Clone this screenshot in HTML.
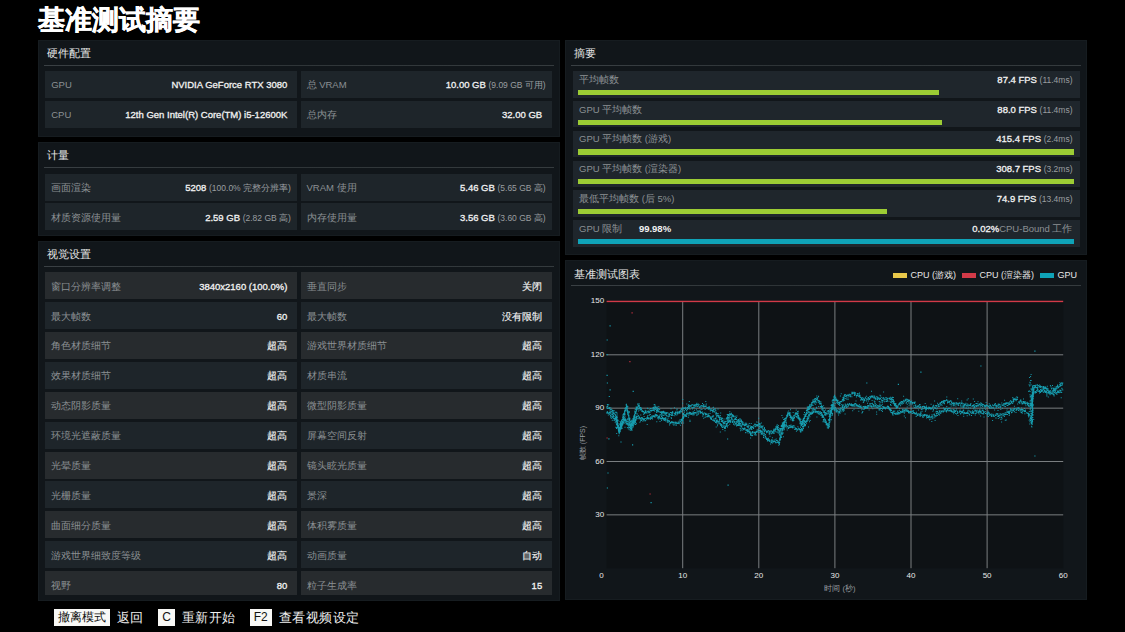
<!DOCTYPE html><html><head><meta charset="utf-8"><style>
*{margin:0;padding:0;box-sizing:border-box}
html,body{width:1125px;height:632px;background:#000;overflow:hidden;font-family:"Liberation Sans",sans-serif;color:#eee}
.a{position:absolute}
.title{left:37.8px;top:2px;font-size:27px;font-weight:bold;color:#fff;line-height:36px;letter-spacing:0px;white-space:nowrap;-webkit-text-stroke:0.5px #fff}
.panel{position:absolute;background:#11161a;border:1px solid #161c20}
.ph{position:absolute;font-size:11px;color:#e6e6e6;line-height:14px;white-space:nowrap}
.hl{position:absolute;height:1px;background:linear-gradient(90deg,#3a4044,#2e3437 40%,#353b3e)}
.row{position:absolute;height:27px;background:#1e252a}
.row.g{background:#272b2e}
.lab{position:absolute;left:6px;top:8.6px;font-size:9.5px;line-height:11px;color:#8b9093;white-space:nowrap}
.val{position:absolute;right:10px;top:8.6px;font-size:9.5px;line-height:11px;color:#f2f2f2;font-weight:normal;-webkit-text-stroke:0.3px #f2f2f2;white-space:nowrap}
.cj{font-weight:normal;-webkit-text-stroke:0.15px #f2f2f2}
.sub{font-weight:normal;color:#9a9ea0;font-size:8.5px;-webkit-text-stroke:0}
.srow{position:absolute;left:573px;width:506.5px;height:26.5px;background:#1f262c}
.bar{position:absolute;left:5.2px;top:18.7px;height:5.1px;background:#9ccc34}
.key{position:absolute;top:609px;height:17px;background:#f8f8f6;color:#111;font-size:12px;font-weight:normal;line-height:17px;text-align:center;white-space:nowrap}
.kt{position:absolute;top:609px;height:17px;color:#f0f0f0;font-size:13px;letter-spacing:0.42px;line-height:17px;white-space:nowrap}
</style></head><body><div class="a title">基准测试摘要</div>
<div class="panel" style="left:38px;top:40px;width:522px;height:97px"></div>
<div class="ph" style="left:47px;top:46px">硬件配置</div>
<div class="hl" style="left:44px;top:64.7px;width:510px"></div>
<div class="row " style="left:45.2px;top:70.5px;width:252.2px"><div class="lab">GPU</div><div class="val">NVIDIA GeForce RTX 3080</div></div>
<div class="row " style="left:300.5px;top:70.5px;width:251.7px"><div class="lab">总 VRAM</div><div class="val" style="right:6.5px">10.00 GB <span class="sub">(9.09 GB 可用)</span></div></div>
<div class="row " style="left:45.2px;top:100.5px;width:252.2px"><div class="lab">CPU</div><div class="val">12th Gen Intel(R) Core(TM) i5-12600K</div></div>
<div class="row " style="left:300.5px;top:100.5px;width:251.7px"><div class="lab">总内存</div><div class="val">32.00 GB</div></div>
<div class="panel" style="left:38px;top:142px;width:522px;height:94px"></div>
<div class="ph" style="left:47px;top:148px">计量</div>
<div class="hl" style="left:44px;top:166.7px;width:510px"></div>
<div class="row " style="left:45.2px;top:173.5px;width:252.2px"><div class="lab">画面渲染</div><div class="val" style="right:6.5px">5208 <span class="sub">(100.0% 完整分辨率)</span></div></div>
<div class="row " style="left:300.5px;top:173.5px;width:251.7px"><div class="lab">VRAM 使用</div><div class="val" style="right:6.5px">5.46 GB <span class="sub">(5.65 GB 高)</span></div></div>
<div class="row " style="left:45.2px;top:203.4px;width:252.2px"><div class="lab">材质资源使用量</div><div class="val" style="right:6.5px">2.59 GB <span class="sub">(2.82 GB 高)</span></div></div>
<div class="row " style="left:300.5px;top:203.4px;width:251.7px"><div class="lab">内存使用量</div><div class="val" style="right:6.5px">3.56 GB <span class="sub">(3.60 GB 高)</span></div></div>
<div class="panel" style="left:38px;top:241px;width:522px;height:360px"></div>
<div class="ph" style="left:47px;top:247px">视觉设置</div>
<div class="hl" style="left:44px;top:265.7px;width:510px"></div>
<div class="a" style="left:0;top:0;width:1125px;height:595px;overflow:hidden">
<div class="row g" style="left:45.2px;top:272.1px;width:252.2px"><div class="lab">窗口分辨率调整</div><div class="val">3840x2160 (100.0%)</div></div>
<div class="row g" style="left:300.5px;top:272.1px;width:251.7px"><div class="lab">垂直同步</div><div class="val"><span class="cj">关闭</span></div></div>
<div class="row " style="left:45.2px;top:302.0px;width:252.2px"><div class="lab">最大帧数</div><div class="val">60</div></div>
<div class="row " style="left:300.5px;top:302.0px;width:251.7px"><div class="lab">最大帧数</div><div class="val"><span class="cj">没有限制</span></div></div>
<div class="row g" style="left:45.2px;top:331.90000000000003px;width:252.2px"><div class="lab">角色材质细节</div><div class="val"><span class="cj">超高</span></div></div>
<div class="row g" style="left:300.5px;top:331.90000000000003px;width:251.7px"><div class="lab">游戏世界材质细节</div><div class="val"><span class="cj">超高</span></div></div>
<div class="row " style="left:45.2px;top:361.8px;width:252.2px"><div class="lab">效果材质细节</div><div class="val"><span class="cj">超高</span></div></div>
<div class="row " style="left:300.5px;top:361.8px;width:251.7px"><div class="lab">材质串流</div><div class="val"><span class="cj">超高</span></div></div>
<div class="row g" style="left:45.2px;top:391.70000000000005px;width:252.2px"><div class="lab">动态阴影质量</div><div class="val"><span class="cj">超高</span></div></div>
<div class="row g" style="left:300.5px;top:391.70000000000005px;width:251.7px"><div class="lab">微型阴影质量</div><div class="val"><span class="cj">超高</span></div></div>
<div class="row " style="left:45.2px;top:421.6px;width:252.2px"><div class="lab">环境光遮蔽质量</div><div class="val"><span class="cj">超高</span></div></div>
<div class="row " style="left:300.5px;top:421.6px;width:251.7px"><div class="lab">屏幕空间反射</div><div class="val"><span class="cj">超高</span></div></div>
<div class="row g" style="left:45.2px;top:451.5px;width:252.2px"><div class="lab">光晕质量</div><div class="val"><span class="cj">超高</span></div></div>
<div class="row g" style="left:300.5px;top:451.5px;width:251.7px"><div class="lab">镜头眩光质量</div><div class="val"><span class="cj">超高</span></div></div>
<div class="row " style="left:45.2px;top:481.4px;width:252.2px"><div class="lab">光栅质量</div><div class="val"><span class="cj">超高</span></div></div>
<div class="row " style="left:300.5px;top:481.4px;width:251.7px"><div class="lab">景深</div><div class="val"><span class="cj">超高</span></div></div>
<div class="row g" style="left:45.2px;top:511.3px;width:252.2px"><div class="lab">曲面细分质量</div><div class="val"><span class="cj">超高</span></div></div>
<div class="row g" style="left:300.5px;top:511.3px;width:251.7px"><div class="lab">体积雾质量</div><div class="val"><span class="cj">超高</span></div></div>
<div class="row " style="left:45.2px;top:541.2px;width:252.2px"><div class="lab">游戏世界细致度等级</div><div class="val"><span class="cj">超高</span></div></div>
<div class="row " style="left:300.5px;top:541.2px;width:251.7px"><div class="lab">动画质量</div><div class="val"><span class="cj">自动</span></div></div>
<div class="row g" style="left:45.2px;top:571.1px;width:252.2px"><div class="lab">视野</div><div class="val">80</div></div>
<div class="row g" style="left:300.5px;top:571.1px;width:251.7px"><div class="lab">粒子生成率</div><div class="val">15</div></div>
</div>
<div class="panel" style="left:565px;top:40px;width:522px;height:215px"></div>
<div class="ph" style="left:574px;top:46px">摘要</div>
<div class="hl" style="left:571px;top:64.7px;width:510px"></div>
<div class="srow" style="top:71.00px"><div class="lab" style="top:2.7px">平均帧数</div><div class="val" style="top:2.7px;right:7px">87.4 FPS <span class="sub">(11.4ms)</span></div><div class="bar" style="width:361.0px;background:#9ccc34"></div></div>
<div class="srow" style="top:100.86px"><div class="lab" style="top:2.7px">GPU 平均帧数</div><div class="val" style="top:2.7px;right:7px">88.0 FPS <span class="sub">(11.4ms)</span></div><div class="bar" style="width:363.4px;background:#9ccc34"></div></div>
<div class="srow" style="top:130.72px"><div class="lab" style="top:2.7px">GPU 平均帧数 (游戏)</div><div class="val" style="top:2.7px;right:7px">415.4 FPS <span class="sub">(2.4ms)</span></div><div class="bar" style="width:495.6px;background:#9ccc34"></div></div>
<div class="srow" style="top:160.58px"><div class="lab" style="top:2.7px">GPU 平均帧数 (渲染器)</div><div class="val" style="top:2.7px;right:7px">308.7 FPS <span class="sub">(3.2ms)</span></div><div class="bar" style="width:495.6px;background:#9ccc34"></div></div>
<div class="srow" style="top:190.44px"><div class="lab" style="top:2.7px">最低平均帧数 (后 5%)</div><div class="val" style="top:2.7px;right:7px">74.9 FPS <span class="sub">(13.4ms)</span></div><div class="bar" style="width:309.3px;background:#9ccc34"></div></div>
<div class="srow" style="top:220.30px"><div class="lab" style="top:2.7px">GPU 限制 <span style="color:#f2f2f2;font-weight:bold;margin-left:14px">99.98%</span></div><div class="val" style="top:2.7px;right:7px">0.02%<span style="font-weight:normal;color:#8b9093;-webkit-text-stroke:0">CPU-Bound 工作</span></div><div class="bar" style="width:495.6px;background:#0fa3b8"></div></div>
<div class="panel" style="left:565px;top:260px;width:522px;height:340px"></div>
<div class="ph" style="left:574px;top:266.6px">基准测试图表</div>
<div class="hl" style="left:571px;top:285.2px;width:510px"></div>
<svg class="a" style="left:0;top:0" width="1125" height="632" viewBox="0 0 1125 632"><rect x="606.6" y="301.45" width="456.6" height="266.75000000000006" fill="#0e1215"/><rect x="606.6" y="514.35" width="456.6" height="1" fill="#7a7e80"/><rect x="606.6" y="461.00" width="456.6" height="1" fill="#7a7e80"/><rect x="606.6" y="407.65" width="456.6" height="1" fill="#7a7e80"/><rect x="606.6" y="354.30" width="456.6" height="1" fill="#7a7e80"/><rect x="682.20" y="301.45" width="1" height="266.75000000000006" fill="#7a7e80"/><rect x="758.30" y="301.45" width="1" height="266.75000000000006" fill="#7a7e80"/><rect x="834.40" y="301.45" width="1" height="266.75000000000006" fill="#7a7e80"/><rect x="910.50" y="301.45" width="1" height="266.75000000000006" fill="#7a7e80"/><rect x="986.60" y="301.45" width="1" height="266.75000000000006" fill="#7a7e80"/><rect x="606.6" y="300.75" width="456.6" height="1.4" fill="#d23a48"/><path d="M606.3 407.3h1v1h-1zM606.5 406.0h1v1h-1zM607.1 406.3h1v1h-1zM607.3 405.6h1v1h-1zM606.8 404.2h1v1h-1zM606.9 407.9h1v1h-1zM608.2 404.2h1v1h-1zM608.4 407.2h1v1h-1zM608.6 408.1h1v1h-1zM608.2 408.0h1v1h-1zM609.0 408.1h1v1h-1zM608.7 407.9h1v1h-1zM608.9 408.0h1v1h-1zM609.3 407.1h1v1h-1zM608.8 407.8h1v1h-1zM609.5 411.4h1v1h-1zM609.4 409.5h1v1h-1zM610.1 408.9h1v1h-1zM610.4 407.6h1v1h-1zM610.3 410.8h1v1h-1zM610.4 408.9h1v1h-1zM611.4 409.3h1v1h-1zM611.7 410.6h1v1h-1zM612.1 410.1h1v1h-1zM611.1 411.5h1v1h-1zM611.5 411.1h1v1h-1zM612.6 411.6h1v1h-1zM612.2 412.2h1v1h-1zM612.7 411.9h1v1h-1zM613.1 410.2h1v1h-1zM612.7 412.9h1v1h-1zM613.7 410.2h1v1h-1zM613.3 413.0h1v1h-1zM612.8 412.6h1v1h-1zM613.9 412.7h1v1h-1zM612.8 411.8h1v1h-1zM613.4 413.0h1v1h-1zM614.9 414.2h1v1h-1zM614.8 412.2h1v1h-1zM614.4 414.1h1v1h-1zM614.9 414.2h1v1h-1zM615.1 415.1h1v1h-1zM615.3 414.5h1v1h-1zM615.2 414.9h1v1h-1zM615.3 414.6h1v1h-1zM615.5 416.1h1v1h-1zM616.5 412.7h1v1h-1zM615.6 415.8h1v1h-1zM615.7 416.8h1v1h-1zM616.0 416.6h1v1h-1zM615.8 416.6h1v1h-1zM616.5 417.2h1v1h-1zM616.5 416.0h1v1h-1zM616.0 418.1h1v1h-1zM615.5 417.5h1v1h-1zM616.4 420.1h1v1h-1zM616.8 416.9h1v1h-1zM616.4 418.0h1v1h-1zM616.4 419.3h1v1h-1zM616.4 421.9h1v1h-1zM617.0 419.3h1v1h-1zM617.6 419.7h1v1h-1zM616.7 421.0h1v1h-1zM616.9 422.0h1v1h-1zM617.0 419.8h1v1h-1zM616.9 420.7h1v1h-1zM617.5 420.4h1v1h-1zM616.7 421.8h1v1h-1zM616.6 423.7h1v1h-1zM616.7 423.0h1v1h-1zM617.1 421.9h1v1h-1zM617.7 424.8h1v1h-1zM617.7 424.8h1v1h-1zM617.1 422.6h1v1h-1zM617.4 423.9h1v1h-1zM617.1 423.0h1v1h-1zM616.7 425.3h1v1h-1zM617.6 425.5h1v1h-1zM617.6 426.4h1v1h-1zM617.4 425.6h1v1h-1zM617.4 426.5h1v1h-1zM618.1 425.2h1v1h-1zM617.3 426.1h1v1h-1zM618.3 426.6h1v1h-1zM618.6 426.8h1v1h-1zM617.3 427.3h1v1h-1zM617.8 428.5h1v1h-1zM618.1 427.1h1v1h-1zM618.1 428.8h1v1h-1zM617.7 428.2h1v1h-1zM618.6 427.9h1v1h-1zM617.8 428.8h1v1h-1zM617.9 429.5h1v1h-1zM619.0 428.8h1v1h-1zM618.8 429.4h1v1h-1zM619.2 429.3h1v1h-1zM618.9 431.1h1v1h-1zM618.7 431.9h1v1h-1zM618.9 428.6h1v1h-1zM618.7 429.0h1v1h-1zM619.6 428.4h1v1h-1zM619.3 429.7h1v1h-1zM619.8 429.6h1v1h-1zM618.7 430.0h1v1h-1zM619.3 430.1h1v1h-1zM619.8 429.0h1v1h-1zM619.7 428.7h1v1h-1zM619.3 428.3h1v1h-1zM619.8 425.2h1v1h-1zM619.6 428.0h1v1h-1zM619.7 428.0h1v1h-1zM620.4 426.1h1v1h-1zM620.4 428.8h1v1h-1zM619.9 426.1h1v1h-1zM619.9 423.1h1v1h-1zM620.7 424.2h1v1h-1zM620.9 426.8h1v1h-1zM620.6 422.6h1v1h-1zM619.5 424.3h1v1h-1zM620.8 425.8h1v1h-1zM620.8 424.9h1v1h-1zM620.8 427.0h1v1h-1zM620.8 423.0h1v1h-1zM621.0 424.6h1v1h-1zM620.9 423.9h1v1h-1zM620.8 422.9h1v1h-1zM621.3 422.6h1v1h-1zM620.7 423.0h1v1h-1zM620.9 423.0h1v1h-1zM621.7 421.8h1v1h-1zM621.3 420.1h1v1h-1zM621.4 421.6h1v1h-1zM622.2 421.8h1v1h-1zM621.8 421.2h1v1h-1zM622.2 419.3h1v1h-1zM621.9 421.1h1v1h-1zM622.2 420.9h1v1h-1zM623.1 418.9h1v1h-1zM622.1 422.2h1v1h-1zM622.2 419.1h1v1h-1zM621.8 418.9h1v1h-1zM622.3 418.4h1v1h-1zM622.8 418.7h1v1h-1zM622.9 418.3h1v1h-1zM622.2 416.9h1v1h-1zM622.3 415.8h1v1h-1zM622.5 417.6h1v1h-1zM623.2 418.1h1v1h-1zM623.7 417.0h1v1h-1zM622.6 414.8h1v1h-1zM623.4 416.9h1v1h-1zM623.6 413.8h1v1h-1zM622.6 414.1h1v1h-1zM623.3 414.2h1v1h-1zM623.7 417.0h1v1h-1zM623.8 413.2h1v1h-1zM623.2 412.9h1v1h-1zM624.4 413.9h1v1h-1zM623.3 413.5h1v1h-1zM624.5 414.0h1v1h-1zM624.3 413.3h1v1h-1zM624.2 414.4h1v1h-1zM623.8 412.4h1v1h-1zM624.0 410.4h1v1h-1zM624.2 411.4h1v1h-1zM624.4 413.3h1v1h-1zM624.4 411.1h1v1h-1zM624.5 415.8h1v1h-1zM624.5 409.8h1v1h-1zM624.3 410.6h1v1h-1zM625.0 409.6h1v1h-1zM625.0 409.7h1v1h-1zM625.4 406.9h1v1h-1zM625.0 409.9h1v1h-1zM625.3 410.3h1v1h-1zM624.3 408.2h1v1h-1zM625.5 407.1h1v1h-1zM625.3 407.3h1v1h-1zM625.4 407.7h1v1h-1zM625.2 407.6h1v1h-1zM625.9 407.9h1v1h-1zM625.8 406.8h1v1h-1zM626.0 406.1h1v1h-1zM625.7 404.0h1v1h-1zM625.7 406.8h1v1h-1zM625.8 405.1h1v1h-1zM626.1 406.3h1v1h-1zM626.4 405.5h1v1h-1zM626.3 407.4h1v1h-1zM626.5 407.9h1v1h-1zM627.0 405.8h1v1h-1zM627.3 406.1h1v1h-1zM626.5 407.4h1v1h-1zM626.0 408.6h1v1h-1zM626.6 408.7h1v1h-1zM627.0 409.5h1v1h-1zM626.6 410.7h1v1h-1zM626.8 410.8h1v1h-1zM626.5 409.1h1v1h-1zM627.1 410.5h1v1h-1zM626.7 410.1h1v1h-1zM627.5 410.4h1v1h-1zM627.2 411.2h1v1h-1zM627.5 411.4h1v1h-1zM626.5 410.3h1v1h-1zM627.0 412.2h1v1h-1zM627.1 412.6h1v1h-1zM627.3 420.7h1v1h-1zM627.0 412.4h1v1h-1zM627.7 413.6h1v1h-1zM627.3 413.8h1v1h-1zM628.2 411.5h1v1h-1zM628.4 414.7h1v1h-1zM627.3 414.2h1v1h-1zM627.2 419.0h1v1h-1zM628.6 412.2h1v1h-1zM628.2 415.2h1v1h-1zM627.7 412.7h1v1h-1zM627.7 413.9h1v1h-1zM628.1 415.6h1v1h-1zM628.4 418.5h1v1h-1zM628.3 416.8h1v1h-1zM628.0 415.3h1v1h-1zM628.9 417.5h1v1h-1zM628.3 417.7h1v1h-1zM628.9 417.5h1v1h-1zM629.2 417.4h1v1h-1zM628.4 418.2h1v1h-1zM629.4 417.9h1v1h-1zM629.3 418.8h1v1h-1zM628.6 419.4h1v1h-1zM629.2 418.9h1v1h-1zM628.8 422.5h1v1h-1zM629.3 421.7h1v1h-1zM628.9 420.1h1v1h-1zM628.9 422.3h1v1h-1zM629.4 422.5h1v1h-1zM629.8 420.6h1v1h-1zM629.5 422.4h1v1h-1zM629.7 421.4h1v1h-1zM629.8 424.8h1v1h-1zM629.7 422.3h1v1h-1zM630.3 421.1h1v1h-1zM630.6 422.7h1v1h-1zM630.1 425.4h1v1h-1zM630.4 423.7h1v1h-1zM629.6 424.4h1v1h-1zM630.3 424.0h1v1h-1zM630.2 424.1h1v1h-1zM630.2 425.5h1v1h-1zM630.3 423.8h1v1h-1zM629.8 425.7h1v1h-1zM630.4 426.4h1v1h-1zM630.7 425.9h1v1h-1zM630.4 425.7h1v1h-1zM631.3 429.1h1v1h-1zM630.5 424.2h1v1h-1zM630.5 429.1h1v1h-1zM630.6 427.8h1v1h-1zM630.8 425.8h1v1h-1zM631.4 424.7h1v1h-1zM631.2 425.3h1v1h-1zM632.0 424.1h1v1h-1zM631.1 425.8h1v1h-1zM631.5 424.0h1v1h-1zM631.3 422.0h1v1h-1zM631.1 423.1h1v1h-1zM631.0 424.9h1v1h-1zM631.8 424.9h1v1h-1zM631.8 423.0h1v1h-1zM631.3 425.3h1v1h-1zM632.2 422.2h1v1h-1zM632.3 422.7h1v1h-1zM631.8 422.0h1v1h-1zM631.7 420.3h1v1h-1zM632.6 419.8h1v1h-1zM632.5 420.1h1v1h-1zM631.9 421.9h1v1h-1zM632.5 421.1h1v1h-1zM633.0 419.0h1v1h-1zM631.7 421.8h1v1h-1zM632.9 421.4h1v1h-1zM633.0 419.1h1v1h-1zM633.3 416.9h1v1h-1zM633.4 418.8h1v1h-1zM633.5 421.0h1v1h-1zM633.6 417.5h1v1h-1zM633.0 418.0h1v1h-1zM633.6 417.2h1v1h-1zM633.3 416.6h1v1h-1zM633.8 417.4h1v1h-1zM633.2 415.6h1v1h-1zM634.1 416.3h1v1h-1zM634.0 416.9h1v1h-1zM634.1 414.4h1v1h-1zM634.4 417.4h1v1h-1zM634.0 414.8h1v1h-1zM634.1 413.8h1v1h-1zM634.0 417.1h1v1h-1zM634.1 413.8h1v1h-1zM635.4 411.2h1v1h-1zM634.8 415.4h1v1h-1zM635.5 413.5h1v1h-1zM634.9 412.1h1v1h-1zM634.6 413.0h1v1h-1zM634.4 411.0h1v1h-1zM635.5 413.1h1v1h-1zM634.9 412.0h1v1h-1zM634.3 411.4h1v1h-1zM634.6 411.5h1v1h-1zM635.5 411.7h1v1h-1zM635.9 410.6h1v1h-1zM635.9 409.1h1v1h-1zM635.1 408.8h1v1h-1zM635.8 409.2h1v1h-1zM636.3 408.0h1v1h-1zM636.0 410.5h1v1h-1zM635.9 409.5h1v1h-1zM636.0 406.5h1v1h-1zM635.6 406.4h1v1h-1zM636.4 406.8h1v1h-1zM635.9 407.5h1v1h-1zM636.0 408.4h1v1h-1zM636.3 406.4h1v1h-1zM637.2 407.3h1v1h-1zM636.8 408.7h1v1h-1zM636.6 406.7h1v1h-1zM637.1 406.6h1v1h-1zM637.4 406.6h1v1h-1zM637.7 406.1h1v1h-1zM637.1 403.5h1v1h-1zM637.8 405.5h1v1h-1zM637.6 404.6h1v1h-1zM638.2 405.0h1v1h-1zM638.2 408.2h1v1h-1zM638.8 404.9h1v1h-1zM638.4 403.3h1v1h-1zM637.9 410.4h1v1h-1zM638.8 405.7h1v1h-1zM639.0 407.5h1v1h-1zM639.0 407.5h1v1h-1zM639.0 407.2h1v1h-1zM639.7 409.4h1v1h-1zM639.6 407.0h1v1h-1zM640.0 408.5h1v1h-1zM639.3 409.6h1v1h-1zM639.3 407.0h1v1h-1zM640.7 408.3h1v1h-1zM640.5 407.8h1v1h-1zM640.2 408.3h1v1h-1zM640.5 409.3h1v1h-1zM641.6 409.9h1v1h-1zM640.4 407.1h1v1h-1zM641.1 408.9h1v1h-1zM641.7 410.4h1v1h-1zM641.2 410.8h1v1h-1zM642.0 411.1h1v1h-1zM642.0 410.7h1v1h-1zM642.5 411.6h1v1h-1zM641.9 410.4h1v1h-1zM642.3 410.5h1v1h-1zM643.0 411.3h1v1h-1zM643.4 412.8h1v1h-1zM643.2 411.0h1v1h-1zM643.9 412.5h1v1h-1zM643.2 413.9h1v1h-1zM644.4 411.9h1v1h-1zM644.2 412.3h1v1h-1zM644.2 412.9h1v1h-1zM644.7 411.9h1v1h-1zM645.2 412.2h1v1h-1zM645.0 411.5h1v1h-1zM645.7 411.7h1v1h-1zM645.9 412.6h1v1h-1zM646.4 410.5h1v1h-1zM646.9 407.7h1v1h-1zM646.8 411.0h1v1h-1zM647.4 412.6h1v1h-1zM647.1 416.8h1v1h-1zM648.1 410.6h1v1h-1zM647.7 411.6h1v1h-1zM648.1 411.8h1v1h-1zM649.0 411.8h1v1h-1zM649.3 412.0h1v1h-1zM649.3 409.2h1v1h-1zM649.2 413.8h1v1h-1zM649.9 414.0h1v1h-1zM649.8 409.8h1v1h-1zM649.5 411.5h1v1h-1zM650.7 410.0h1v1h-1zM650.3 410.3h1v1h-1zM650.7 410.1h1v1h-1zM651.1 410.4h1v1h-1zM651.6 409.5h1v1h-1zM651.6 409.8h1v1h-1zM651.3 408.3h1v1h-1zM652.4 409.9h1v1h-1zM652.4 407.2h1v1h-1zM653.0 409.7h1v1h-1zM652.7 408.4h1v1h-1zM652.8 408.6h1v1h-1zM653.1 406.7h1v1h-1zM652.9 407.3h1v1h-1zM653.9 408.8h1v1h-1zM653.4 408.5h1v1h-1zM653.7 409.9h1v1h-1zM653.7 407.7h1v1h-1zM653.4 406.7h1v1h-1zM654.8 406.8h1v1h-1zM654.6 405.3h1v1h-1zM654.5 405.9h1v1h-1zM655.6 407.4h1v1h-1zM655.5 406.6h1v1h-1zM655.5 406.8h1v1h-1zM654.9 407.1h1v1h-1zM655.5 407.3h1v1h-1zM656.0 410.1h1v1h-1zM656.4 409.3h1v1h-1zM656.9 408.9h1v1h-1zM656.8 406.5h1v1h-1zM656.6 407.6h1v1h-1zM656.5 410.0h1v1h-1zM657.4 408.6h1v1h-1zM657.5 411.4h1v1h-1zM657.1 410.8h1v1h-1zM657.5 409.8h1v1h-1zM658.2 408.1h1v1h-1zM658.3 410.5h1v1h-1zM658.2 408.6h1v1h-1zM658.2 411.1h1v1h-1zM659.3 411.5h1v1h-1zM659.2 411.5h1v1h-1zM659.2 409.0h1v1h-1zM659.8 411.9h1v1h-1zM659.6 411.4h1v1h-1zM660.5 414.5h1v1h-1zM661.1 413.6h1v1h-1zM659.6 414.3h1v1h-1zM660.6 411.2h1v1h-1zM660.8 412.2h1v1h-1zM661.1 412.8h1v1h-1zM661.7 411.1h1v1h-1zM661.5 411.8h1v1h-1zM661.8 412.1h1v1h-1zM662.8 412.2h1v1h-1zM662.7 411.7h1v1h-1zM662.9 410.7h1v1h-1zM663.1 410.9h1v1h-1zM663.3 412.1h1v1h-1zM663.8 412.7h1v1h-1zM664.3 411.4h1v1h-1zM664.5 414.3h1v1h-1zM664.5 412.4h1v1h-1zM665.3 412.9h1v1h-1zM665.5 412.2h1v1h-1zM665.8 413.3h1v1h-1zM666.4 415.0h1v1h-1zM666.1 413.3h1v1h-1zM666.0 413.0h1v1h-1zM666.4 411.9h1v1h-1zM666.4 415.0h1v1h-1zM667.3 412.6h1v1h-1zM668.6 415.8h1v1h-1zM668.4 414.0h1v1h-1zM668.8 413.8h1v1h-1zM668.6 412.8h1v1h-1zM669.1 415.6h1v1h-1zM669.0 413.7h1v1h-1zM669.4 414.4h1v1h-1zM670.0 411.9h1v1h-1zM669.7 414.1h1v1h-1zM670.9 413.6h1v1h-1zM671.1 412.0h1v1h-1zM671.0 415.1h1v1h-1zM671.6 412.9h1v1h-1zM671.7 414.8h1v1h-1zM671.8 414.0h1v1h-1zM672.2 411.1h1v1h-1zM672.5 414.9h1v1h-1zM672.5 412.4h1v1h-1zM673.9 412.7h1v1h-1zM673.9 407.3h1v1h-1zM674.3 415.2h1v1h-1zM674.2 413.6h1v1h-1zM674.2 412.9h1v1h-1zM674.9 414.1h1v1h-1zM674.9 414.0h1v1h-1zM675.3 412.7h1v1h-1zM675.0 412.0h1v1h-1zM676.4 411.9h1v1h-1zM676.3 414.5h1v1h-1zM676.3 411.6h1v1h-1zM676.3 412.3h1v1h-1zM677.2 413.4h1v1h-1zM676.9 412.7h1v1h-1zM676.9 412.2h1v1h-1zM678.5 412.1h1v1h-1zM677.4 411.2h1v1h-1zM677.9 412.5h1v1h-1zM679.0 412.3h1v1h-1zM679.3 411.7h1v1h-1zM679.4 410.8h1v1h-1zM678.8 411.0h1v1h-1zM680.2 411.3h1v1h-1zM679.4 412.7h1v1h-1zM679.6 410.9h1v1h-1zM680.5 411.6h1v1h-1zM679.9 409.7h1v1h-1zM681.1 409.2h1v1h-1zM681.1 411.3h1v1h-1zM681.1 408.3h1v1h-1zM681.6 410.6h1v1h-1zM681.5 408.2h1v1h-1zM682.1 402.7h1v1h-1zM682.9 409.6h1v1h-1zM683.1 416.1h1v1h-1zM682.7 407.4h1v1h-1zM682.9 407.9h1v1h-1zM683.4 407.4h1v1h-1zM684.0 410.2h1v1h-1zM684.2 408.0h1v1h-1zM685.1 408.8h1v1h-1zM684.5 407.4h1v1h-1zM685.1 406.7h1v1h-1zM685.1 409.1h1v1h-1zM685.0 408.5h1v1h-1zM686.3 408.2h1v1h-1zM686.6 411.7h1v1h-1zM686.7 406.9h1v1h-1zM686.2 410.2h1v1h-1zM687.3 407.0h1v1h-1zM687.6 408.0h1v1h-1zM687.4 407.1h1v1h-1zM687.6 405.2h1v1h-1zM688.6 407.8h1v1h-1zM688.8 406.7h1v1h-1zM688.4 405.7h1v1h-1zM688.8 401.1h1v1h-1zM689.0 405.6h1v1h-1zM689.1 404.8h1v1h-1zM689.5 408.7h1v1h-1zM689.9 405.7h1v1h-1zM690.2 405.3h1v1h-1zM690.4 405.0h1v1h-1zM690.6 405.7h1v1h-1zM690.6 405.1h1v1h-1zM691.7 407.2h1v1h-1zM691.3 404.4h1v1h-1zM691.4 406.9h1v1h-1zM692.3 404.2h1v1h-1zM693.5 406.6h1v1h-1zM693.0 404.7h1v1h-1zM693.8 405.2h1v1h-1zM693.2 406.6h1v1h-1zM693.3 406.6h1v1h-1zM694.6 404.2h1v1h-1zM694.6 405.5h1v1h-1zM694.0 404.4h1v1h-1zM695.6 406.0h1v1h-1zM695.5 404.3h1v1h-1zM695.9 403.8h1v1h-1zM696.1 404.8h1v1h-1zM695.4 404.7h1v1h-1zM696.4 402.8h1v1h-1zM696.2 404.3h1v1h-1zM697.1 406.1h1v1h-1zM697.4 404.1h1v1h-1zM697.8 403.5h1v1h-1zM697.2 404.1h1v1h-1zM697.7 405.0h1v1h-1zM698.6 405.9h1v1h-1zM698.7 404.2h1v1h-1zM698.7 406.0h1v1h-1zM700.7 406.4h1v1h-1zM700.2 406.3h1v1h-1zM700.3 406.6h1v1h-1zM700.2 405.4h1v1h-1zM701.4 405.1h1v1h-1zM700.7 405.2h1v1h-1zM700.4 406.7h1v1h-1zM702.0 403.0h1v1h-1zM702.1 405.8h1v1h-1zM702.3 405.8h1v1h-1zM702.8 404.8h1v1h-1zM702.9 405.5h1v1h-1zM702.9 406.1h1v1h-1zM703.3 407.2h1v1h-1zM704.2 405.4h1v1h-1zM703.8 406.1h1v1h-1zM704.6 405.9h1v1h-1zM704.6 409.1h1v1h-1zM705.5 404.8h1v1h-1zM705.3 401.0h1v1h-1zM705.6 406.1h1v1h-1zM705.8 403.6h1v1h-1zM705.9 407.8h1v1h-1zM706.6 407.1h1v1h-1zM706.9 407.5h1v1h-1zM706.9 407.4h1v1h-1zM707.8 407.1h1v1h-1zM708.3 407.6h1v1h-1zM708.5 406.3h1v1h-1zM708.3 408.2h1v1h-1zM709.0 406.5h1v1h-1zM708.2 407.9h1v1h-1zM708.3 408.0h1v1h-1zM709.1 408.2h1v1h-1zM709.2 407.8h1v1h-1zM709.6 409.3h1v1h-1zM709.8 410.4h1v1h-1zM710.4 409.5h1v1h-1zM710.7 408.2h1v1h-1zM711.6 409.5h1v1h-1zM711.2 410.0h1v1h-1zM711.3 409.7h1v1h-1zM713.0 408.9h1v1h-1zM712.1 409.8h1v1h-1zM712.6 410.2h1v1h-1zM712.3 409.7h1v1h-1zM712.3 410.5h1v1h-1zM712.9 406.7h1v1h-1zM712.1 411.4h1v1h-1zM712.9 410.4h1v1h-1zM713.4 409.1h1v1h-1zM713.7 411.3h1v1h-1zM713.4 411.3h1v1h-1zM713.5 410.4h1v1h-1zM714.0 411.4h1v1h-1zM714.4 408.6h1v1h-1zM715.3 412.8h1v1h-1zM715.3 410.5h1v1h-1zM715.9 412.8h1v1h-1zM715.5 412.2h1v1h-1zM715.7 412.1h1v1h-1zM715.3 414.3h1v1h-1zM715.5 413.0h1v1h-1zM716.6 414.9h1v1h-1zM716.6 413.2h1v1h-1zM716.1 415.4h1v1h-1zM717.5 408.5h1v1h-1zM716.5 414.5h1v1h-1zM718.2 415.2h1v1h-1zM717.5 415.5h1v1h-1zM717.7 415.0h1v1h-1zM717.8 414.8h1v1h-1zM717.6 413.1h1v1h-1zM718.2 415.4h1v1h-1zM718.5 415.8h1v1h-1zM718.2 416.4h1v1h-1zM719.2 417.4h1v1h-1zM718.4 415.6h1v1h-1zM718.6 416.3h1v1h-1zM719.8 415.0h1v1h-1zM718.9 418.6h1v1h-1zM719.0 419.4h1v1h-1zM719.8 418.7h1v1h-1zM719.1 419.5h1v1h-1zM720.9 417.5h1v1h-1zM720.9 419.2h1v1h-1zM720.9 418.7h1v1h-1zM720.6 418.5h1v1h-1zM721.4 420.0h1v1h-1zM721.4 419.8h1v1h-1zM721.5 417.4h1v1h-1zM721.9 418.1h1v1h-1zM722.3 420.8h1v1h-1zM721.8 419.9h1v1h-1zM722.6 420.2h1v1h-1zM721.8 421.0h1v1h-1zM722.4 422.3h1v1h-1zM723.0 422.7h1v1h-1zM722.5 421.8h1v1h-1zM722.8 422.0h1v1h-1zM723.4 423.0h1v1h-1zM723.3 423.4h1v1h-1zM722.8 422.3h1v1h-1zM723.2 422.4h1v1h-1zM723.8 421.7h1v1h-1zM723.7 421.8h1v1h-1zM724.2 423.1h1v1h-1zM724.0 423.0h1v1h-1zM724.0 427.0h1v1h-1zM724.3 421.1h1v1h-1zM725.2 421.2h1v1h-1zM725.1 421.4h1v1h-1zM725.1 420.9h1v1h-1zM724.7 421.2h1v1h-1zM725.7 423.0h1v1h-1zM725.9 420.8h1v1h-1zM725.6 418.4h1v1h-1zM726.2 418.3h1v1h-1zM726.1 417.4h1v1h-1zM726.5 417.3h1v1h-1zM727.1 420.3h1v1h-1zM726.7 414.1h1v1h-1zM727.3 417.8h1v1h-1zM727.2 415.7h1v1h-1zM726.8 418.5h1v1h-1zM727.3 416.5h1v1h-1zM727.1 416.8h1v1h-1zM727.8 414.8h1v1h-1zM727.6 416.9h1v1h-1zM728.3 417.5h1v1h-1zM728.9 417.4h1v1h-1zM728.7 414.1h1v1h-1zM728.6 416.7h1v1h-1zM728.8 415.3h1v1h-1zM727.9 415.1h1v1h-1zM727.6 413.9h1v1h-1zM728.5 414.4h1v1h-1zM729.0 415.4h1v1h-1zM730.0 413.5h1v1h-1zM730.0 414.4h1v1h-1zM729.3 413.0h1v1h-1zM730.5 413.4h1v1h-1zM729.3 411.3h1v1h-1zM729.8 413.7h1v1h-1zM730.3 417.0h1v1h-1zM730.8 414.4h1v1h-1zM731.0 412.7h1v1h-1zM731.8 414.1h1v1h-1zM731.6 416.3h1v1h-1zM732.1 415.8h1v1h-1zM731.9 414.7h1v1h-1zM732.4 415.3h1v1h-1zM732.8 414.8h1v1h-1zM733.3 415.9h1v1h-1zM732.6 415.2h1v1h-1zM732.9 416.3h1v1h-1zM733.3 415.4h1v1h-1zM733.5 416.1h1v1h-1zM734.5 418.4h1v1h-1zM734.5 417.4h1v1h-1zM734.8 415.8h1v1h-1zM734.9 417.4h1v1h-1zM734.8 419.1h1v1h-1zM735.5 418.5h1v1h-1zM736.0 417.1h1v1h-1zM735.4 418.5h1v1h-1zM736.4 415.5h1v1h-1zM735.7 419.1h1v1h-1zM737.4 419.4h1v1h-1zM736.4 421.0h1v1h-1zM736.8 420.5h1v1h-1zM736.2 419.3h1v1h-1zM737.0 420.5h1v1h-1zM737.4 421.7h1v1h-1zM738.0 419.0h1v1h-1zM738.0 420.5h1v1h-1zM738.3 421.4h1v1h-1zM738.3 420.0h1v1h-1zM739.2 420.6h1v1h-1zM739.1 421.2h1v1h-1zM739.4 421.5h1v1h-1zM739.6 418.3h1v1h-1zM740.0 420.6h1v1h-1zM740.4 420.7h1v1h-1zM740.9 419.6h1v1h-1zM740.4 422.9h1v1h-1zM741.3 421.5h1v1h-1zM741.0 421.8h1v1h-1zM742.0 423.3h1v1h-1zM742.2 421.3h1v1h-1zM742.1 423.8h1v1h-1zM742.4 422.1h1v1h-1zM742.2 422.4h1v1h-1zM742.4 423.9h1v1h-1zM742.9 424.0h1v1h-1zM743.7 425.0h1v1h-1zM743.5 422.8h1v1h-1zM743.5 424.4h1v1h-1zM744.4 424.0h1v1h-1zM744.8 425.0h1v1h-1zM743.9 425.3h1v1h-1zM745.4 422.6h1v1h-1zM745.1 424.5h1v1h-1zM745.2 423.6h1v1h-1zM745.3 423.2h1v1h-1zM746.1 423.9h1v1h-1zM746.2 425.5h1v1h-1zM746.3 423.4h1v1h-1zM746.9 425.8h1v1h-1zM746.8 426.5h1v1h-1zM747.0 430.0h1v1h-1zM747.7 424.6h1v1h-1zM747.7 427.2h1v1h-1zM747.9 426.2h1v1h-1zM748.3 425.5h1v1h-1zM748.8 423.0h1v1h-1zM748.7 428.3h1v1h-1zM749.2 429.3h1v1h-1zM749.8 427.9h1v1h-1zM749.5 425.2h1v1h-1zM750.6 428.8h1v1h-1zM750.6 426.9h1v1h-1zM750.5 426.1h1v1h-1zM751.1 427.9h1v1h-1zM749.9 427.0h1v1h-1zM751.1 426.7h1v1h-1zM751.5 426.1h1v1h-1zM752.2 426.5h1v1h-1zM752.0 427.0h1v1h-1zM752.0 426.9h1v1h-1zM752.9 427.7h1v1h-1zM752.8 427.1h1v1h-1zM752.2 427.0h1v1h-1zM753.1 428.1h1v1h-1zM753.3 425.5h1v1h-1zM753.3 425.1h1v1h-1zM753.9 424.3h1v1h-1zM754.5 423.4h1v1h-1zM754.6 426.3h1v1h-1zM755.3 425.5h1v1h-1zM755.2 423.9h1v1h-1zM755.4 426.0h1v1h-1zM755.9 425.1h1v1h-1zM756.8 424.3h1v1h-1zM756.2 421.5h1v1h-1zM757.0 425.1h1v1h-1zM757.1 425.5h1v1h-1zM757.7 421.8h1v1h-1zM758.1 423.3h1v1h-1zM757.8 424.4h1v1h-1zM758.2 417.8h1v1h-1zM758.5 425.6h1v1h-1zM758.7 424.1h1v1h-1zM759.1 423.0h1v1h-1zM759.3 426.7h1v1h-1zM758.9 426.0h1v1h-1zM759.6 424.5h1v1h-1zM759.2 423.5h1v1h-1zM759.7 423.3h1v1h-1zM759.7 425.8h1v1h-1zM760.3 427.3h1v1h-1zM760.6 425.5h1v1h-1zM761.1 426.2h1v1h-1zM760.9 427.3h1v1h-1zM762.1 426.8h1v1h-1zM761.7 425.8h1v1h-1zM761.6 426.0h1v1h-1zM761.9 428.3h1v1h-1zM762.7 425.4h1v1h-1zM762.4 428.8h1v1h-1zM762.6 428.5h1v1h-1zM762.8 429.2h1v1h-1zM763.9 427.1h1v1h-1zM764.0 428.1h1v1h-1zM764.3 429.3h1v1h-1zM763.8 430.2h1v1h-1zM763.6 429.2h1v1h-1zM764.0 431.2h1v1h-1zM764.9 434.1h1v1h-1zM765.4 430.5h1v1h-1zM764.8 429.3h1v1h-1zM765.0 429.6h1v1h-1zM766.0 432.3h1v1h-1zM766.5 431.8h1v1h-1zM766.5 431.4h1v1h-1zM765.9 430.9h1v1h-1zM766.4 430.8h1v1h-1zM766.8 430.8h1v1h-1zM767.6 431.6h1v1h-1zM766.9 430.6h1v1h-1zM768.7 433.4h1v1h-1zM768.7 432.5h1v1h-1zM768.9 433.8h1v1h-1zM768.7 430.8h1v1h-1zM769.2 431.7h1v1h-1zM769.8 431.7h1v1h-1zM769.4 433.2h1v1h-1zM770.3 430.6h1v1h-1zM769.3 430.7h1v1h-1zM770.8 433.3h1v1h-1zM770.8 430.2h1v1h-1zM771.3 432.6h1v1h-1zM771.9 431.4h1v1h-1zM771.5 431.1h1v1h-1zM772.0 431.5h1v1h-1zM772.1 431.3h1v1h-1zM771.7 432.5h1v1h-1zM772.6 431.8h1v1h-1zM772.9 430.7h1v1h-1zM772.8 432.8h1v1h-1zM773.7 432.6h1v1h-1zM773.1 428.8h1v1h-1zM773.9 430.5h1v1h-1zM772.9 430.1h1v1h-1zM774.2 430.1h1v1h-1zM773.9 428.7h1v1h-1zM774.7 431.2h1v1h-1zM774.9 428.1h1v1h-1zM774.6 429.6h1v1h-1zM774.8 428.5h1v1h-1zM774.8 429.4h1v1h-1zM775.0 428.9h1v1h-1zM775.1 426.5h1v1h-1zM774.5 430.2h1v1h-1zM776.2 431.4h1v1h-1zM776.0 428.5h1v1h-1zM775.8 426.4h1v1h-1zM776.5 426.7h1v1h-1zM776.7 424.3h1v1h-1zM776.3 425.6h1v1h-1zM776.7 429.0h1v1h-1zM777.5 426.7h1v1h-1zM777.1 425.9h1v1h-1zM776.9 427.2h1v1h-1zM777.2 428.5h1v1h-1zM776.9 431.5h1v1h-1zM777.3 429.4h1v1h-1zM777.5 429.6h1v1h-1zM778.1 426.8h1v1h-1zM777.6 429.3h1v1h-1zM778.3 430.4h1v1h-1zM778.0 428.9h1v1h-1zM777.7 432.6h1v1h-1zM778.6 431.2h1v1h-1zM778.8 431.1h1v1h-1zM777.8 432.4h1v1h-1zM777.8 432.4h1v1h-1zM778.8 432.2h1v1h-1zM778.9 433.4h1v1h-1zM778.8 431.9h1v1h-1zM779.6 430.0h1v1h-1zM779.2 428.1h1v1h-1zM780.1 431.6h1v1h-1zM779.4 430.8h1v1h-1zM778.9 429.5h1v1h-1zM780.0 429.4h1v1h-1zM779.9 427.9h1v1h-1zM779.9 428.3h1v1h-1zM780.1 429.5h1v1h-1zM780.0 429.8h1v1h-1zM780.4 429.6h1v1h-1zM781.0 426.2h1v1h-1zM781.2 428.4h1v1h-1zM780.7 428.0h1v1h-1zM781.3 428.8h1v1h-1zM781.2 426.0h1v1h-1zM780.7 426.0h1v1h-1zM781.0 425.9h1v1h-1zM781.4 427.9h1v1h-1zM781.6 425.0h1v1h-1zM782.1 425.5h1v1h-1zM780.8 425.0h1v1h-1zM782.3 425.2h1v1h-1zM782.1 423.8h1v1h-1zM782.2 426.4h1v1h-1zM782.5 424.4h1v1h-1zM781.9 423.9h1v1h-1zM782.9 423.3h1v1h-1zM782.9 425.0h1v1h-1zM782.8 423.4h1v1h-1zM782.9 426.0h1v1h-1zM782.8 421.8h1v1h-1zM782.8 422.6h1v1h-1zM783.8 423.2h1v1h-1zM783.1 419.1h1v1h-1zM784.0 422.0h1v1h-1zM784.5 419.9h1v1h-1zM783.8 421.8h1v1h-1zM783.6 421.0h1v1h-1zM784.0 418.8h1v1h-1zM784.4 420.1h1v1h-1zM784.7 421.7h1v1h-1zM784.3 421.4h1v1h-1zM784.4 420.3h1v1h-1zM784.8 418.6h1v1h-1zM784.4 418.0h1v1h-1zM785.1 418.0h1v1h-1zM784.5 419.7h1v1h-1zM785.4 419.9h1v1h-1zM785.2 417.9h1v1h-1zM785.4 417.3h1v1h-1zM785.9 418.5h1v1h-1zM785.9 418.3h1v1h-1zM785.2 418.6h1v1h-1zM786.7 414.2h1v1h-1zM786.0 421.8h1v1h-1zM786.6 416.0h1v1h-1zM786.0 415.6h1v1h-1zM786.7 415.0h1v1h-1zM786.8 415.7h1v1h-1zM786.4 414.9h1v1h-1zM787.1 415.8h1v1h-1zM787.1 414.7h1v1h-1zM787.3 413.3h1v1h-1zM787.9 413.0h1v1h-1zM787.2 413.9h1v1h-1zM787.4 413.1h1v1h-1zM787.0 413.4h1v1h-1zM788.2 412.5h1v1h-1zM787.2 411.7h1v1h-1zM788.7 412.1h1v1h-1zM787.7 413.2h1v1h-1zM788.5 412.7h1v1h-1zM788.1 413.5h1v1h-1zM789.0 413.5h1v1h-1zM788.6 415.2h1v1h-1zM788.8 414.7h1v1h-1zM789.3 412.6h1v1h-1zM789.7 415.0h1v1h-1zM788.9 413.7h1v1h-1zM789.4 415.1h1v1h-1zM789.8 414.3h1v1h-1zM790.0 415.6h1v1h-1zM789.8 414.8h1v1h-1zM789.6 417.0h1v1h-1zM790.0 415.5h1v1h-1zM790.0 416.5h1v1h-1zM790.3 419.3h1v1h-1zM790.5 415.9h1v1h-1zM790.8 418.1h1v1h-1zM790.4 417.5h1v1h-1zM791.2 417.3h1v1h-1zM791.4 417.2h1v1h-1zM791.7 416.5h1v1h-1zM791.9 419.1h1v1h-1zM791.7 418.6h1v1h-1zM791.8 419.9h1v1h-1zM792.1 418.4h1v1h-1zM792.4 420.5h1v1h-1zM792.1 418.5h1v1h-1zM792.6 417.6h1v1h-1zM792.4 418.1h1v1h-1zM792.7 419.9h1v1h-1zM792.8 418.7h1v1h-1zM792.9 418.1h1v1h-1zM793.1 417.2h1v1h-1zM793.4 419.8h1v1h-1zM792.9 415.8h1v1h-1zM793.0 418.1h1v1h-1zM793.7 417.2h1v1h-1zM793.5 418.0h1v1h-1zM793.6 417.3h1v1h-1zM794.0 417.0h1v1h-1zM794.6 415.5h1v1h-1zM794.4 414.6h1v1h-1zM794.6 415.7h1v1h-1zM794.5 416.0h1v1h-1zM795.5 413.7h1v1h-1zM794.8 412.5h1v1h-1zM795.5 413.3h1v1h-1zM795.8 413.2h1v1h-1zM794.8 413.6h1v1h-1zM795.7 412.3h1v1h-1zM795.7 409.4h1v1h-1zM796.1 412.4h1v1h-1zM796.8 413.6h1v1h-1zM796.9 413.3h1v1h-1zM797.1 412.7h1v1h-1zM796.5 412.4h1v1h-1zM796.2 413.4h1v1h-1zM797.1 410.9h1v1h-1zM796.7 414.4h1v1h-1zM797.3 413.3h1v1h-1zM797.0 414.6h1v1h-1zM796.8 413.6h1v1h-1zM797.7 414.7h1v1h-1zM797.7 412.6h1v1h-1zM797.6 415.3h1v1h-1zM797.3 416.1h1v1h-1zM797.4 415.0h1v1h-1zM798.1 418.1h1v1h-1zM798.3 416.4h1v1h-1zM797.6 417.1h1v1h-1zM798.1 418.6h1v1h-1zM798.1 415.0h1v1h-1zM797.5 417.9h1v1h-1zM798.6 417.2h1v1h-1zM798.5 417.5h1v1h-1zM799.2 418.7h1v1h-1zM799.3 417.7h1v1h-1zM798.3 418.6h1v1h-1zM798.9 419.6h1v1h-1zM799.7 421.1h1v1h-1zM799.4 419.8h1v1h-1zM799.7 419.4h1v1h-1zM799.4 422.4h1v1h-1zM799.6 420.6h1v1h-1zM800.4 421.2h1v1h-1zM799.8 422.3h1v1h-1zM799.6 420.9h1v1h-1zM799.6 423.3h1v1h-1zM800.4 418.8h1v1h-1zM800.5 422.3h1v1h-1zM800.4 423.7h1v1h-1zM799.7 423.0h1v1h-1zM800.4 422.4h1v1h-1zM801.2 424.9h1v1h-1zM801.1 422.9h1v1h-1zM800.4 425.2h1v1h-1zM801.1 423.8h1v1h-1zM801.4 423.2h1v1h-1zM801.3 424.3h1v1h-1zM801.8 422.4h1v1h-1zM801.4 423.3h1v1h-1zM801.8 423.0h1v1h-1zM801.5 422.6h1v1h-1zM801.4 422.9h1v1h-1zM802.1 424.1h1v1h-1zM802.4 422.6h1v1h-1zM801.3 421.1h1v1h-1zM802.0 421.5h1v1h-1zM802.7 422.1h1v1h-1zM802.0 420.4h1v1h-1zM802.3 420.0h1v1h-1zM802.9 420.0h1v1h-1zM803.0 419.1h1v1h-1zM803.5 421.0h1v1h-1zM802.4 419.5h1v1h-1zM802.8 419.3h1v1h-1zM802.8 418.8h1v1h-1zM803.0 419.0h1v1h-1zM803.4 420.5h1v1h-1zM803.5 417.9h1v1h-1zM802.9 417.9h1v1h-1zM803.6 416.7h1v1h-1zM804.0 417.9h1v1h-1zM803.6 419.4h1v1h-1zM804.2 416.3h1v1h-1zM804.2 417.8h1v1h-1zM804.2 415.7h1v1h-1zM803.5 413.9h1v1h-1zM804.0 412.1h1v1h-1zM804.2 416.9h1v1h-1zM804.8 414.8h1v1h-1zM804.5 415.2h1v1h-1zM805.0 416.1h1v1h-1zM805.3 414.9h1v1h-1zM805.3 414.5h1v1h-1zM806.6 412.9h1v1h-1zM804.9 413.4h1v1h-1zM806.1 411.9h1v1h-1zM805.9 414.1h1v1h-1zM805.9 411.9h1v1h-1zM805.9 412.7h1v1h-1zM805.9 410.3h1v1h-1zM806.8 409.3h1v1h-1zM806.5 409.3h1v1h-1zM806.3 410.5h1v1h-1zM807.0 408.7h1v1h-1zM807.4 410.3h1v1h-1zM807.9 412.2h1v1h-1zM807.3 412.2h1v1h-1zM807.6 410.9h1v1h-1zM806.7 409.6h1v1h-1zM807.7 408.2h1v1h-1zM808.1 407.4h1v1h-1zM808.3 407.7h1v1h-1zM807.8 406.8h1v1h-1zM807.8 407.0h1v1h-1zM809.0 408.0h1v1h-1zM809.3 411.6h1v1h-1zM808.5 406.7h1v1h-1zM809.1 408.2h1v1h-1zM808.9 406.3h1v1h-1zM809.2 408.3h1v1h-1zM809.1 404.7h1v1h-1zM809.6 405.8h1v1h-1zM809.9 406.7h1v1h-1zM809.8 406.2h1v1h-1zM809.5 403.9h1v1h-1zM809.3 405.1h1v1h-1zM810.7 404.8h1v1h-1zM810.8 405.7h1v1h-1zM811.2 411.4h1v1h-1zM811.0 403.3h1v1h-1zM811.5 404.6h1v1h-1zM810.8 403.4h1v1h-1zM811.8 402.2h1v1h-1zM811.2 402.1h1v1h-1zM811.3 404.0h1v1h-1zM811.5 403.4h1v1h-1zM812.4 401.5h1v1h-1zM812.3 401.9h1v1h-1zM812.2 400.5h1v1h-1zM812.6 399.2h1v1h-1zM812.9 401.0h1v1h-1zM813.7 403.2h1v1h-1zM813.6 402.1h1v1h-1zM813.9 401.0h1v1h-1zM813.5 399.8h1v1h-1zM813.8 401.6h1v1h-1zM814.7 399.8h1v1h-1zM814.2 398.9h1v1h-1zM814.4 398.0h1v1h-1zM815.1 400.6h1v1h-1zM815.1 398.2h1v1h-1zM814.4 398.8h1v1h-1zM815.4 398.1h1v1h-1zM816.0 398.9h1v1h-1zM816.9 397.8h1v1h-1zM815.7 400.6h1v1h-1zM816.1 399.0h1v1h-1zM816.5 398.8h1v1h-1zM817.0 397.8h1v1h-1zM817.2 397.6h1v1h-1zM816.5 397.1h1v1h-1zM817.5 400.3h1v1h-1zM816.7 398.5h1v1h-1zM817.4 400.3h1v1h-1zM817.2 399.4h1v1h-1zM817.7 401.7h1v1h-1zM818.1 396.3h1v1h-1zM818.3 400.1h1v1h-1zM818.6 401.2h1v1h-1zM818.1 399.9h1v1h-1zM818.7 401.8h1v1h-1zM819.2 401.1h1v1h-1zM818.8 400.6h1v1h-1zM818.9 401.0h1v1h-1zM819.2 401.3h1v1h-1zM819.6 401.6h1v1h-1zM819.0 400.7h1v1h-1zM819.5 403.4h1v1h-1zM818.9 403.3h1v1h-1zM819.5 403.1h1v1h-1zM819.9 406.0h1v1h-1zM820.3 403.6h1v1h-1zM820.3 403.1h1v1h-1zM821.0 403.6h1v1h-1zM820.1 403.1h1v1h-1zM820.6 403.6h1v1h-1zM820.9 405.9h1v1h-1zM821.2 405.0h1v1h-1zM821.2 406.5h1v1h-1zM822.0 406.0h1v1h-1zM821.4 406.2h1v1h-1zM821.5 407.0h1v1h-1zM821.9 407.8h1v1h-1zM821.3 408.8h1v1h-1zM822.7 408.2h1v1h-1zM822.1 409.5h1v1h-1zM821.9 409.5h1v1h-1zM822.4 407.8h1v1h-1zM822.6 407.5h1v1h-1zM822.6 408.3h1v1h-1zM822.6 409.5h1v1h-1zM822.7 408.2h1v1h-1zM822.4 409.8h1v1h-1zM824.0 407.5h1v1h-1zM823.6 410.2h1v1h-1zM823.7 411.3h1v1h-1zM822.9 411.5h1v1h-1zM823.2 411.6h1v1h-1zM823.5 412.1h1v1h-1zM823.8 410.5h1v1h-1zM824.2 413.7h1v1h-1zM824.1 413.8h1v1h-1zM824.9 412.3h1v1h-1zM824.9 412.1h1v1h-1zM824.7 413.5h1v1h-1zM825.0 409.5h1v1h-1zM824.7 414.8h1v1h-1zM824.0 411.5h1v1h-1zM825.2 414.5h1v1h-1zM825.8 413.0h1v1h-1zM825.7 414.3h1v1h-1zM825.9 412.6h1v1h-1zM826.7 412.6h1v1h-1zM826.4 413.0h1v1h-1zM826.1 412.8h1v1h-1zM826.8 413.4h1v1h-1zM826.9 410.5h1v1h-1zM826.8 413.6h1v1h-1zM827.9 410.8h1v1h-1zM828.2 412.6h1v1h-1zM828.1 412.5h1v1h-1zM828.5 411.1h1v1h-1zM829.0 409.5h1v1h-1zM828.7 416.1h1v1h-1zM828.6 411.9h1v1h-1zM829.5 414.0h1v1h-1zM830.1 412.4h1v1h-1zM830.1 412.5h1v1h-1zM829.8 409.9h1v1h-1zM831.1 411.7h1v1h-1zM830.2 411.3h1v1h-1zM830.6 409.6h1v1h-1zM830.5 409.0h1v1h-1zM831.2 409.0h1v1h-1zM830.9 419.2h1v1h-1zM830.4 410.5h1v1h-1zM830.5 407.6h1v1h-1zM832.0 413.7h1v1h-1zM831.2 408.4h1v1h-1zM831.4 407.7h1v1h-1zM831.8 407.1h1v1h-1zM831.3 408.1h1v1h-1zM831.4 405.6h1v1h-1zM831.4 406.2h1v1h-1zM831.8 407.7h1v1h-1zM831.8 404.1h1v1h-1zM832.5 406.0h1v1h-1zM832.0 404.5h1v1h-1zM831.2 404.3h1v1h-1zM832.4 405.6h1v1h-1zM831.9 404.9h1v1h-1zM832.8 404.8h1v1h-1zM831.9 404.4h1v1h-1zM832.3 405.1h1v1h-1zM832.7 403.4h1v1h-1zM832.8 404.4h1v1h-1zM832.5 402.7h1v1h-1zM832.2 404.5h1v1h-1zM831.6 400.6h1v1h-1zM832.7 402.2h1v1h-1zM832.5 400.5h1v1h-1zM832.3 401.9h1v1h-1zM832.3 399.3h1v1h-1zM833.1 398.7h1v1h-1zM832.9 400.4h1v1h-1zM833.2 399.5h1v1h-1zM833.5 402.5h1v1h-1zM833.1 399.0h1v1h-1zM833.0 400.3h1v1h-1zM832.2 400.3h1v1h-1zM834.0 398.2h1v1h-1zM834.1 398.6h1v1h-1zM833.5 399.5h1v1h-1zM833.7 404.9h1v1h-1zM833.3 399.4h1v1h-1zM834.2 396.2h1v1h-1zM834.4 398.4h1v1h-1zM833.6 396.1h1v1h-1zM834.1 396.5h1v1h-1zM833.8 395.8h1v1h-1zM833.5 398.5h1v1h-1zM834.6 397.3h1v1h-1zM834.4 400.0h1v1h-1zM834.7 403.1h1v1h-1zM835.1 399.2h1v1h-1zM834.8 396.7h1v1h-1zM835.3 399.5h1v1h-1zM835.3 396.8h1v1h-1zM836.2 398.8h1v1h-1zM835.5 398.2h1v1h-1zM835.9 400.1h1v1h-1zM836.5 400.2h1v1h-1zM836.6 401.0h1v1h-1zM836.3 399.7h1v1h-1zM836.7 401.2h1v1h-1zM836.3 401.9h1v1h-1zM836.9 400.8h1v1h-1zM836.7 403.2h1v1h-1zM837.4 399.7h1v1h-1zM837.6 400.5h1v1h-1zM837.9 402.3h1v1h-1zM838.1 403.9h1v1h-1zM837.8 402.2h1v1h-1zM839.1 404.8h1v1h-1zM838.0 402.1h1v1h-1zM838.6 403.1h1v1h-1zM839.4 404.9h1v1h-1zM838.9 402.0h1v1h-1zM839.1 403.4h1v1h-1zM839.5 402.7h1v1h-1zM839.4 403.0h1v1h-1zM839.7 402.4h1v1h-1zM839.6 402.2h1v1h-1zM839.3 401.6h1v1h-1zM839.9 395.6h1v1h-1zM840.9 401.0h1v1h-1zM840.1 401.0h1v1h-1zM841.2 401.2h1v1h-1zM841.1 401.3h1v1h-1zM841.6 400.3h1v1h-1zM841.9 399.1h1v1h-1zM841.8 404.8h1v1h-1zM842.5 397.1h1v1h-1zM842.8 400.6h1v1h-1zM842.3 399.4h1v1h-1zM842.5 398.9h1v1h-1zM843.0 397.7h1v1h-1zM843.2 398.6h1v1h-1zM843.2 399.4h1v1h-1zM844.1 399.7h1v1h-1zM843.4 397.5h1v1h-1zM843.5 397.1h1v1h-1zM843.8 395.5h1v1h-1zM843.5 396.7h1v1h-1zM844.7 398.0h1v1h-1zM844.4 394.0h1v1h-1zM844.8 395.6h1v1h-1zM844.1 394.4h1v1h-1zM845.0 395.8h1v1h-1zM845.5 396.0h1v1h-1zM844.8 394.0h1v1h-1zM845.9 395.1h1v1h-1zM846.2 396.4h1v1h-1zM846.9 394.7h1v1h-1zM846.6 394.5h1v1h-1zM847.5 399.1h1v1h-1zM847.5 397.6h1v1h-1zM847.4 395.3h1v1h-1zM848.3 394.8h1v1h-1zM848.3 394.6h1v1h-1zM848.5 395.7h1v1h-1zM848.8 393.8h1v1h-1zM849.9 396.2h1v1h-1zM849.8 395.2h1v1h-1zM849.8 393.9h1v1h-1zM850.3 395.3h1v1h-1zM849.6 395.2h1v1h-1zM851.3 391.8h1v1h-1zM851.3 393.4h1v1h-1zM851.4 392.9h1v1h-1zM851.4 396.3h1v1h-1zM852.1 392.7h1v1h-1zM852.5 391.8h1v1h-1zM852.2 393.3h1v1h-1zM852.4 392.1h1v1h-1zM853.8 391.7h1v1h-1zM854.1 394.5h1v1h-1zM853.9 395.0h1v1h-1zM854.0 394.6h1v1h-1zM854.2 393.2h1v1h-1zM854.2 392.8h1v1h-1zM854.9 393.6h1v1h-1zM854.9 392.2h1v1h-1zM855.9 396.4h1v1h-1zM855.8 395.1h1v1h-1zM856.2 395.1h1v1h-1zM856.6 393.6h1v1h-1zM856.3 395.3h1v1h-1zM857.2 394.7h1v1h-1zM857.3 394.5h1v1h-1zM857.2 394.9h1v1h-1zM857.1 393.0h1v1h-1zM857.8 395.8h1v1h-1zM858.6 395.8h1v1h-1zM858.5 393.1h1v1h-1zM859.5 394.7h1v1h-1zM858.6 394.2h1v1h-1zM859.4 395.5h1v1h-1zM859.3 396.7h1v1h-1zM858.9 394.8h1v1h-1zM859.5 396.0h1v1h-1zM859.3 395.4h1v1h-1zM860.2 396.9h1v1h-1zM860.3 397.0h1v1h-1zM860.5 399.0h1v1h-1zM860.9 397.6h1v1h-1zM861.2 397.7h1v1h-1zM860.8 397.9h1v1h-1zM861.0 398.4h1v1h-1zM861.7 399.5h1v1h-1zM861.3 397.6h1v1h-1zM862.1 397.3h1v1h-1zM861.9 399.3h1v1h-1zM862.2 399.4h1v1h-1zM862.4 398.7h1v1h-1zM862.8 401.9h1v1h-1zM863.4 400.7h1v1h-1zM863.1 397.8h1v1h-1zM863.5 400.1h1v1h-1zM863.6 399.3h1v1h-1zM863.9 399.1h1v1h-1zM864.4 400.1h1v1h-1zM864.0 398.8h1v1h-1zM864.9 396.7h1v1h-1zM864.8 397.6h1v1h-1zM865.7 398.4h1v1h-1zM865.6 397.9h1v1h-1zM866.1 400.4h1v1h-1zM866.1 395.7h1v1h-1zM866.4 399.2h1v1h-1zM867.3 398.7h1v1h-1zM867.6 398.5h1v1h-1zM868.1 397.0h1v1h-1zM867.7 398.3h1v1h-1zM867.5 397.5h1v1h-1zM867.5 397.2h1v1h-1zM868.8 397.9h1v1h-1zM868.7 399.0h1v1h-1zM868.8 398.3h1v1h-1zM869.3 396.0h1v1h-1zM870.4 395.8h1v1h-1zM870.2 397.6h1v1h-1zM870.1 397.0h1v1h-1zM870.6 396.3h1v1h-1zM870.4 395.8h1v1h-1zM871.0 390.7h1v1h-1zM871.6 396.8h1v1h-1zM871.6 396.0h1v1h-1zM871.8 395.6h1v1h-1zM872.3 396.6h1v1h-1zM872.5 395.9h1v1h-1zM872.7 395.4h1v1h-1zM873.1 397.3h1v1h-1zM873.4 397.4h1v1h-1zM874.1 395.5h1v1h-1zM874.2 396.7h1v1h-1zM873.4 397.6h1v1h-1zM874.5 397.8h1v1h-1zM875.1 398.7h1v1h-1zM874.8 398.4h1v1h-1zM875.3 397.6h1v1h-1zM875.3 398.4h1v1h-1zM875.5 398.5h1v1h-1zM876.3 396.1h1v1h-1zM876.9 398.3h1v1h-1zM877.3 396.7h1v1h-1zM877.2 396.8h1v1h-1zM876.8 399.3h1v1h-1zM877.2 399.0h1v1h-1zM878.0 398.2h1v1h-1zM878.4 397.7h1v1h-1zM878.8 398.1h1v1h-1zM878.4 397.3h1v1h-1zM878.7 400.9h1v1h-1zM879.1 398.9h1v1h-1zM878.9 401.3h1v1h-1zM880.0 397.9h1v1h-1zM880.4 401.7h1v1h-1zM879.9 398.4h1v1h-1zM880.7 397.0h1v1h-1zM880.3 401.6h1v1h-1zM881.2 399.3h1v1h-1zM881.3 400.3h1v1h-1zM882.3 400.1h1v1h-1zM882.0 399.9h1v1h-1zM882.3 400.8h1v1h-1zM882.8 397.0h1v1h-1zM882.2 397.8h1v1h-1zM883.6 398.5h1v1h-1zM883.8 398.4h1v1h-1zM883.1 398.3h1v1h-1zM883.6 399.5h1v1h-1zM884.2 398.6h1v1h-1zM883.9 401.3h1v1h-1zM885.5 400.9h1v1h-1zM884.8 397.2h1v1h-1zM885.3 399.3h1v1h-1zM886.1 397.3h1v1h-1zM886.2 400.8h1v1h-1zM886.6 401.1h1v1h-1zM886.3 399.3h1v1h-1zM887.2 398.5h1v1h-1zM887.0 400.3h1v1h-1zM887.1 398.3h1v1h-1zM888.5 400.7h1v1h-1zM887.5 397.8h1v1h-1zM888.9 397.7h1v1h-1zM889.1 397.6h1v1h-1zM889.1 398.5h1v1h-1zM890.1 396.8h1v1h-1zM888.8 398.0h1v1h-1zM890.3 399.3h1v1h-1zM889.8 398.7h1v1h-1zM890.5 399.1h1v1h-1zM890.7 397.9h1v1h-1zM890.9 402.2h1v1h-1zM891.5 398.5h1v1h-1zM891.9 399.3h1v1h-1zM891.9 399.6h1v1h-1zM891.9 396.8h1v1h-1zM891.9 400.9h1v1h-1zM893.1 399.9h1v1h-1zM892.4 399.5h1v1h-1zM892.3 399.0h1v1h-1zM891.7 396.9h1v1h-1zM892.7 399.3h1v1h-1zM893.1 401.4h1v1h-1zM892.9 401.3h1v1h-1zM893.3 401.3h1v1h-1zM893.0 401.2h1v1h-1zM892.4 402.6h1v1h-1zM893.9 401.3h1v1h-1zM893.4 401.7h1v1h-1zM894.3 403.0h1v1h-1zM893.6 403.1h1v1h-1zM893.7 404.2h1v1h-1zM894.6 404.9h1v1h-1zM895.1 403.4h1v1h-1zM894.1 404.9h1v1h-1zM894.2 404.6h1v1h-1zM894.1 403.6h1v1h-1zM895.0 404.2h1v1h-1zM895.4 403.1h1v1h-1zM894.9 404.1h1v1h-1zM894.8 404.9h1v1h-1zM896.0 407.1h1v1h-1zM895.8 406.0h1v1h-1zM895.3 406.1h1v1h-1zM895.5 407.4h1v1h-1zM895.6 405.6h1v1h-1zM895.7 407.4h1v1h-1zM896.3 407.2h1v1h-1zM895.9 407.8h1v1h-1zM896.7 406.7h1v1h-1zM897.3 406.9h1v1h-1zM897.2 406.4h1v1h-1zM897.5 405.7h1v1h-1zM897.5 410.2h1v1h-1zM898.6 403.2h1v1h-1zM898.1 404.2h1v1h-1zM897.9 404.5h1v1h-1zM898.6 403.1h1v1h-1zM899.0 402.4h1v1h-1zM898.9 403.5h1v1h-1zM899.0 403.8h1v1h-1zM899.0 402.7h1v1h-1zM899.6 404.2h1v1h-1zM900.0 402.4h1v1h-1zM899.4 402.9h1v1h-1zM900.1 405.2h1v1h-1zM900.2 401.4h1v1h-1zM900.8 402.8h1v1h-1zM901.3 402.4h1v1h-1zM901.6 402.0h1v1h-1zM901.0 401.1h1v1h-1zM901.4 401.0h1v1h-1zM902.8 400.7h1v1h-1zM902.1 401.2h1v1h-1zM902.1 402.4h1v1h-1zM903.1 395.7h1v1h-1zM903.9 401.2h1v1h-1zM903.2 399.8h1v1h-1zM902.9 402.4h1v1h-1zM904.5 400.1h1v1h-1zM904.1 401.3h1v1h-1zM904.8 398.7h1v1h-1zM905.5 400.4h1v1h-1zM905.2 399.5h1v1h-1zM905.9 402.1h1v1h-1zM905.6 402.7h1v1h-1zM906.6 399.3h1v1h-1zM906.3 398.6h1v1h-1zM906.2 399.3h1v1h-1zM907.5 401.0h1v1h-1zM907.1 400.7h1v1h-1zM906.8 400.9h1v1h-1zM907.6 398.9h1v1h-1zM907.3 400.6h1v1h-1zM908.0 400.0h1v1h-1zM909.3 399.6h1v1h-1zM908.3 401.6h1v1h-1zM909.0 399.9h1v1h-1zM908.5 402.8h1v1h-1zM910.0 402.6h1v1h-1zM909.8 401.2h1v1h-1zM909.4 401.2h1v1h-1zM910.1 401.0h1v1h-1zM910.7 401.7h1v1h-1zM911.6 403.2h1v1h-1zM911.6 402.5h1v1h-1zM911.3 400.6h1v1h-1zM911.9 402.2h1v1h-1zM912.0 402.1h1v1h-1zM911.9 402.8h1v1h-1zM912.9 402.4h1v1h-1zM912.8 405.5h1v1h-1zM913.5 402.3h1v1h-1zM913.4 401.8h1v1h-1zM913.8 402.5h1v1h-1zM914.4 402.6h1v1h-1zM914.0 403.1h1v1h-1zM914.7 401.5h1v1h-1zM914.8 405.6h1v1h-1zM914.6 404.8h1v1h-1zM914.6 404.8h1v1h-1zM914.9 405.8h1v1h-1zM915.3 404.6h1v1h-1zM915.1 407.2h1v1h-1zM916.3 406.4h1v1h-1zM915.9 406.4h1v1h-1zM916.7 405.8h1v1h-1zM916.6 407.4h1v1h-1zM917.5 405.5h1v1h-1zM917.7 405.7h1v1h-1zM917.8 405.2h1v1h-1zM917.4 406.0h1v1h-1zM918.0 409.6h1v1h-1zM918.8 406.9h1v1h-1zM918.4 406.7h1v1h-1zM918.6 405.3h1v1h-1zM919.8 406.7h1v1h-1zM919.6 406.8h1v1h-1zM920.1 406.6h1v1h-1zM920.5 406.9h1v1h-1zM919.8 405.8h1v1h-1zM920.8 408.9h1v1h-1zM921.7 408.4h1v1h-1zM921.7 406.1h1v1h-1zM922.0 406.8h1v1h-1zM922.6 407.9h1v1h-1zM922.7 408.2h1v1h-1zM922.7 407.9h1v1h-1zM924.0 406.1h1v1h-1zM922.7 406.0h1v1h-1zM923.3 405.8h1v1h-1zM923.9 406.7h1v1h-1zM924.1 407.7h1v1h-1zM924.4 406.6h1v1h-1zM924.1 406.6h1v1h-1zM924.8 407.3h1v1h-1zM924.9 408.5h1v1h-1zM925.5 409.4h1v1h-1zM926.2 408.1h1v1h-1zM925.8 409.0h1v1h-1zM926.0 405.6h1v1h-1zM925.8 407.4h1v1h-1zM927.1 407.9h1v1h-1zM927.2 408.0h1v1h-1zM927.3 408.0h1v1h-1zM928.2 407.3h1v1h-1zM928.1 408.6h1v1h-1zM928.4 406.5h1v1h-1zM929.0 407.9h1v1h-1zM928.9 407.1h1v1h-1zM929.8 408.0h1v1h-1zM930.2 408.5h1v1h-1zM929.7 407.3h1v1h-1zM929.7 408.0h1v1h-1zM930.6 407.2h1v1h-1zM930.6 407.6h1v1h-1zM930.6 403.8h1v1h-1zM931.3 408.6h1v1h-1zM931.2 407.9h1v1h-1zM932.1 407.2h1v1h-1zM933.2 406.6h1v1h-1zM932.1 406.6h1v1h-1zM932.6 405.4h1v1h-1zM932.9 409.0h1v1h-1zM933.2 406.5h1v1h-1zM934.1 407.5h1v1h-1zM933.0 404.8h1v1h-1zM934.1 400.4h1v1h-1zM934.5 406.4h1v1h-1zM934.8 405.0h1v1h-1zM934.7 407.2h1v1h-1zM935.9 405.7h1v1h-1zM936.3 408.6h1v1h-1zM935.9 405.2h1v1h-1zM936.3 405.0h1v1h-1zM936.6 405.4h1v1h-1zM936.4 410.7h1v1h-1zM936.8 407.4h1v1h-1zM937.7 403.9h1v1h-1zM937.0 402.7h1v1h-1zM938.1 405.9h1v1h-1zM938.0 405.4h1v1h-1zM938.2 403.9h1v1h-1zM938.2 404.2h1v1h-1zM938.8 403.4h1v1h-1zM939.1 405.7h1v1h-1zM939.5 402.4h1v1h-1zM940.1 402.9h1v1h-1zM939.9 404.4h1v1h-1zM940.4 402.0h1v1h-1zM940.6 404.2h1v1h-1zM940.6 403.8h1v1h-1zM941.0 402.0h1v1h-1zM941.4 401.0h1v1h-1zM941.1 401.1h1v1h-1zM942.1 402.6h1v1h-1zM942.5 401.1h1v1h-1zM943.0 401.5h1v1h-1zM942.5 402.2h1v1h-1zM942.8 400.3h1v1h-1zM943.0 402.6h1v1h-1zM943.9 399.9h1v1h-1zM943.2 401.5h1v1h-1zM944.1 400.8h1v1h-1zM943.9 403.2h1v1h-1zM944.0 402.4h1v1h-1zM944.4 400.7h1v1h-1zM944.7 400.6h1v1h-1zM944.8 400.5h1v1h-1zM945.4 400.1h1v1h-1zM945.6 400.1h1v1h-1zM946.0 399.2h1v1h-1zM946.1 399.8h1v1h-1zM946.3 396.4h1v1h-1zM947.0 402.6h1v1h-1zM947.1 402.1h1v1h-1zM947.3 401.0h1v1h-1zM947.3 399.7h1v1h-1zM948.1 401.5h1v1h-1zM947.9 401.6h1v1h-1zM949.3 403.4h1v1h-1zM948.9 400.7h1v1h-1zM948.9 401.7h1v1h-1zM949.4 400.8h1v1h-1zM948.4 402.1h1v1h-1zM949.6 403.5h1v1h-1zM950.3 399.9h1v1h-1zM949.9 403.4h1v1h-1zM950.7 404.0h1v1h-1zM951.1 402.3h1v1h-1zM951.3 402.5h1v1h-1zM951.9 403.1h1v1h-1zM951.5 402.6h1v1h-1zM951.0 402.5h1v1h-1zM951.9 402.9h1v1h-1zM952.8 402.5h1v1h-1zM952.7 404.0h1v1h-1zM952.9 403.0h1v1h-1zM953.9 403.0h1v1h-1zM953.5 402.2h1v1h-1zM953.7 405.3h1v1h-1zM953.5 404.8h1v1h-1zM954.5 403.9h1v1h-1zM954.8 402.5h1v1h-1zM955.4 405.5h1v1h-1zM955.8 402.7h1v1h-1zM956.2 403.8h1v1h-1zM956.0 402.2h1v1h-1zM956.3 403.8h1v1h-1zM956.5 402.4h1v1h-1zM957.0 403.3h1v1h-1zM957.7 405.0h1v1h-1zM957.5 403.7h1v1h-1zM957.9 403.5h1v1h-1zM958.1 402.7h1v1h-1zM958.8 402.6h1v1h-1zM958.3 404.8h1v1h-1zM959.3 403.0h1v1h-1zM960.3 403.7h1v1h-1zM960.3 405.1h1v1h-1zM961.2 400.6h1v1h-1zM960.4 406.3h1v1h-1zM961.0 403.1h1v1h-1zM961.4 402.0h1v1h-1zM961.2 403.1h1v1h-1zM961.9 406.6h1v1h-1zM962.4 404.6h1v1h-1zM962.8 406.5h1v1h-1zM962.8 405.2h1v1h-1zM963.7 403.4h1v1h-1zM963.7 404.5h1v1h-1zM963.4 407.1h1v1h-1zM963.8 403.8h1v1h-1zM964.6 404.0h1v1h-1zM964.6 404.2h1v1h-1zM964.1 405.2h1v1h-1zM965.4 407.4h1v1h-1zM965.4 402.7h1v1h-1zM965.5 403.8h1v1h-1zM966.2 407.6h1v1h-1zM965.8 404.9h1v1h-1zM966.6 399.5h1v1h-1zM966.7 405.6h1v1h-1zM967.2 403.4h1v1h-1zM967.3 405.0h1v1h-1zM967.4 405.4h1v1h-1zM968.3 406.8h1v1h-1zM968.5 404.7h1v1h-1zM968.4 404.3h1v1h-1zM968.8 404.9h1v1h-1zM970.1 405.3h1v1h-1zM969.9 404.1h1v1h-1zM969.8 405.0h1v1h-1zM970.1 407.5h1v1h-1zM970.3 403.6h1v1h-1zM970.4 403.1h1v1h-1zM971.5 406.1h1v1h-1zM971.7 406.0h1v1h-1zM971.6 405.8h1v1h-1zM971.9 405.0h1v1h-1zM972.0 405.0h1v1h-1zM972.7 405.1h1v1h-1zM973.0 405.5h1v1h-1zM972.9 404.6h1v1h-1zM973.7 404.2h1v1h-1zM974.0 406.5h1v1h-1zM973.9 405.9h1v1h-1zM974.1 401.0h1v1h-1zM974.2 404.4h1v1h-1zM975.5 403.0h1v1h-1zM975.4 406.3h1v1h-1zM976.1 405.5h1v1h-1zM975.9 406.0h1v1h-1zM976.5 403.0h1v1h-1zM976.6 404.8h1v1h-1zM977.4 405.7h1v1h-1zM977.5 404.6h1v1h-1zM977.5 401.2h1v1h-1zM977.5 405.1h1v1h-1zM978.6 403.2h1v1h-1zM977.8 405.2h1v1h-1zM978.5 404.5h1v1h-1zM979.3 403.7h1v1h-1zM978.9 403.9h1v1h-1zM979.6 405.7h1v1h-1zM980.2 404.8h1v1h-1zM980.3 404.2h1v1h-1zM980.0 402.6h1v1h-1zM981.0 404.8h1v1h-1zM981.1 403.3h1v1h-1zM981.1 402.7h1v1h-1zM981.4 405.0h1v1h-1zM981.9 404.6h1v1h-1zM982.1 406.1h1v1h-1zM981.9 403.7h1v1h-1zM982.9 403.9h1v1h-1zM983.8 404.7h1v1h-1zM983.6 405.5h1v1h-1zM983.6 404.9h1v1h-1zM983.7 407.4h1v1h-1zM984.1 405.1h1v1h-1zM984.4 406.3h1v1h-1zM984.4 406.1h1v1h-1zM985.3 405.2h1v1h-1zM985.7 404.6h1v1h-1zM985.9 404.3h1v1h-1zM985.7 405.2h1v1h-1zM986.7 404.9h1v1h-1zM986.6 405.6h1v1h-1zM987.3 405.1h1v1h-1zM987.3 405.3h1v1h-1zM987.9 406.3h1v1h-1zM988.3 406.0h1v1h-1zM988.1 405.9h1v1h-1zM988.5 406.4h1v1h-1zM989.0 407.2h1v1h-1zM989.3 404.9h1v1h-1zM989.5 408.0h1v1h-1zM989.7 404.4h1v1h-1zM989.6 406.7h1v1h-1zM990.5 406.1h1v1h-1zM990.1 405.0h1v1h-1zM990.7 405.9h1v1h-1zM991.1 407.3h1v1h-1zM991.5 407.4h1v1h-1zM992.0 404.6h1v1h-1zM992.5 406.7h1v1h-1zM992.4 404.7h1v1h-1zM993.0 405.2h1v1h-1zM994.0 403.7h1v1h-1zM993.4 407.7h1v1h-1zM994.1 409.4h1v1h-1zM994.2 404.4h1v1h-1zM994.5 405.2h1v1h-1zM994.4 405.2h1v1h-1zM994.9 405.2h1v1h-1zM995.6 406.4h1v1h-1zM995.5 405.3h1v1h-1zM996.2 405.3h1v1h-1zM995.7 406.8h1v1h-1zM996.2 404.7h1v1h-1zM996.5 405.5h1v1h-1zM997.7 405.1h1v1h-1zM996.6 406.0h1v1h-1zM997.6 403.7h1v1h-1zM998.4 403.5h1v1h-1zM998.4 404.2h1v1h-1zM998.1 406.9h1v1h-1zM999.2 404.1h1v1h-1zM999.5 406.6h1v1h-1zM999.4 405.8h1v1h-1zM999.7 404.5h1v1h-1zM999.7 407.1h1v1h-1zM1000.4 406.3h1v1h-1zM1000.3 406.4h1v1h-1zM1001.3 402.6h1v1h-1zM1001.6 404.5h1v1h-1zM1001.8 405.1h1v1h-1zM1001.5 404.3h1v1h-1zM1002.0 407.7h1v1h-1zM1003.3 404.7h1v1h-1zM1002.8 404.6h1v1h-1zM1003.3 403.1h1v1h-1zM1003.5 404.1h1v1h-1zM1003.7 405.7h1v1h-1zM1003.9 403.2h1v1h-1zM1003.9 403.4h1v1h-1zM1004.8 403.2h1v1h-1zM1005.2 404.0h1v1h-1zM1004.9 405.9h1v1h-1zM1005.1 403.0h1v1h-1zM1005.9 403.1h1v1h-1zM1006.1 403.2h1v1h-1zM1005.9 402.8h1v1h-1zM1006.4 402.0h1v1h-1zM1007.3 405.0h1v1h-1zM1008.6 402.8h1v1h-1zM1007.7 402.3h1v1h-1zM1008.1 403.5h1v1h-1zM1008.0 403.6h1v1h-1zM1007.5 404.8h1v1h-1zM1009.0 401.6h1v1h-1zM1008.8 403.9h1v1h-1zM1008.6 403.8h1v1h-1zM1009.1 404.0h1v1h-1zM1009.7 403.4h1v1h-1zM1009.9 402.9h1v1h-1zM1010.4 400.7h1v1h-1zM1010.6 400.7h1v1h-1zM1011.0 401.9h1v1h-1zM1010.7 401.4h1v1h-1zM1010.8 402.4h1v1h-1zM1011.9 402.4h1v1h-1zM1011.4 400.8h1v1h-1zM1012.7 398.6h1v1h-1zM1012.9 401.4h1v1h-1zM1012.2 403.1h1v1h-1zM1012.9 399.9h1v1h-1zM1012.6 400.9h1v1h-1zM1012.9 399.5h1v1h-1zM1013.8 399.3h1v1h-1zM1012.5 398.4h1v1h-1zM1013.4 400.7h1v1h-1zM1014.7 399.1h1v1h-1zM1014.1 398.3h1v1h-1zM1014.7 399.0h1v1h-1zM1015.0 398.7h1v1h-1zM1015.7 399.1h1v1h-1zM1015.4 399.7h1v1h-1zM1015.5 397.4h1v1h-1zM1015.7 400.2h1v1h-1zM1016.4 396.3h1v1h-1zM1016.1 399.0h1v1h-1zM1016.8 398.6h1v1h-1zM1017.1 396.9h1v1h-1zM1017.2 403.4h1v1h-1zM1017.9 401.5h1v1h-1zM1016.9 399.1h1v1h-1zM1018.0 401.6h1v1h-1zM1018.1 401.7h1v1h-1zM1019.1 401.6h1v1h-1zM1019.3 402.0h1v1h-1zM1019.3 403.1h1v1h-1zM1019.4 400.7h1v1h-1zM1019.8 400.3h1v1h-1zM1020.0 399.4h1v1h-1zM1020.6 401.0h1v1h-1zM1020.8 400.7h1v1h-1zM1020.4 399.4h1v1h-1zM1021.0 402.3h1v1h-1zM1021.8 403.2h1v1h-1zM1021.6 403.4h1v1h-1zM1022.3 403.2h1v1h-1zM1022.0 402.5h1v1h-1zM1022.5 400.9h1v1h-1zM1022.8 402.6h1v1h-1zM1023.1 401.8h1v1h-1zM1023.3 400.9h1v1h-1zM1023.8 402.8h1v1h-1zM1024.1 401.7h1v1h-1zM1024.5 402.8h1v1h-1zM1024.6 401.0h1v1h-1zM1024.1 402.4h1v1h-1zM1024.8 403.5h1v1h-1zM1025.3 402.2h1v1h-1zM1025.4 405.2h1v1h-1zM1025.5 403.3h1v1h-1zM1026.6 402.8h1v1h-1zM1026.7 402.7h1v1h-1zM1027.1 404.2h1v1h-1zM1027.3 404.5h1v1h-1zM1027.0 403.7h1v1h-1zM1027.9 403.0h1v1h-1zM1027.5 402.4h1v1h-1zM1028.0 403.0h1v1h-1zM1028.4 405.1h1v1h-1zM1029.5 402.7h1v1h-1zM1028.1 404.5h1v1h-1zM1029.9 403.5h1v1h-1zM1028.7 406.1h1v1h-1zM1030.4 399.5h1v1h-1zM1030.4 404.0h1v1h-1zM1030.2 405.0h1v1h-1zM1031.1 403.2h1v1h-1zM1031.5 404.9h1v1h-1zM1030.8 405.4h1v1h-1zM1031.8 403.9h1v1h-1zM1031.4 404.4h1v1h-1zM1030.9 403.2h1v1h-1zM1031.0 404.0h1v1h-1zM1031.8 405.5h1v1h-1zM1030.9 402.6h1v1h-1zM1031.2 403.8h1v1h-1zM1031.9 402.1h1v1h-1zM1031.6 402.2h1v1h-1zM1031.6 399.4h1v1h-1zM1031.5 400.2h1v1h-1zM1031.4 401.0h1v1h-1zM1031.2 396.4h1v1h-1zM1032.2 399.5h1v1h-1zM1032.0 400.7h1v1h-1zM1031.6 400.2h1v1h-1zM1032.2 400.0h1v1h-1zM1031.5 400.4h1v1h-1zM1031.7 399.6h1v1h-1zM1031.1 399.2h1v1h-1zM1031.9 397.0h1v1h-1zM1031.3 398.9h1v1h-1zM1032.3 397.5h1v1h-1zM1031.6 397.1h1v1h-1zM1031.9 399.3h1v1h-1zM1031.0 399.1h1v1h-1zM1031.8 395.6h1v1h-1zM1031.7 395.4h1v1h-1zM1031.5 397.5h1v1h-1zM1032.4 392.7h1v1h-1zM1032.0 395.3h1v1h-1zM1032.4 395.3h1v1h-1zM1032.0 393.8h1v1h-1zM1032.1 393.1h1v1h-1zM1031.9 394.2h1v1h-1zM1032.1 395.1h1v1h-1zM1032.0 398.4h1v1h-1zM1031.8 392.3h1v1h-1zM1032.0 392.3h1v1h-1zM1031.6 391.6h1v1h-1zM1032.0 393.3h1v1h-1zM1031.8 393.5h1v1h-1zM1032.5 393.3h1v1h-1zM1032.2 390.8h1v1h-1zM1032.2 392.5h1v1h-1zM1032.9 389.1h1v1h-1zM1032.3 388.8h1v1h-1zM1032.3 392.9h1v1h-1zM1032.7 390.0h1v1h-1zM1032.5 390.7h1v1h-1zM1033.1 389.6h1v1h-1zM1033.2 389.2h1v1h-1zM1032.4 389.2h1v1h-1zM1032.6 388.9h1v1h-1zM1032.1 387.5h1v1h-1zM1031.8 387.5h1v1h-1zM1032.0 389.6h1v1h-1zM1032.1 386.7h1v1h-1zM1033.1 388.6h1v1h-1zM1033.3 388.1h1v1h-1zM1033.2 386.7h1v1h-1zM1031.9 385.5h1v1h-1zM1032.3 385.9h1v1h-1zM1032.9 384.9h1v1h-1zM1033.8 387.1h1v1h-1zM1033.8 387.0h1v1h-1zM1034.0 385.1h1v1h-1zM1035.0 386.1h1v1h-1zM1035.0 385.8h1v1h-1zM1034.2 385.8h1v1h-1zM1034.6 387.0h1v1h-1zM1036.5 385.0h1v1h-1zM1035.1 384.7h1v1h-1zM1036.7 384.0h1v1h-1zM1036.5 385.3h1v1h-1zM1037.5 386.8h1v1h-1zM1037.0 387.2h1v1h-1zM1037.5 385.4h1v1h-1zM1037.3 387.1h1v1h-1zM1038.2 385.0h1v1h-1zM1038.9 386.1h1v1h-1zM1039.1 384.6h1v1h-1zM1040.0 385.5h1v1h-1zM1039.8 386.9h1v1h-1zM1039.5 385.9h1v1h-1zM1039.4 386.7h1v1h-1zM1040.2 386.4h1v1h-1zM1040.5 386.5h1v1h-1zM1041.5 386.2h1v1h-1zM1041.6 388.2h1v1h-1zM1041.2 386.1h1v1h-1zM1041.7 386.4h1v1h-1zM1043.3 387.8h1v1h-1zM1043.0 385.9h1v1h-1zM1043.2 387.1h1v1h-1zM1042.6 386.8h1v1h-1zM1043.1 386.4h1v1h-1zM1043.1 387.5h1v1h-1zM1043.0 387.7h1v1h-1zM1044.2 386.6h1v1h-1zM1044.4 387.6h1v1h-1zM1044.2 390.3h1v1h-1zM1044.5 388.1h1v1h-1zM1044.1 388.3h1v1h-1zM1045.0 386.4h1v1h-1zM1045.4 387.7h1v1h-1zM1045.1 387.5h1v1h-1zM1045.5 390.4h1v1h-1zM1046.4 388.8h1v1h-1zM1046.9 390.1h1v1h-1zM1046.3 387.6h1v1h-1zM1046.1 388.4h1v1h-1zM1046.9 388.3h1v1h-1zM1047.5 388.2h1v1h-1zM1047.3 390.3h1v1h-1zM1047.6 389.6h1v1h-1zM1047.9 390.6h1v1h-1zM1048.5 390.4h1v1h-1zM1048.4 391.2h1v1h-1zM1048.8 391.2h1v1h-1zM1049.9 384.9h1v1h-1zM1049.2 390.6h1v1h-1zM1050.4 386.3h1v1h-1zM1050.1 391.9h1v1h-1zM1050.0 390.2h1v1h-1zM1050.9 387.8h1v1h-1zM1051.4 390.8h1v1h-1zM1051.2 388.5h1v1h-1zM1052.2 390.2h1v1h-1zM1052.0 384.9h1v1h-1zM1052.8 387.8h1v1h-1zM1052.8 390.1h1v1h-1zM1052.7 391.7h1v1h-1zM1053.2 389.6h1v1h-1zM1052.9 388.5h1v1h-1zM1053.6 388.2h1v1h-1zM1053.3 391.0h1v1h-1zM1053.8 389.9h1v1h-1zM1053.9 389.3h1v1h-1zM1054.6 388.6h1v1h-1zM1054.7 388.0h1v1h-1zM1054.6 386.5h1v1h-1zM1055.5 389.5h1v1h-1zM1055.8 387.3h1v1h-1zM1055.2 388.6h1v1h-1zM1056.3 388.0h1v1h-1zM1056.3 388.3h1v1h-1zM1056.3 387.8h1v1h-1zM1057.1 384.6h1v1h-1zM1057.4 386.3h1v1h-1zM1056.8 386.2h1v1h-1zM1057.6 386.9h1v1h-1zM1057.5 387.4h1v1h-1zM1057.8 385.8h1v1h-1zM1058.0 387.1h1v1h-1zM1059.2 385.5h1v1h-1zM1059.1 385.7h1v1h-1zM1059.2 383.9h1v1h-1zM1059.2 385.8h1v1h-1zM1059.1 386.3h1v1h-1zM1059.4 382.3h1v1h-1zM1060.0 384.5h1v1h-1zM1060.1 385.4h1v1h-1zM1060.0 383.3h1v1h-1zM1061.3 383.5h1v1h-1zM1061.9 384.4h1v1h-1zM1061.2 382.9h1v1h-1zM1060.8 384.9h1v1h-1zM1061.8 383.3h1v1h-1zM1062.3 382.5h1v1h-1zM606.4 412.0h1v1h-1zM606.4 412.7h1v1h-1zM607.2 411.9h1v1h-1zM606.8 411.1h1v1h-1zM607.8 414.4h1v1h-1zM607.9 413.1h1v1h-1zM607.6 412.7h1v1h-1zM608.8 411.8h1v1h-1zM608.7 412.0h1v1h-1zM609.3 414.0h1v1h-1zM609.4 413.7h1v1h-1zM609.3 412.8h1v1h-1zM609.7 412.4h1v1h-1zM609.6 412.9h1v1h-1zM610.2 414.9h1v1h-1zM609.9 415.1h1v1h-1zM609.9 415.5h1v1h-1zM610.2 416.8h1v1h-1zM611.5 413.9h1v1h-1zM611.2 413.6h1v1h-1zM611.3 415.7h1v1h-1zM611.4 416.5h1v1h-1zM612.3 416.7h1v1h-1zM612.2 413.7h1v1h-1zM612.6 417.6h1v1h-1zM612.2 417.0h1v1h-1zM612.9 415.5h1v1h-1zM612.7 417.6h1v1h-1zM613.1 414.7h1v1h-1zM613.2 416.1h1v1h-1zM613.5 416.0h1v1h-1zM613.6 419.9h1v1h-1zM613.9 418.3h1v1h-1zM614.3 418.0h1v1h-1zM613.9 418.0h1v1h-1zM614.2 419.3h1v1h-1zM615.0 418.5h1v1h-1zM614.8 417.6h1v1h-1zM614.9 416.8h1v1h-1zM615.8 419.5h1v1h-1zM616.0 420.7h1v1h-1zM616.1 421.0h1v1h-1zM615.9 419.1h1v1h-1zM615.8 423.2h1v1h-1zM615.9 419.9h1v1h-1zM615.4 421.3h1v1h-1zM616.6 420.3h1v1h-1zM615.6 420.9h1v1h-1zM616.4 421.9h1v1h-1zM616.3 421.0h1v1h-1zM616.7 423.4h1v1h-1zM616.7 421.9h1v1h-1zM616.6 422.9h1v1h-1zM617.2 424.1h1v1h-1zM616.8 425.0h1v1h-1zM617.5 422.9h1v1h-1zM616.6 424.7h1v1h-1zM616.4 427.1h1v1h-1zM617.0 422.9h1v1h-1zM617.5 426.0h1v1h-1zM616.2 427.1h1v1h-1zM617.6 425.6h1v1h-1zM617.8 426.3h1v1h-1zM617.2 425.9h1v1h-1zM617.1 426.2h1v1h-1zM617.6 425.4h1v1h-1zM617.3 427.6h1v1h-1zM618.3 427.9h1v1h-1zM618.2 429.9h1v1h-1zM618.4 426.6h1v1h-1zM618.2 429.3h1v1h-1zM618.3 428.8h1v1h-1zM618.0 431.6h1v1h-1zM618.9 430.8h1v1h-1zM618.7 429.2h1v1h-1zM618.9 432.6h1v1h-1zM618.6 430.0h1v1h-1zM618.5 427.5h1v1h-1zM619.0 431.5h1v1h-1zM617.9 430.0h1v1h-1zM619.9 430.8h1v1h-1zM618.7 429.7h1v1h-1zM620.1 428.7h1v1h-1zM619.3 431.6h1v1h-1zM618.6 433.2h1v1h-1zM619.3 430.0h1v1h-1zM619.6 427.1h1v1h-1zM620.0 428.2h1v1h-1zM619.9 428.6h1v1h-1zM620.8 427.8h1v1h-1zM620.5 424.8h1v1h-1zM620.1 427.1h1v1h-1zM621.2 426.8h1v1h-1zM620.9 425.8h1v1h-1zM620.9 425.9h1v1h-1zM621.4 426.4h1v1h-1zM621.6 427.9h1v1h-1zM621.3 426.7h1v1h-1zM621.3 425.4h1v1h-1zM621.4 424.5h1v1h-1zM621.8 422.8h1v1h-1zM621.7 424.6h1v1h-1zM621.5 423.6h1v1h-1zM621.7 425.0h1v1h-1zM622.3 423.6h1v1h-1zM622.1 422.9h1v1h-1zM621.2 424.3h1v1h-1zM622.3 424.0h1v1h-1zM622.1 423.6h1v1h-1zM622.8 421.6h1v1h-1zM622.5 421.2h1v1h-1zM623.5 422.9h1v1h-1zM623.0 421.9h1v1h-1zM623.3 420.0h1v1h-1zM623.1 419.5h1v1h-1zM623.7 421.8h1v1h-1zM624.7 418.2h1v1h-1zM623.6 420.8h1v1h-1zM623.9 419.0h1v1h-1zM624.4 419.5h1v1h-1zM623.6 419.9h1v1h-1zM624.4 419.9h1v1h-1zM624.7 419.1h1v1h-1zM624.5 417.4h1v1h-1zM624.7 419.2h1v1h-1zM625.3 420.3h1v1h-1zM624.5 419.0h1v1h-1zM625.5 419.1h1v1h-1zM625.0 421.4h1v1h-1zM625.5 422.4h1v1h-1zM625.7 423.7h1v1h-1zM625.8 421.0h1v1h-1zM625.5 420.0h1v1h-1zM626.3 420.5h1v1h-1zM626.0 422.4h1v1h-1zM627.3 420.9h1v1h-1zM626.6 421.8h1v1h-1zM627.2 418.3h1v1h-1zM626.9 423.7h1v1h-1zM627.1 423.1h1v1h-1zM627.3 423.7h1v1h-1zM628.1 422.5h1v1h-1zM627.5 424.7h1v1h-1zM628.1 422.3h1v1h-1zM628.1 424.5h1v1h-1zM628.6 422.9h1v1h-1zM628.4 427.1h1v1h-1zM628.5 425.2h1v1h-1zM628.1 426.4h1v1h-1zM627.8 424.1h1v1h-1zM629.9 424.7h1v1h-1zM629.2 425.4h1v1h-1zM628.7 429.2h1v1h-1zM629.3 427.4h1v1h-1zM629.1 427.0h1v1h-1zM629.9 426.3h1v1h-1zM630.0 425.8h1v1h-1zM629.9 429.8h1v1h-1zM630.0 427.5h1v1h-1zM630.7 428.5h1v1h-1zM630.7 428.3h1v1h-1zM630.7 426.2h1v1h-1zM630.8 425.5h1v1h-1zM631.1 428.6h1v1h-1zM631.2 427.6h1v1h-1zM630.7 424.8h1v1h-1zM631.4 427.7h1v1h-1zM631.4 430.0h1v1h-1zM632.2 425.1h1v1h-1zM631.3 424.6h1v1h-1zM633.1 425.3h1v1h-1zM632.3 425.4h1v1h-1zM632.1 424.3h1v1h-1zM632.4 424.5h1v1h-1zM632.3 424.7h1v1h-1zM632.7 426.4h1v1h-1zM632.5 424.2h1v1h-1zM633.7 423.7h1v1h-1zM633.0 423.2h1v1h-1zM633.6 422.2h1v1h-1zM633.7 420.5h1v1h-1zM633.0 422.3h1v1h-1zM633.4 423.4h1v1h-1zM633.4 420.7h1v1h-1zM634.0 421.6h1v1h-1zM634.6 419.5h1v1h-1zM634.2 420.3h1v1h-1zM634.5 422.8h1v1h-1zM634.6 419.5h1v1h-1zM634.5 421.6h1v1h-1zM634.7 421.0h1v1h-1zM634.9 419.0h1v1h-1zM634.9 420.9h1v1h-1zM634.3 418.7h1v1h-1zM635.4 420.1h1v1h-1zM635.4 419.2h1v1h-1zM635.0 420.1h1v1h-1zM635.9 418.4h1v1h-1zM635.7 417.7h1v1h-1zM635.4 416.9h1v1h-1zM636.1 416.4h1v1h-1zM635.8 416.7h1v1h-1zM636.0 417.3h1v1h-1zM637.1 413.6h1v1h-1zM636.0 415.7h1v1h-1zM637.9 415.5h1v1h-1zM637.3 417.7h1v1h-1zM637.5 418.3h1v1h-1zM637.6 415.3h1v1h-1zM637.9 414.9h1v1h-1zM639.0 416.7h1v1h-1zM638.4 415.7h1v1h-1zM638.5 417.3h1v1h-1zM638.7 417.8h1v1h-1zM639.8 418.0h1v1h-1zM640.0 420.4h1v1h-1zM639.6 417.4h1v1h-1zM640.4 417.7h1v1h-1zM640.9 417.4h1v1h-1zM640.6 419.4h1v1h-1zM641.2 417.7h1v1h-1zM641.6 419.0h1v1h-1zM641.0 419.9h1v1h-1zM641.1 416.9h1v1h-1zM641.7 417.1h1v1h-1zM643.6 419.0h1v1h-1zM642.8 418.3h1v1h-1zM642.8 419.7h1v1h-1zM643.8 418.2h1v1h-1zM644.0 418.2h1v1h-1zM643.0 418.8h1v1h-1zM644.6 420.4h1v1h-1zM644.1 419.5h1v1h-1zM645.1 417.9h1v1h-1zM644.9 420.0h1v1h-1zM646.0 417.5h1v1h-1zM646.2 419.3h1v1h-1zM646.7 424.0h1v1h-1zM646.7 417.7h1v1h-1zM646.7 418.2h1v1h-1zM647.7 417.2h1v1h-1zM646.9 416.6h1v1h-1zM647.7 417.8h1v1h-1zM648.2 418.6h1v1h-1zM647.9 417.7h1v1h-1zM648.5 417.9h1v1h-1zM648.6 417.4h1v1h-1zM650.1 416.6h1v1h-1zM649.9 417.8h1v1h-1zM649.8 419.1h1v1h-1zM650.4 418.1h1v1h-1zM650.7 416.2h1v1h-1zM650.2 417.2h1v1h-1zM651.1 417.5h1v1h-1zM651.8 416.7h1v1h-1zM651.5 415.3h1v1h-1zM651.9 418.5h1v1h-1zM652.2 416.3h1v1h-1zM651.5 417.9h1v1h-1zM652.6 415.6h1v1h-1zM652.7 415.6h1v1h-1zM652.8 415.9h1v1h-1zM653.4 415.0h1v1h-1zM654.0 415.6h1v1h-1zM655.1 414.6h1v1h-1zM654.8 416.5h1v1h-1zM653.3 415.6h1v1h-1zM655.1 415.3h1v1h-1zM654.7 413.7h1v1h-1zM655.5 414.5h1v1h-1zM655.7 415.3h1v1h-1zM656.5 415.8h1v1h-1zM655.8 414.1h1v1h-1zM656.1 412.0h1v1h-1zM656.6 414.9h1v1h-1zM657.0 414.7h1v1h-1zM657.4 417.2h1v1h-1zM657.0 417.6h1v1h-1zM658.0 416.9h1v1h-1zM657.9 416.5h1v1h-1zM659.1 415.6h1v1h-1zM658.5 415.4h1v1h-1zM659.0 415.8h1v1h-1zM659.1 417.5h1v1h-1zM659.1 416.6h1v1h-1zM659.9 417.8h1v1h-1zM660.3 418.4h1v1h-1zM660.3 417.4h1v1h-1zM661.5 415.3h1v1h-1zM661.5 417.7h1v1h-1zM661.7 413.2h1v1h-1zM661.0 417.9h1v1h-1zM661.4 418.8h1v1h-1zM662.0 417.3h1v1h-1zM662.4 417.9h1v1h-1zM661.9 416.7h1v1h-1zM663.3 417.4h1v1h-1zM663.1 419.3h1v1h-1zM663.4 418.3h1v1h-1zM663.9 419.9h1v1h-1zM663.1 419.0h1v1h-1zM664.3 418.9h1v1h-1zM664.0 418.0h1v1h-1zM665.2 419.4h1v1h-1zM664.9 419.1h1v1h-1zM665.7 418.7h1v1h-1zM665.3 417.2h1v1h-1zM665.3 418.2h1v1h-1zM665.3 420.4h1v1h-1zM666.8 421.8h1v1h-1zM666.7 420.3h1v1h-1zM667.3 420.0h1v1h-1zM667.5 421.5h1v1h-1zM667.2 421.3h1v1h-1zM668.1 421.4h1v1h-1zM668.4 420.0h1v1h-1zM668.4 420.2h1v1h-1zM668.2 421.4h1v1h-1zM669.1 424.4h1v1h-1zM669.2 421.0h1v1h-1zM668.8 420.4h1v1h-1zM669.3 423.2h1v1h-1zM669.6 422.8h1v1h-1zM669.8 421.9h1v1h-1zM670.5 422.1h1v1h-1zM670.4 422.8h1v1h-1zM671.3 421.0h1v1h-1zM670.9 418.0h1v1h-1zM671.2 421.4h1v1h-1zM671.6 422.0h1v1h-1zM672.3 421.5h1v1h-1zM672.2 421.4h1v1h-1zM672.5 422.6h1v1h-1zM674.2 423.6h1v1h-1zM673.1 422.3h1v1h-1zM673.4 424.8h1v1h-1zM673.3 421.8h1v1h-1zM674.4 421.8h1v1h-1zM674.6 422.3h1v1h-1zM674.6 423.4h1v1h-1zM674.8 421.9h1v1h-1zM675.4 422.7h1v1h-1zM675.4 421.6h1v1h-1zM675.9 423.6h1v1h-1zM675.6 424.9h1v1h-1zM676.8 422.4h1v1h-1zM677.0 423.1h1v1h-1zM676.0 422.3h1v1h-1zM677.1 423.0h1v1h-1zM678.3 422.9h1v1h-1zM678.8 423.2h1v1h-1zM677.9 422.7h1v1h-1zM677.7 421.5h1v1h-1zM678.7 421.9h1v1h-1zM678.7 420.4h1v1h-1zM680.1 424.8h1v1h-1zM678.6 422.0h1v1h-1zM679.8 421.1h1v1h-1zM680.2 420.7h1v1h-1zM681.1 420.6h1v1h-1zM681.1 420.2h1v1h-1zM681.0 418.7h1v1h-1zM680.7 419.6h1v1h-1zM680.6 421.9h1v1h-1zM680.8 423.1h1v1h-1zM681.6 420.6h1v1h-1zM681.8 418.9h1v1h-1zM681.9 417.8h1v1h-1zM681.3 419.1h1v1h-1zM681.8 419.7h1v1h-1zM682.2 418.6h1v1h-1zM682.3 416.7h1v1h-1zM682.5 416.9h1v1h-1zM683.0 417.8h1v1h-1zM682.6 418.2h1v1h-1zM682.4 417.2h1v1h-1zM682.6 416.4h1v1h-1zM683.2 416.8h1v1h-1zM682.9 417.4h1v1h-1zM683.2 412.9h1v1h-1zM683.4 416.6h1v1h-1zM683.4 415.0h1v1h-1zM683.4 416.0h1v1h-1zM683.8 415.4h1v1h-1zM684.3 413.9h1v1h-1zM685.0 415.2h1v1h-1zM685.3 416.1h1v1h-1zM685.6 414.1h1v1h-1zM685.8 415.0h1v1h-1zM685.7 413.9h1v1h-1zM686.0 413.2h1v1h-1zM686.3 413.1h1v1h-1zM686.1 416.0h1v1h-1zM687.0 413.5h1v1h-1zM687.6 413.0h1v1h-1zM687.3 413.6h1v1h-1zM688.3 414.8h1v1h-1zM689.2 412.7h1v1h-1zM689.2 412.6h1v1h-1zM689.5 419.8h1v1h-1zM688.6 412.1h1v1h-1zM689.1 413.3h1v1h-1zM689.6 413.5h1v1h-1zM689.1 411.8h1v1h-1zM689.9 412.3h1v1h-1zM690.6 414.1h1v1h-1zM690.6 412.9h1v1h-1zM690.3 412.1h1v1h-1zM691.4 413.1h1v1h-1zM691.6 413.7h1v1h-1zM692.4 414.6h1v1h-1zM692.5 412.7h1v1h-1zM692.0 412.7h1v1h-1zM692.6 411.8h1v1h-1zM692.7 411.3h1v1h-1zM693.7 414.2h1v1h-1zM693.2 412.9h1v1h-1zM693.9 412.1h1v1h-1zM694.5 413.1h1v1h-1zM694.7 412.2h1v1h-1zM693.9 409.7h1v1h-1zM695.0 411.9h1v1h-1zM694.6 412.1h1v1h-1zM695.9 408.7h1v1h-1zM695.9 412.2h1v1h-1zM696.4 413.7h1v1h-1zM696.4 410.6h1v1h-1zM697.2 411.7h1v1h-1zM696.5 413.4h1v1h-1zM697.5 410.6h1v1h-1zM698.7 410.5h1v1h-1zM697.7 413.8h1v1h-1zM698.8 410.4h1v1h-1zM698.1 413.3h1v1h-1zM698.2 411.6h1v1h-1zM699.7 412.4h1v1h-1zM699.7 411.7h1v1h-1zM699.9 412.7h1v1h-1zM700.0 411.1h1v1h-1zM699.6 411.3h1v1h-1zM700.4 411.9h1v1h-1zM701.0 411.7h1v1h-1zM702.0 411.5h1v1h-1zM701.6 412.8h1v1h-1zM701.1 412.0h1v1h-1zM702.5 414.4h1v1h-1zM701.7 413.1h1v1h-1zM702.5 414.1h1v1h-1zM702.7 413.3h1v1h-1zM703.0 413.9h1v1h-1zM703.0 413.5h1v1h-1zM703.7 412.3h1v1h-1zM704.5 412.9h1v1h-1zM704.7 413.4h1v1h-1zM704.8 415.6h1v1h-1zM704.9 413.8h1v1h-1zM705.1 414.0h1v1h-1zM705.9 413.4h1v1h-1zM705.7 413.9h1v1h-1zM706.0 414.0h1v1h-1zM706.2 416.2h1v1h-1zM707.2 413.8h1v1h-1zM707.2 416.3h1v1h-1zM707.6 415.3h1v1h-1zM706.7 415.4h1v1h-1zM707.8 413.2h1v1h-1zM707.8 414.5h1v1h-1zM707.8 415.1h1v1h-1zM708.7 415.0h1v1h-1zM709.5 413.1h1v1h-1zM709.2 415.8h1v1h-1zM709.4 416.3h1v1h-1zM710.0 417.7h1v1h-1zM710.2 418.5h1v1h-1zM709.8 416.7h1v1h-1zM709.4 416.8h1v1h-1zM711.1 419.0h1v1h-1zM710.5 416.5h1v1h-1zM711.0 417.9h1v1h-1zM711.2 416.7h1v1h-1zM711.0 416.6h1v1h-1zM712.2 416.6h1v1h-1zM712.2 419.5h1v1h-1zM712.4 416.5h1v1h-1zM712.5 419.9h1v1h-1zM712.6 415.2h1v1h-1zM713.0 419.6h1v1h-1zM713.5 418.2h1v1h-1zM713.7 420.2h1v1h-1zM714.1 419.7h1v1h-1zM713.7 420.8h1v1h-1zM714.4 420.7h1v1h-1zM715.3 417.5h1v1h-1zM714.5 419.4h1v1h-1zM715.0 422.1h1v1h-1zM716.1 420.9h1v1h-1zM715.5 421.8h1v1h-1zM716.0 420.1h1v1h-1zM716.2 422.6h1v1h-1zM715.5 421.3h1v1h-1zM717.6 420.9h1v1h-1zM716.8 419.6h1v1h-1zM716.6 421.5h1v1h-1zM717.2 423.8h1v1h-1zM717.3 420.3h1v1h-1zM717.2 421.3h1v1h-1zM717.0 425.3h1v1h-1zM718.0 422.6h1v1h-1zM718.5 422.4h1v1h-1zM718.9 420.8h1v1h-1zM719.2 422.6h1v1h-1zM719.6 422.9h1v1h-1zM719.4 423.6h1v1h-1zM720.2 425.0h1v1h-1zM720.4 423.5h1v1h-1zM720.0 423.2h1v1h-1zM720.9 425.3h1v1h-1zM720.0 423.7h1v1h-1zM721.0 425.4h1v1h-1zM720.8 424.7h1v1h-1zM721.1 425.2h1v1h-1zM721.2 425.9h1v1h-1zM722.1 426.9h1v1h-1zM721.7 427.0h1v1h-1zM721.8 425.2h1v1h-1zM722.3 428.9h1v1h-1zM722.2 426.8h1v1h-1zM723.2 425.4h1v1h-1zM723.7 426.7h1v1h-1zM723.4 426.6h1v1h-1zM723.6 425.3h1v1h-1zM724.1 427.9h1v1h-1zM723.6 426.5h1v1h-1zM723.6 426.6h1v1h-1zM724.2 427.6h1v1h-1zM725.0 427.8h1v1h-1zM724.9 427.0h1v1h-1zM725.6 423.7h1v1h-1zM725.0 426.1h1v1h-1zM725.1 425.5h1v1h-1zM724.8 425.6h1v1h-1zM725.8 425.7h1v1h-1zM725.9 425.2h1v1h-1zM726.1 424.4h1v1h-1zM726.5 423.0h1v1h-1zM726.4 423.7h1v1h-1zM726.8 423.2h1v1h-1zM726.7 423.3h1v1h-1zM726.8 422.9h1v1h-1zM727.0 422.5h1v1h-1zM727.5 425.1h1v1h-1zM727.3 421.3h1v1h-1zM728.2 418.7h1v1h-1zM727.5 421.5h1v1h-1zM727.7 421.8h1v1h-1zM728.2 421.9h1v1h-1zM728.9 420.2h1v1h-1zM728.1 421.2h1v1h-1zM728.3 421.4h1v1h-1zM729.4 419.9h1v1h-1zM729.1 420.1h1v1h-1zM729.2 421.3h1v1h-1zM729.2 423.8h1v1h-1zM729.3 421.1h1v1h-1zM730.2 420.9h1v1h-1zM729.6 421.0h1v1h-1zM730.2 419.7h1v1h-1zM730.2 419.5h1v1h-1zM730.6 416.4h1v1h-1zM731.0 418.2h1v1h-1zM731.5 419.1h1v1h-1zM731.6 420.4h1v1h-1zM731.4 418.5h1v1h-1zM731.8 418.7h1v1h-1zM732.5 415.1h1v1h-1zM732.3 420.8h1v1h-1zM733.3 422.5h1v1h-1zM732.8 420.2h1v1h-1zM732.1 422.0h1v1h-1zM733.2 420.5h1v1h-1zM733.6 418.9h1v1h-1zM734.0 421.8h1v1h-1zM733.9 420.8h1v1h-1zM734.7 423.7h1v1h-1zM734.3 424.5h1v1h-1zM735.1 422.7h1v1h-1zM735.6 423.1h1v1h-1zM735.4 421.2h1v1h-1zM736.1 425.5h1v1h-1zM735.8 421.8h1v1h-1zM736.2 424.8h1v1h-1zM736.6 424.4h1v1h-1zM736.2 423.6h1v1h-1zM736.6 421.7h1v1h-1zM737.5 423.9h1v1h-1zM738.0 423.8h1v1h-1zM737.2 424.9h1v1h-1zM738.2 423.3h1v1h-1zM738.0 422.9h1v1h-1zM737.8 423.4h1v1h-1zM738.2 425.1h1v1h-1zM738.7 422.5h1v1h-1zM739.0 424.5h1v1h-1zM739.1 423.2h1v1h-1zM739.9 427.7h1v1h-1zM739.4 424.7h1v1h-1zM739.5 425.2h1v1h-1zM739.8 424.3h1v1h-1zM740.4 425.5h1v1h-1zM740.1 425.5h1v1h-1zM741.4 427.3h1v1h-1zM740.9 425.9h1v1h-1zM741.4 425.2h1v1h-1zM742.2 427.9h1v1h-1zM741.5 424.2h1v1h-1zM741.6 429.7h1v1h-1zM742.8 428.1h1v1h-1zM743.3 429.2h1v1h-1zM742.7 428.4h1v1h-1zM743.2 429.1h1v1h-1zM743.9 427.6h1v1h-1zM743.1 429.0h1v1h-1zM743.8 428.8h1v1h-1zM744.2 428.1h1v1h-1zM743.9 428.6h1v1h-1zM745.1 432.1h1v1h-1zM745.3 429.8h1v1h-1zM745.3 429.3h1v1h-1zM745.9 430.1h1v1h-1zM745.7 429.1h1v1h-1zM745.3 432.2h1v1h-1zM746.0 429.5h1v1h-1zM746.1 430.0h1v1h-1zM747.1 430.9h1v1h-1zM746.6 431.2h1v1h-1zM747.5 429.0h1v1h-1zM747.4 430.1h1v1h-1zM748.0 431.0h1v1h-1zM747.6 432.6h1v1h-1zM748.4 430.3h1v1h-1zM749.1 431.0h1v1h-1zM749.2 431.2h1v1h-1zM749.7 432.2h1v1h-1zM749.3 431.4h1v1h-1zM749.0 431.9h1v1h-1zM750.0 433.6h1v1h-1zM750.0 434.5h1v1h-1zM750.1 431.6h1v1h-1zM750.4 432.9h1v1h-1zM750.8 435.0h1v1h-1zM750.6 434.9h1v1h-1zM752.0 431.9h1v1h-1zM751.3 433.8h1v1h-1zM751.6 435.3h1v1h-1zM751.9 431.0h1v1h-1zM751.3 432.3h1v1h-1zM752.1 435.1h1v1h-1zM752.4 432.6h1v1h-1zM753.3 431.5h1v1h-1zM754.0 431.8h1v1h-1zM753.6 432.3h1v1h-1zM754.3 432.6h1v1h-1zM754.1 432.6h1v1h-1zM755.1 432.6h1v1h-1zM755.0 433.4h1v1h-1zM755.7 431.9h1v1h-1zM755.0 431.7h1v1h-1zM755.4 434.7h1v1h-1zM756.3 431.3h1v1h-1zM756.5 429.4h1v1h-1zM755.7 431.1h1v1h-1zM756.7 431.1h1v1h-1zM756.1 431.6h1v1h-1zM756.9 431.4h1v1h-1zM757.6 429.2h1v1h-1zM757.9 430.2h1v1h-1zM756.7 430.8h1v1h-1zM758.3 432.1h1v1h-1zM758.7 429.9h1v1h-1zM758.6 431.9h1v1h-1zM758.7 428.1h1v1h-1zM759.3 430.0h1v1h-1zM759.5 431.1h1v1h-1zM759.7 429.4h1v1h-1zM759.9 431.4h1v1h-1zM760.1 430.0h1v1h-1zM760.6 431.4h1v1h-1zM760.7 433.1h1v1h-1zM760.0 431.7h1v1h-1zM760.7 433.7h1v1h-1zM761.5 432.8h1v1h-1zM761.3 431.4h1v1h-1zM761.0 430.4h1v1h-1zM760.8 431.4h1v1h-1zM761.8 433.7h1v1h-1zM762.9 434.5h1v1h-1zM761.8 431.4h1v1h-1zM762.5 432.5h1v1h-1zM763.3 435.0h1v1h-1zM763.3 435.4h1v1h-1zM763.0 436.9h1v1h-1zM763.3 432.8h1v1h-1zM763.1 435.4h1v1h-1zM763.8 433.1h1v1h-1zM763.8 434.8h1v1h-1zM763.8 430.5h1v1h-1zM764.9 435.9h1v1h-1zM764.5 434.1h1v1h-1zM765.1 435.8h1v1h-1zM764.5 437.6h1v1h-1zM765.1 437.2h1v1h-1zM765.2 435.4h1v1h-1zM765.5 437.2h1v1h-1zM766.2 437.7h1v1h-1zM766.0 439.1h1v1h-1zM767.1 439.9h1v1h-1zM766.8 438.9h1v1h-1zM765.8 437.9h1v1h-1zM767.3 438.1h1v1h-1zM767.5 440.3h1v1h-1zM767.7 438.2h1v1h-1zM767.3 438.3h1v1h-1zM767.5 439.2h1v1h-1zM767.1 439.1h1v1h-1zM767.5 438.7h1v1h-1zM767.9 437.8h1v1h-1zM768.1 439.8h1v1h-1zM768.9 440.9h1v1h-1zM769.1 439.6h1v1h-1zM768.9 440.1h1v1h-1zM770.2 440.4h1v1h-1zM771.0 441.9h1v1h-1zM770.3 440.4h1v1h-1zM770.4 441.8h1v1h-1zM770.7 440.5h1v1h-1zM771.1 439.3h1v1h-1zM771.5 440.3h1v1h-1zM771.2 440.8h1v1h-1zM771.7 442.4h1v1h-1zM772.5 440.7h1v1h-1zM772.4 441.2h1v1h-1zM772.9 441.4h1v1h-1zM773.3 440.7h1v1h-1zM774.0 440.6h1v1h-1zM773.7 440.5h1v1h-1zM774.5 441.0h1v1h-1zM774.8 442.2h1v1h-1zM774.5 439.2h1v1h-1zM775.4 441.5h1v1h-1zM775.8 442.2h1v1h-1zM775.7 438.6h1v1h-1zM775.6 442.2h1v1h-1zM775.8 440.1h1v1h-1zM776.9 442.1h1v1h-1zM776.8 439.9h1v1h-1zM777.2 441.2h1v1h-1zM777.7 440.8h1v1h-1zM777.7 430.1h1v1h-1zM778.0 442.6h1v1h-1zM778.9 441.7h1v1h-1zM779.2 442.0h1v1h-1zM778.6 443.3h1v1h-1zM778.2 441.8h1v1h-1zM778.4 442.1h1v1h-1zM779.1 439.1h1v1h-1zM780.1 439.2h1v1h-1zM779.2 440.3h1v1h-1zM779.3 440.0h1v1h-1zM779.1 442.1h1v1h-1zM779.0 443.8h1v1h-1zM779.4 438.0h1v1h-1zM780.0 437.2h1v1h-1zM779.1 437.8h1v1h-1zM779.3 438.4h1v1h-1zM779.8 436.9h1v1h-1zM779.5 438.8h1v1h-1zM780.8 435.8h1v1h-1zM779.8 437.7h1v1h-1zM780.1 436.6h1v1h-1zM780.4 436.3h1v1h-1zM779.1 434.5h1v1h-1zM780.3 434.1h1v1h-1zM781.1 437.1h1v1h-1zM780.5 434.5h1v1h-1zM780.3 434.9h1v1h-1zM779.6 435.5h1v1h-1zM781.7 434.1h1v1h-1zM780.9 433.1h1v1h-1zM780.4 433.1h1v1h-1zM780.9 432.6h1v1h-1zM780.5 433.3h1v1h-1zM781.2 433.1h1v1h-1zM780.7 432.4h1v1h-1zM781.7 431.7h1v1h-1zM780.9 433.2h1v1h-1zM781.2 432.7h1v1h-1zM781.4 432.5h1v1h-1zM782.8 432.5h1v1h-1zM781.2 430.4h1v1h-1zM781.9 428.4h1v1h-1zM781.6 430.4h1v1h-1zM782.3 428.8h1v1h-1zM781.9 429.2h1v1h-1zM781.8 432.9h1v1h-1zM781.9 428.9h1v1h-1zM782.3 427.9h1v1h-1zM782.3 427.5h1v1h-1zM782.7 424.8h1v1h-1zM782.3 426.7h1v1h-1zM783.6 427.9h1v1h-1zM781.9 428.8h1v1h-1zM782.7 427.1h1v1h-1zM782.4 427.6h1v1h-1zM783.4 428.1h1v1h-1zM783.0 426.6h1v1h-1zM783.0 427.3h1v1h-1zM783.3 426.5h1v1h-1zM783.0 424.6h1v1h-1zM783.6 425.7h1v1h-1zM783.8 424.9h1v1h-1zM784.0 424.5h1v1h-1zM784.3 424.9h1v1h-1zM784.9 425.8h1v1h-1zM785.7 423.9h1v1h-1zM785.0 424.6h1v1h-1zM785.4 424.6h1v1h-1zM786.1 424.9h1v1h-1zM785.8 423.2h1v1h-1zM786.2 426.3h1v1h-1zM786.5 427.4h1v1h-1zM786.9 426.0h1v1h-1zM787.5 425.4h1v1h-1zM788.0 427.4h1v1h-1zM788.2 426.8h1v1h-1zM788.0 428.1h1v1h-1zM788.8 425.0h1v1h-1zM789.2 427.3h1v1h-1zM789.7 426.8h1v1h-1zM789.8 425.4h1v1h-1zM790.5 426.8h1v1h-1zM790.5 424.6h1v1h-1zM790.5 427.1h1v1h-1zM791.8 427.1h1v1h-1zM790.8 426.4h1v1h-1zM790.8 425.8h1v1h-1zM792.3 427.4h1v1h-1zM792.2 425.4h1v1h-1zM792.6 425.9h1v1h-1zM792.3 426.1h1v1h-1zM792.8 424.9h1v1h-1zM792.7 426.9h1v1h-1zM794.3 427.3h1v1h-1zM794.2 429.0h1v1h-1zM794.1 425.5h1v1h-1zM794.5 427.2h1v1h-1zM795.0 428.8h1v1h-1zM795.2 427.7h1v1h-1zM794.8 427.4h1v1h-1zM796.0 427.9h1v1h-1zM795.9 428.1h1v1h-1zM795.9 428.4h1v1h-1zM796.7 429.7h1v1h-1zM796.6 428.6h1v1h-1zM797.5 429.2h1v1h-1zM796.4 428.7h1v1h-1zM797.4 426.2h1v1h-1zM798.1 427.7h1v1h-1zM798.4 427.9h1v1h-1zM798.7 429.1h1v1h-1zM799.0 428.6h1v1h-1zM799.6 428.9h1v1h-1zM799.6 429.9h1v1h-1zM800.0 429.0h1v1h-1zM799.8 429.8h1v1h-1zM800.8 430.5h1v1h-1zM800.3 431.7h1v1h-1zM801.2 429.6h1v1h-1zM801.4 429.4h1v1h-1zM801.1 428.0h1v1h-1zM801.0 424.2h1v1h-1zM801.6 429.3h1v1h-1zM802.2 430.2h1v1h-1zM802.4 428.5h1v1h-1zM802.0 429.4h1v1h-1zM802.5 426.3h1v1h-1zM802.7 428.0h1v1h-1zM801.9 425.9h1v1h-1zM801.9 425.8h1v1h-1zM803.1 426.4h1v1h-1zM803.0 428.1h1v1h-1zM803.2 426.1h1v1h-1zM802.1 426.1h1v1h-1zM803.7 424.8h1v1h-1zM804.1 424.9h1v1h-1zM803.3 425.3h1v1h-1zM803.5 424.7h1v1h-1zM803.5 425.8h1v1h-1zM804.2 423.1h1v1h-1zM802.9 423.6h1v1h-1zM804.0 423.8h1v1h-1zM804.5 424.0h1v1h-1zM804.7 425.3h1v1h-1zM805.0 425.3h1v1h-1zM804.1 420.4h1v1h-1zM804.1 423.1h1v1h-1zM805.0 422.0h1v1h-1zM805.1 421.2h1v1h-1zM805.1 422.1h1v1h-1zM806.0 422.7h1v1h-1zM805.8 421.2h1v1h-1zM805.6 420.6h1v1h-1zM805.4 420.4h1v1h-1zM805.3 420.9h1v1h-1zM806.2 421.3h1v1h-1zM806.7 420.5h1v1h-1zM806.4 419.9h1v1h-1zM806.8 418.5h1v1h-1zM806.6 419.4h1v1h-1zM807.2 417.4h1v1h-1zM807.0 419.2h1v1h-1zM806.5 418.3h1v1h-1zM808.1 415.0h1v1h-1zM807.7 418.1h1v1h-1zM808.2 419.4h1v1h-1zM809.0 421.2h1v1h-1zM807.4 416.7h1v1h-1zM807.9 417.9h1v1h-1zM808.4 415.1h1v1h-1zM807.6 417.1h1v1h-1zM808.3 417.5h1v1h-1zM809.4 416.3h1v1h-1zM808.2 415.4h1v1h-1zM808.9 415.0h1v1h-1zM809.3 414.2h1v1h-1zM809.6 413.3h1v1h-1zM809.7 412.1h1v1h-1zM809.6 412.7h1v1h-1zM810.3 413.7h1v1h-1zM809.3 412.6h1v1h-1zM810.5 412.8h1v1h-1zM810.0 412.5h1v1h-1zM811.0 412.9h1v1h-1zM811.1 413.6h1v1h-1zM811.6 413.2h1v1h-1zM810.7 413.8h1v1h-1zM811.4 411.9h1v1h-1zM811.9 412.2h1v1h-1zM812.2 413.0h1v1h-1zM811.6 409.6h1v1h-1zM813.2 410.7h1v1h-1zM813.0 411.0h1v1h-1zM812.3 412.1h1v1h-1zM813.4 412.0h1v1h-1zM812.5 409.8h1v1h-1zM812.5 411.1h1v1h-1zM813.0 407.7h1v1h-1zM814.4 410.3h1v1h-1zM813.9 409.1h1v1h-1zM814.5 410.4h1v1h-1zM814.4 410.4h1v1h-1zM815.1 409.3h1v1h-1zM814.6 411.3h1v1h-1zM815.1 411.8h1v1h-1zM815.5 412.0h1v1h-1zM815.6 411.0h1v1h-1zM815.8 410.8h1v1h-1zM816.0 410.9h1v1h-1zM816.7 411.1h1v1h-1zM817.3 412.3h1v1h-1zM816.7 412.4h1v1h-1zM817.4 412.1h1v1h-1zM818.2 410.8h1v1h-1zM817.8 412.6h1v1h-1zM817.5 411.1h1v1h-1zM818.3 413.6h1v1h-1zM818.2 412.7h1v1h-1zM819.0 411.7h1v1h-1zM819.4 413.3h1v1h-1zM819.7 411.0h1v1h-1zM819.9 413.0h1v1h-1zM820.3 414.7h1v1h-1zM820.5 413.2h1v1h-1zM820.9 412.0h1v1h-1zM821.2 412.2h1v1h-1zM821.6 413.8h1v1h-1zM822.1 414.8h1v1h-1zM821.2 413.9h1v1h-1zM821.3 414.8h1v1h-1zM821.4 413.5h1v1h-1zM822.0 415.0h1v1h-1zM821.9 416.4h1v1h-1zM822.3 415.4h1v1h-1zM822.0 415.3h1v1h-1zM821.6 417.0h1v1h-1zM822.4 416.5h1v1h-1zM822.9 415.7h1v1h-1zM822.7 416.8h1v1h-1zM822.9 416.8h1v1h-1zM823.3 416.9h1v1h-1zM822.9 419.0h1v1h-1zM822.9 420.2h1v1h-1zM823.9 418.3h1v1h-1zM823.1 420.3h1v1h-1zM823.7 418.3h1v1h-1zM823.8 421.6h1v1h-1zM824.5 419.0h1v1h-1zM823.3 418.9h1v1h-1zM824.6 418.7h1v1h-1zM824.9 421.9h1v1h-1zM824.4 419.8h1v1h-1zM824.4 420.6h1v1h-1zM824.9 419.4h1v1h-1zM824.9 420.3h1v1h-1zM825.6 420.7h1v1h-1zM825.2 421.9h1v1h-1zM825.7 420.9h1v1h-1zM825.6 422.2h1v1h-1zM825.7 424.2h1v1h-1zM825.2 421.5h1v1h-1zM826.0 423.4h1v1h-1zM825.7 423.7h1v1h-1zM826.2 423.9h1v1h-1zM826.7 424.3h1v1h-1zM826.3 424.0h1v1h-1zM825.9 422.2h1v1h-1zM826.7 425.4h1v1h-1zM826.9 425.4h1v1h-1zM826.9 427.2h1v1h-1zM827.2 425.4h1v1h-1zM827.7 424.7h1v1h-1zM826.8 427.2h1v1h-1zM827.3 427.5h1v1h-1zM827.9 427.7h1v1h-1zM827.7 425.8h1v1h-1zM827.8 425.0h1v1h-1zM827.6 424.1h1v1h-1zM828.5 425.2h1v1h-1zM827.6 423.9h1v1h-1zM828.8 426.3h1v1h-1zM828.3 423.6h1v1h-1zM827.7 425.0h1v1h-1zM827.4 425.0h1v1h-1zM827.6 423.6h1v1h-1zM828.6 422.3h1v1h-1zM828.5 423.1h1v1h-1zM828.5 423.5h1v1h-1zM828.4 420.3h1v1h-1zM828.6 422.0h1v1h-1zM829.2 422.3h1v1h-1zM829.3 420.3h1v1h-1zM829.0 419.7h1v1h-1zM829.4 421.2h1v1h-1zM828.5 419.3h1v1h-1zM829.3 419.4h1v1h-1zM829.6 419.1h1v1h-1zM829.5 419.3h1v1h-1zM828.6 419.1h1v1h-1zM829.2 418.0h1v1h-1zM829.3 419.4h1v1h-1zM829.3 419.9h1v1h-1zM829.0 418.6h1v1h-1zM829.8 415.2h1v1h-1zM829.5 417.5h1v1h-1zM829.5 415.6h1v1h-1zM830.2 416.6h1v1h-1zM829.5 416.6h1v1h-1zM829.7 415.1h1v1h-1zM828.9 415.2h1v1h-1zM830.1 416.3h1v1h-1zM830.0 414.2h1v1h-1zM830.2 414.3h1v1h-1zM830.3 414.5h1v1h-1zM829.8 413.5h1v1h-1zM829.4 415.0h1v1h-1zM830.1 412.3h1v1h-1zM830.1 413.8h1v1h-1zM830.3 413.3h1v1h-1zM829.9 412.6h1v1h-1zM830.6 412.8h1v1h-1zM831.2 412.8h1v1h-1zM831.3 411.5h1v1h-1zM830.3 412.6h1v1h-1zM830.0 411.8h1v1h-1zM830.7 409.7h1v1h-1zM830.2 410.8h1v1h-1zM831.9 409.2h1v1h-1zM830.7 410.0h1v1h-1zM831.2 409.5h1v1h-1zM831.0 411.3h1v1h-1zM830.5 408.2h1v1h-1zM831.4 405.6h1v1h-1zM831.0 410.0h1v1h-1zM831.3 408.8h1v1h-1zM831.0 407.2h1v1h-1zM831.3 406.7h1v1h-1zM831.8 408.7h1v1h-1zM831.5 408.8h1v1h-1zM832.0 406.7h1v1h-1zM831.5 405.9h1v1h-1zM831.5 406.1h1v1h-1zM832.1 405.3h1v1h-1zM833.2 406.7h1v1h-1zM833.7 405.8h1v1h-1zM832.9 408.3h1v1h-1zM833.2 408.4h1v1h-1zM833.8 408.2h1v1h-1zM833.4 407.3h1v1h-1zM833.8 408.6h1v1h-1zM833.8 409.2h1v1h-1zM833.9 409.8h1v1h-1zM833.8 410.1h1v1h-1zM835.1 406.9h1v1h-1zM835.1 409.5h1v1h-1zM834.8 409.2h1v1h-1zM835.5 411.2h1v1h-1zM836.1 411.4h1v1h-1zM836.1 408.4h1v1h-1zM835.9 410.5h1v1h-1zM836.3 409.5h1v1h-1zM836.4 411.4h1v1h-1zM836.9 409.8h1v1h-1zM837.3 410.7h1v1h-1zM837.6 412.5h1v1h-1zM838.5 412.0h1v1h-1zM838.0 410.7h1v1h-1zM838.3 412.4h1v1h-1zM838.1 414.4h1v1h-1zM838.7 411.6h1v1h-1zM838.9 410.8h1v1h-1zM839.4 411.6h1v1h-1zM839.2 412.0h1v1h-1zM839.6 412.7h1v1h-1zM839.3 411.0h1v1h-1zM839.6 411.0h1v1h-1zM839.6 410.0h1v1h-1zM839.9 407.6h1v1h-1zM840.0 409.4h1v1h-1zM840.2 409.2h1v1h-1zM840.5 409.3h1v1h-1zM840.7 409.5h1v1h-1zM840.6 408.1h1v1h-1zM840.7 407.5h1v1h-1zM842.1 406.7h1v1h-1zM841.9 407.0h1v1h-1zM842.1 409.1h1v1h-1zM842.3 405.6h1v1h-1zM842.6 407.2h1v1h-1zM842.0 409.2h1v1h-1zM842.6 407.4h1v1h-1zM843.1 408.9h1v1h-1zM843.3 407.7h1v1h-1zM843.4 409.1h1v1h-1zM843.7 409.8h1v1h-1zM842.9 404.5h1v1h-1zM844.3 406.1h1v1h-1zM843.7 406.2h1v1h-1zM844.1 407.0h1v1h-1zM844.2 407.4h1v1h-1zM844.5 405.5h1v1h-1zM844.7 403.6h1v1h-1zM844.7 403.8h1v1h-1zM845.3 404.4h1v1h-1zM845.9 398.4h1v1h-1zM846.0 405.5h1v1h-1zM845.9 407.0h1v1h-1zM846.6 404.2h1v1h-1zM847.5 404.1h1v1h-1zM846.5 406.6h1v1h-1zM847.3 406.3h1v1h-1zM847.8 405.5h1v1h-1zM847.3 403.3h1v1h-1zM848.1 404.6h1v1h-1zM848.9 403.8h1v1h-1zM849.1 403.0h1v1h-1zM849.5 404.4h1v1h-1zM850.6 403.7h1v1h-1zM850.3 403.9h1v1h-1zM850.8 403.3h1v1h-1zM850.5 404.9h1v1h-1zM850.8 405.1h1v1h-1zM851.0 405.1h1v1h-1zM851.4 404.5h1v1h-1zM851.6 404.1h1v1h-1zM852.5 404.6h1v1h-1zM852.1 404.2h1v1h-1zM853.4 404.1h1v1h-1zM853.3 404.2h1v1h-1zM852.6 405.4h1v1h-1zM853.6 405.6h1v1h-1zM854.2 404.3h1v1h-1zM853.5 408.8h1v1h-1zM853.9 404.2h1v1h-1zM854.5 405.7h1v1h-1zM855.6 404.2h1v1h-1zM855.0 403.0h1v1h-1zM855.5 403.4h1v1h-1zM855.8 405.0h1v1h-1zM856.0 404.3h1v1h-1zM856.4 405.7h1v1h-1zM857.3 404.6h1v1h-1zM856.7 405.8h1v1h-1zM856.9 404.9h1v1h-1zM857.8 405.9h1v1h-1zM857.9 405.7h1v1h-1zM858.1 405.3h1v1h-1zM858.0 406.1h1v1h-1zM859.0 404.2h1v1h-1zM858.8 405.7h1v1h-1zM859.2 406.6h1v1h-1zM859.8 406.0h1v1h-1zM860.0 406.2h1v1h-1zM859.6 407.1h1v1h-1zM860.8 406.4h1v1h-1zM860.8 406.8h1v1h-1zM860.4 405.3h1v1h-1zM861.2 409.3h1v1h-1zM861.5 407.4h1v1h-1zM862.0 411.8h1v1h-1zM861.4 407.3h1v1h-1zM862.3 410.9h1v1h-1zM862.6 406.0h1v1h-1zM862.7 408.9h1v1h-1zM863.7 406.9h1v1h-1zM863.3 406.3h1v1h-1zM863.6 406.0h1v1h-1zM864.0 408.4h1v1h-1zM864.6 405.8h1v1h-1zM864.9 408.0h1v1h-1zM864.7 407.2h1v1h-1zM865.1 406.5h1v1h-1zM865.5 405.9h1v1h-1zM866.3 406.8h1v1h-1zM865.7 407.2h1v1h-1zM866.5 406.4h1v1h-1zM867.2 405.4h1v1h-1zM866.9 406.7h1v1h-1zM867.3 404.9h1v1h-1zM867.4 407.6h1v1h-1zM867.1 407.1h1v1h-1zM868.4 405.8h1v1h-1zM868.3 405.1h1v1h-1zM868.3 406.2h1v1h-1zM869.4 403.4h1v1h-1zM869.7 405.5h1v1h-1zM869.4 403.0h1v1h-1zM869.7 404.7h1v1h-1zM869.7 404.4h1v1h-1zM871.1 405.7h1v1h-1zM870.5 405.9h1v1h-1zM871.3 405.8h1v1h-1zM871.8 403.4h1v1h-1zM871.1 405.3h1v1h-1zM871.2 406.7h1v1h-1zM872.9 404.5h1v1h-1zM871.9 402.7h1v1h-1zM873.3 403.9h1v1h-1zM872.5 406.2h1v1h-1zM873.2 405.8h1v1h-1zM874.7 403.1h1v1h-1zM873.1 405.2h1v1h-1zM873.6 405.8h1v1h-1zM874.4 406.5h1v1h-1zM874.5 404.9h1v1h-1zM875.4 404.3h1v1h-1zM875.3 405.1h1v1h-1zM875.9 404.2h1v1h-1zM875.3 406.2h1v1h-1zM876.1 411.5h1v1h-1zM875.9 406.7h1v1h-1zM876.6 406.7h1v1h-1zM877.0 405.3h1v1h-1zM877.5 405.0h1v1h-1zM877.6 406.6h1v1h-1zM877.2 407.3h1v1h-1zM878.5 407.7h1v1h-1zM878.3 406.0h1v1h-1zM878.6 409.0h1v1h-1zM878.8 408.9h1v1h-1zM879.4 405.9h1v1h-1zM878.7 405.2h1v1h-1zM879.3 407.8h1v1h-1zM880.0 408.5h1v1h-1zM880.8 405.1h1v1h-1zM880.3 407.6h1v1h-1zM880.4 405.5h1v1h-1zM881.1 408.1h1v1h-1zM881.7 404.1h1v1h-1zM882.3 407.9h1v1h-1zM882.1 409.2h1v1h-1zM882.2 406.1h1v1h-1zM882.6 406.0h1v1h-1zM882.7 407.2h1v1h-1zM883.1 406.5h1v1h-1zM883.8 407.7h1v1h-1zM883.3 407.6h1v1h-1zM884.0 407.2h1v1h-1zM884.3 406.4h1v1h-1zM885.0 407.7h1v1h-1zM885.1 407.4h1v1h-1zM884.4 407.8h1v1h-1zM884.9 408.5h1v1h-1zM885.7 407.0h1v1h-1zM886.7 407.7h1v1h-1zM887.1 407.4h1v1h-1zM886.7 406.0h1v1h-1zM887.3 405.7h1v1h-1zM887.7 407.4h1v1h-1zM887.7 406.7h1v1h-1zM888.2 406.9h1v1h-1zM887.9 406.8h1v1h-1zM888.2 406.6h1v1h-1zM888.3 407.9h1v1h-1zM888.7 408.9h1v1h-1zM888.8 407.2h1v1h-1zM889.0 407.7h1v1h-1zM889.4 409.1h1v1h-1zM889.5 408.1h1v1h-1zM889.6 410.1h1v1h-1zM890.2 408.9h1v1h-1zM890.0 409.9h1v1h-1zM889.3 409.3h1v1h-1zM890.9 409.7h1v1h-1zM891.0 409.9h1v1h-1zM891.4 412.2h1v1h-1zM892.0 414.3h1v1h-1zM890.5 412.0h1v1h-1zM891.9 413.0h1v1h-1zM891.6 411.7h1v1h-1zM892.1 412.5h1v1h-1zM892.7 411.2h1v1h-1zM892.8 410.6h1v1h-1zM893.7 411.6h1v1h-1zM892.7 414.4h1v1h-1zM893.6 413.0h1v1h-1zM892.5 412.3h1v1h-1zM894.3 410.6h1v1h-1zM894.0 413.1h1v1h-1zM894.7 413.7h1v1h-1zM895.1 413.7h1v1h-1zM894.9 413.7h1v1h-1zM895.1 412.8h1v1h-1zM895.8 412.5h1v1h-1zM895.0 413.4h1v1h-1zM895.6 413.7h1v1h-1zM896.7 413.8h1v1h-1zM896.7 412.7h1v1h-1zM897.0 412.7h1v1h-1zM897.5 412.8h1v1h-1zM897.3 411.5h1v1h-1zM897.5 413.4h1v1h-1zM898.1 412.1h1v1h-1zM898.5 413.4h1v1h-1zM898.4 412.2h1v1h-1zM899.1 409.7h1v1h-1zM898.8 412.1h1v1h-1zM899.4 412.9h1v1h-1zM900.4 412.2h1v1h-1zM899.9 411.0h1v1h-1zM900.1 411.4h1v1h-1zM900.9 411.3h1v1h-1zM901.3 411.7h1v1h-1zM902.2 411.7h1v1h-1zM902.0 410.7h1v1h-1zM901.7 410.6h1v1h-1zM902.1 408.9h1v1h-1zM902.3 410.2h1v1h-1zM902.6 410.6h1v1h-1zM903.4 411.4h1v1h-1zM903.8 412.8h1v1h-1zM903.5 408.9h1v1h-1zM904.0 410.0h1v1h-1zM904.2 411.6h1v1h-1zM904.7 409.7h1v1h-1zM905.3 409.1h1v1h-1zM904.5 411.2h1v1h-1zM905.2 409.2h1v1h-1zM906.4 411.1h1v1h-1zM906.1 410.2h1v1h-1zM906.3 409.4h1v1h-1zM906.2 409.9h1v1h-1zM906.6 410.7h1v1h-1zM907.0 409.6h1v1h-1zM907.2 409.6h1v1h-1zM906.7 410.2h1v1h-1zM908.0 411.9h1v1h-1zM908.3 410.8h1v1h-1zM908.7 411.4h1v1h-1zM907.6 410.9h1v1h-1zM908.6 412.7h1v1h-1zM910.2 412.1h1v1h-1zM910.0 411.1h1v1h-1zM909.6 411.1h1v1h-1zM909.7 411.5h1v1h-1zM911.1 411.2h1v1h-1zM911.4 412.8h1v1h-1zM911.5 410.9h1v1h-1zM911.6 410.8h1v1h-1zM912.1 410.4h1v1h-1zM912.8 412.0h1v1h-1zM912.4 412.9h1v1h-1zM913.1 410.3h1v1h-1zM912.9 411.4h1v1h-1zM913.3 412.1h1v1h-1zM913.7 412.8h1v1h-1zM913.7 412.1h1v1h-1zM913.9 412.8h1v1h-1zM914.0 412.5h1v1h-1zM915.0 413.4h1v1h-1zM915.4 413.6h1v1h-1zM915.0 412.8h1v1h-1zM915.7 413.5h1v1h-1zM915.5 412.9h1v1h-1zM916.7 415.1h1v1h-1zM916.0 411.8h1v1h-1zM916.3 413.3h1v1h-1zM916.8 413.5h1v1h-1zM917.4 415.0h1v1h-1zM916.8 414.3h1v1h-1zM917.6 414.6h1v1h-1zM918.4 413.6h1v1h-1zM918.4 412.9h1v1h-1zM919.2 414.0h1v1h-1zM919.1 415.2h1v1h-1zM918.5 413.5h1v1h-1zM919.4 415.2h1v1h-1zM920.1 415.5h1v1h-1zM919.6 415.7h1v1h-1zM920.3 414.5h1v1h-1zM920.4 412.6h1v1h-1zM920.5 413.1h1v1h-1zM921.2 414.7h1v1h-1zM921.4 408.8h1v1h-1zM922.0 416.2h1v1h-1zM922.2 414.6h1v1h-1zM922.6 417.0h1v1h-1zM923.1 414.5h1v1h-1zM922.9 415.6h1v1h-1zM923.8 415.5h1v1h-1zM923.9 415.6h1v1h-1zM924.2 414.6h1v1h-1zM924.9 414.3h1v1h-1zM924.1 415.1h1v1h-1zM924.0 413.9h1v1h-1zM925.7 414.6h1v1h-1zM925.6 415.0h1v1h-1zM924.8 414.5h1v1h-1zM926.4 414.6h1v1h-1zM926.1 417.5h1v1h-1zM927.1 414.8h1v1h-1zM926.6 415.0h1v1h-1zM926.1 415.7h1v1h-1zM927.8 416.4h1v1h-1zM928.0 415.6h1v1h-1zM928.2 417.2h1v1h-1zM928.8 417.3h1v1h-1zM928.7 416.0h1v1h-1zM929.0 419.2h1v1h-1zM929.3 416.3h1v1h-1zM929.0 414.7h1v1h-1zM930.5 417.3h1v1h-1zM930.4 418.7h1v1h-1zM930.3 416.7h1v1h-1zM931.0 416.5h1v1h-1zM931.3 420.9h1v1h-1zM931.6 415.8h1v1h-1zM931.5 414.2h1v1h-1zM932.3 417.2h1v1h-1zM931.8 415.4h1v1h-1zM932.3 418.3h1v1h-1zM932.5 416.6h1v1h-1zM933.0 409.5h1v1h-1zM934.0 415.4h1v1h-1zM933.4 414.1h1v1h-1zM933.6 414.5h1v1h-1zM933.9 413.9h1v1h-1zM933.7 413.5h1v1h-1zM934.6 420.0h1v1h-1zM934.8 415.3h1v1h-1zM935.5 415.5h1v1h-1zM935.5 411.5h1v1h-1zM935.7 414.7h1v1h-1zM935.4 415.9h1v1h-1zM935.9 412.9h1v1h-1zM936.3 414.5h1v1h-1zM936.7 412.7h1v1h-1zM937.1 414.9h1v1h-1zM937.0 411.0h1v1h-1zM937.4 412.8h1v1h-1zM937.5 412.1h1v1h-1zM938.1 413.7h1v1h-1zM938.4 414.0h1v1h-1zM938.7 412.4h1v1h-1zM939.1 410.6h1v1h-1zM938.7 410.3h1v1h-1zM938.9 411.1h1v1h-1zM939.6 412.2h1v1h-1zM939.6 412.1h1v1h-1zM940.3 410.6h1v1h-1zM940.6 410.7h1v1h-1zM940.8 411.5h1v1h-1zM941.0 411.1h1v1h-1zM941.6 404.7h1v1h-1zM941.6 410.8h1v1h-1zM941.6 411.3h1v1h-1zM941.7 410.3h1v1h-1zM942.8 411.5h1v1h-1zM942.9 410.4h1v1h-1zM942.9 411.3h1v1h-1zM943.2 410.4h1v1h-1zM943.6 409.2h1v1h-1zM943.9 408.3h1v1h-1zM944.7 408.7h1v1h-1zM944.2 410.6h1v1h-1zM944.9 407.9h1v1h-1zM944.0 408.9h1v1h-1zM945.3 409.4h1v1h-1zM946.3 410.5h1v1h-1zM945.8 407.7h1v1h-1zM946.1 411.3h1v1h-1zM945.7 410.1h1v1h-1zM947.0 409.1h1v1h-1zM947.0 408.2h1v1h-1zM946.8 409.4h1v1h-1zM947.5 408.4h1v1h-1zM947.6 410.0h1v1h-1zM948.1 407.8h1v1h-1zM948.5 410.8h1v1h-1zM948.7 408.3h1v1h-1zM948.9 410.1h1v1h-1zM949.5 410.0h1v1h-1zM949.3 408.3h1v1h-1zM950.0 409.6h1v1h-1zM950.3 410.8h1v1h-1zM950.8 409.8h1v1h-1zM951.4 411.1h1v1h-1zM950.9 409.6h1v1h-1zM951.5 411.5h1v1h-1zM950.9 409.8h1v1h-1zM952.1 411.6h1v1h-1zM951.7 411.0h1v1h-1zM952.8 412.0h1v1h-1zM952.4 409.4h1v1h-1zM953.2 413.2h1v1h-1zM952.9 411.2h1v1h-1zM953.9 410.9h1v1h-1zM954.2 412.1h1v1h-1zM954.1 412.0h1v1h-1zM954.2 410.3h1v1h-1zM955.2 413.0h1v1h-1zM955.1 410.2h1v1h-1zM955.8 410.3h1v1h-1zM955.0 411.1h1v1h-1zM955.9 408.4h1v1h-1zM956.0 413.6h1v1h-1zM956.9 410.7h1v1h-1zM957.1 411.2h1v1h-1zM957.3 412.3h1v1h-1zM957.1 412.4h1v1h-1zM957.5 414.9h1v1h-1zM957.2 412.4h1v1h-1zM959.1 410.9h1v1h-1zM958.8 411.7h1v1h-1zM959.2 410.9h1v1h-1zM959.3 410.4h1v1h-1zM959.9 412.8h1v1h-1zM959.7 409.5h1v1h-1zM960.4 411.0h1v1h-1zM960.1 413.6h1v1h-1zM961.2 412.5h1v1h-1zM961.2 412.0h1v1h-1zM961.4 412.0h1v1h-1zM962.1 411.3h1v1h-1zM961.0 411.4h1v1h-1zM962.2 412.3h1v1h-1zM962.8 410.5h1v1h-1zM963.2 413.4h1v1h-1zM963.2 415.8h1v1h-1zM963.6 412.8h1v1h-1zM964.1 411.8h1v1h-1zM964.3 412.7h1v1h-1zM964.2 412.5h1v1h-1zM964.8 413.0h1v1h-1zM965.1 412.4h1v1h-1zM966.0 412.2h1v1h-1zM964.9 413.0h1v1h-1zM965.8 413.1h1v1h-1zM966.2 412.4h1v1h-1zM966.8 412.7h1v1h-1zM967.4 413.0h1v1h-1zM966.6 412.0h1v1h-1zM967.5 410.2h1v1h-1zM967.9 412.4h1v1h-1zM967.9 412.8h1v1h-1zM968.8 414.2h1v1h-1zM969.2 410.4h1v1h-1zM969.2 414.4h1v1h-1zM968.6 410.6h1v1h-1zM968.8 413.4h1v1h-1zM970.5 411.3h1v1h-1zM970.4 412.2h1v1h-1zM969.8 411.5h1v1h-1zM971.0 415.0h1v1h-1zM971.3 412.9h1v1h-1zM971.9 411.7h1v1h-1zM972.1 410.2h1v1h-1zM971.9 412.6h1v1h-1zM972.9 411.3h1v1h-1zM972.9 413.1h1v1h-1zM972.4 411.0h1v1h-1zM972.8 412.4h1v1h-1zM973.2 412.3h1v1h-1zM974.8 409.6h1v1h-1zM974.0 410.5h1v1h-1zM974.6 412.9h1v1h-1zM975.1 410.0h1v1h-1zM975.3 412.8h1v1h-1zM975.5 410.6h1v1h-1zM975.3 410.8h1v1h-1zM976.0 412.6h1v1h-1zM976.5 410.5h1v1h-1zM976.4 411.2h1v1h-1zM976.6 409.5h1v1h-1zM977.5 412.1h1v1h-1zM977.8 412.4h1v1h-1zM978.4 410.6h1v1h-1zM978.1 411.7h1v1h-1zM978.1 410.7h1v1h-1zM978.7 413.6h1v1h-1zM978.9 410.6h1v1h-1zM979.4 411.0h1v1h-1zM980.3 410.7h1v1h-1zM980.7 412.3h1v1h-1zM979.8 411.8h1v1h-1zM980.5 412.7h1v1h-1zM980.6 411.2h1v1h-1zM981.7 409.8h1v1h-1zM981.8 408.3h1v1h-1zM981.8 410.3h1v1h-1zM981.7 413.1h1v1h-1zM982.2 413.2h1v1h-1zM982.8 409.8h1v1h-1zM983.2 410.9h1v1h-1zM983.2 413.0h1v1h-1zM982.9 411.8h1v1h-1zM983.7 411.9h1v1h-1zM983.2 413.6h1v1h-1zM984.6 411.3h1v1h-1zM984.8 411.1h1v1h-1zM985.0 413.1h1v1h-1zM985.0 408.7h1v1h-1zM985.3 406.4h1v1h-1zM986.8 413.6h1v1h-1zM986.3 412.6h1v1h-1zM986.5 413.4h1v1h-1zM987.0 413.2h1v1h-1zM986.9 412.6h1v1h-1zM987.6 413.4h1v1h-1zM986.9 415.5h1v1h-1zM987.4 411.8h1v1h-1zM987.5 410.5h1v1h-1zM988.4 412.5h1v1h-1zM988.1 411.7h1v1h-1zM988.9 414.8h1v1h-1zM987.8 413.6h1v1h-1zM989.1 414.8h1v1h-1zM988.8 412.6h1v1h-1zM989.3 413.5h1v1h-1zM990.5 414.1h1v1h-1zM990.9 413.6h1v1h-1zM991.1 416.1h1v1h-1zM991.1 415.1h1v1h-1zM990.7 415.6h1v1h-1zM991.0 415.4h1v1h-1zM991.6 415.4h1v1h-1zM992.1 420.1h1v1h-1zM992.3 413.7h1v1h-1zM992.8 415.6h1v1h-1zM992.7 414.2h1v1h-1zM993.0 414.8h1v1h-1zM992.9 415.8h1v1h-1zM993.8 416.0h1v1h-1zM994.5 414.6h1v1h-1zM995.0 414.9h1v1h-1zM995.1 414.9h1v1h-1zM994.8 415.0h1v1h-1zM995.3 417.5h1v1h-1zM995.6 414.3h1v1h-1zM996.1 414.6h1v1h-1zM995.8 413.0h1v1h-1zM997.0 413.4h1v1h-1zM997.3 413.1h1v1h-1zM997.4 414.6h1v1h-1zM997.3 415.9h1v1h-1zM998.2 415.9h1v1h-1zM999.2 416.7h1v1h-1zM998.4 415.0h1v1h-1zM998.1 414.7h1v1h-1zM998.9 415.0h1v1h-1zM999.3 413.4h1v1h-1zM999.4 417.3h1v1h-1zM1000.4 419.0h1v1h-1zM1000.5 414.1h1v1h-1zM1000.2 415.2h1v1h-1zM1000.4 413.3h1v1h-1zM1000.9 416.9h1v1h-1zM1001.5 414.2h1v1h-1zM1001.5 418.2h1v1h-1zM1001.4 416.5h1v1h-1zM1002.4 412.9h1v1h-1zM1002.5 414.8h1v1h-1zM1003.4 415.2h1v1h-1zM1003.9 416.0h1v1h-1zM1003.3 413.4h1v1h-1zM1003.7 414.1h1v1h-1zM1003.7 413.8h1v1h-1zM1004.5 414.2h1v1h-1zM1004.5 412.6h1v1h-1zM1005.1 414.1h1v1h-1zM1005.2 412.4h1v1h-1zM1005.4 412.3h1v1h-1zM1006.6 411.7h1v1h-1zM1005.9 414.0h1v1h-1zM1006.4 410.4h1v1h-1zM1005.9 413.8h1v1h-1zM1007.0 413.9h1v1h-1zM1007.7 412.1h1v1h-1zM1007.3 411.2h1v1h-1zM1007.4 411.9h1v1h-1zM1008.2 410.7h1v1h-1zM1008.2 413.1h1v1h-1zM1008.6 411.2h1v1h-1zM1008.3 411.8h1v1h-1zM1008.5 412.3h1v1h-1zM1009.0 412.4h1v1h-1zM1009.1 411.2h1v1h-1zM1009.4 410.6h1v1h-1zM1009.5 411.0h1v1h-1zM1010.2 409.2h1v1h-1zM1011.0 411.8h1v1h-1zM1010.6 410.2h1v1h-1zM1011.1 409.3h1v1h-1zM1011.5 411.9h1v1h-1zM1012.4 410.3h1v1h-1zM1013.0 409.9h1v1h-1zM1012.0 410.2h1v1h-1zM1012.3 410.4h1v1h-1zM1012.4 408.8h1v1h-1zM1013.3 410.3h1v1h-1zM1014.0 411.3h1v1h-1zM1013.5 408.9h1v1h-1zM1014.1 408.4h1v1h-1zM1013.6 407.9h1v1h-1zM1014.4 408.1h1v1h-1zM1014.4 408.1h1v1h-1zM1015.6 409.9h1v1h-1zM1015.8 408.8h1v1h-1zM1015.7 409.5h1v1h-1zM1015.5 411.9h1v1h-1zM1016.6 409.2h1v1h-1zM1016.2 408.6h1v1h-1zM1016.7 407.4h1v1h-1zM1017.1 407.6h1v1h-1zM1017.8 408.4h1v1h-1zM1018.3 407.0h1v1h-1zM1018.3 408.1h1v1h-1zM1019.0 408.5h1v1h-1zM1018.0 409.9h1v1h-1zM1018.6 408.5h1v1h-1zM1019.6 409.3h1v1h-1zM1019.7 410.0h1v1h-1zM1019.6 410.5h1v1h-1zM1019.8 409.0h1v1h-1zM1020.5 411.7h1v1h-1zM1020.9 409.1h1v1h-1zM1021.8 410.7h1v1h-1zM1021.3 409.8h1v1h-1zM1020.9 411.9h1v1h-1zM1021.4 411.7h1v1h-1zM1021.6 409.1h1v1h-1zM1022.8 409.4h1v1h-1zM1022.2 409.1h1v1h-1zM1021.9 410.8h1v1h-1zM1022.8 409.7h1v1h-1zM1023.6 410.8h1v1h-1zM1023.7 411.1h1v1h-1zM1024.5 410.9h1v1h-1zM1024.4 413.2h1v1h-1zM1024.6 410.6h1v1h-1zM1024.4 411.3h1v1h-1zM1024.9 409.6h1v1h-1zM1025.1 410.8h1v1h-1zM1025.1 411.1h1v1h-1zM1024.9 410.8h1v1h-1zM1026.0 412.2h1v1h-1zM1026.3 412.3h1v1h-1zM1026.8 413.1h1v1h-1zM1026.9 412.5h1v1h-1zM1026.8 413.0h1v1h-1zM1026.8 412.9h1v1h-1zM1027.9 414.0h1v1h-1zM1027.8 414.9h1v1h-1zM1028.3 412.8h1v1h-1zM1028.0 412.8h1v1h-1zM1027.9 415.2h1v1h-1zM1028.0 413.7h1v1h-1zM1028.3 415.9h1v1h-1zM1028.5 415.2h1v1h-1zM1028.5 413.4h1v1h-1zM1029.0 414.2h1v1h-1zM1029.3 414.5h1v1h-1zM1029.5 418.7h1v1h-1zM1030.5 415.2h1v1h-1zM1029.8 417.7h1v1h-1zM1030.6 415.6h1v1h-1zM1030.1 415.4h1v1h-1zM1030.5 417.3h1v1h-1zM1030.5 418.1h1v1h-1zM1030.1 417.4h1v1h-1zM1030.6 418.7h1v1h-1zM1031.2 417.9h1v1h-1zM1031.5 420.4h1v1h-1zM1031.3 420.0h1v1h-1zM1031.2 419.0h1v1h-1zM1031.3 419.5h1v1h-1zM1031.0 419.2h1v1h-1zM1030.5 421.7h1v1h-1zM1031.4 419.7h1v1h-1zM1031.0 421.4h1v1h-1zM1030.9 421.8h1v1h-1zM1031.6 421.3h1v1h-1zM1031.5 422.9h1v1h-1zM1031.2 421.1h1v1h-1zM1031.2 422.6h1v1h-1zM1031.4 423.0h1v1h-1zM1031.7 422.5h1v1h-1zM1031.4 422.6h1v1h-1zM1031.7 422.0h1v1h-1zM1031.7 424.1h1v1h-1zM1030.9 423.1h1v1h-1zM1031.5 422.7h1v1h-1zM1031.4 423.4h1v1h-1zM1031.0 422.4h1v1h-1zM1032.0 419.9h1v1h-1zM1031.6 421.3h1v1h-1zM1031.5 420.3h1v1h-1zM1031.5 420.4h1v1h-1zM1032.1 420.9h1v1h-1zM1031.4 420.0h1v1h-1zM1031.5 418.8h1v1h-1zM1031.8 419.5h1v1h-1zM1031.9 419.1h1v1h-1zM1032.3 416.9h1v1h-1zM1031.0 417.8h1v1h-1zM1031.0 417.9h1v1h-1zM1030.8 418.0h1v1h-1zM1031.5 414.8h1v1h-1zM1031.8 417.0h1v1h-1zM1031.6 414.6h1v1h-1zM1031.6 415.2h1v1h-1zM1031.2 416.1h1v1h-1zM1032.0 414.7h1v1h-1zM1031.5 413.9h1v1h-1zM1032.3 414.3h1v1h-1zM1031.8 414.5h1v1h-1zM1031.3 414.0h1v1h-1zM1030.9 412.9h1v1h-1zM1032.6 411.7h1v1h-1zM1031.2 413.0h1v1h-1zM1031.9 413.7h1v1h-1zM1032.2 410.5h1v1h-1zM1031.5 412.5h1v1h-1zM1030.6 410.5h1v1h-1zM1031.6 411.0h1v1h-1zM1031.9 413.2h1v1h-1zM1031.8 412.4h1v1h-1zM1031.9 412.0h1v1h-1zM1031.4 402.2h1v1h-1zM1031.3 411.1h1v1h-1zM1031.7 408.4h1v1h-1zM1031.6 410.1h1v1h-1zM1032.6 409.7h1v1h-1zM1031.9 407.3h1v1h-1zM1031.5 406.3h1v1h-1zM1032.1 410.0h1v1h-1zM1032.0 409.3h1v1h-1zM1032.4 408.2h1v1h-1zM1032.1 406.8h1v1h-1zM1031.9 406.9h1v1h-1zM1031.8 407.4h1v1h-1zM1032.0 406.2h1v1h-1zM1032.4 408.5h1v1h-1zM1031.6 402.7h1v1h-1zM1032.1 405.5h1v1h-1zM1031.2 404.7h1v1h-1zM1032.5 405.2h1v1h-1zM1032.0 407.2h1v1h-1zM1032.7 404.5h1v1h-1zM1031.8 403.7h1v1h-1zM1031.8 403.6h1v1h-1zM1032.1 405.1h1v1h-1zM1032.0 401.8h1v1h-1zM1032.1 402.9h1v1h-1zM1031.6 403.1h1v1h-1zM1032.3 401.0h1v1h-1zM1031.6 401.8h1v1h-1zM1031.7 401.8h1v1h-1zM1032.2 399.9h1v1h-1zM1032.0 403.2h1v1h-1zM1031.3 399.3h1v1h-1zM1032.0 402.0h1v1h-1zM1031.5 401.7h1v1h-1zM1031.9 398.7h1v1h-1zM1031.2 399.4h1v1h-1zM1032.3 398.3h1v1h-1zM1032.4 399.5h1v1h-1zM1032.0 398.0h1v1h-1zM1032.0 398.5h1v1h-1zM1031.9 399.1h1v1h-1zM1031.9 397.5h1v1h-1zM1032.2 397.9h1v1h-1zM1032.9 396.3h1v1h-1zM1032.0 395.7h1v1h-1zM1031.1 396.2h1v1h-1zM1031.8 396.8h1v1h-1zM1031.4 397.1h1v1h-1zM1032.0 395.6h1v1h-1zM1032.4 396.6h1v1h-1zM1031.9 394.2h1v1h-1zM1032.9 394.1h1v1h-1zM1032.7 395.2h1v1h-1zM1031.8 395.1h1v1h-1zM1032.5 395.3h1v1h-1zM1031.5 394.6h1v1h-1zM1032.3 394.2h1v1h-1zM1031.9 391.9h1v1h-1zM1031.7 394.4h1v1h-1zM1032.2 393.2h1v1h-1zM1032.8 390.1h1v1h-1zM1032.4 390.7h1v1h-1zM1032.3 394.0h1v1h-1zM1032.3 392.0h1v1h-1zM1033.3 393.2h1v1h-1zM1033.4 391.2h1v1h-1zM1033.9 391.5h1v1h-1zM1033.3 390.3h1v1h-1zM1034.8 392.5h1v1h-1zM1035.5 392.0h1v1h-1zM1034.4 391.5h1v1h-1zM1035.0 391.0h1v1h-1zM1035.3 391.0h1v1h-1zM1035.9 392.0h1v1h-1zM1036.0 390.2h1v1h-1zM1036.9 390.5h1v1h-1zM1036.4 390.2h1v1h-1zM1036.8 389.3h1v1h-1zM1036.8 388.0h1v1h-1zM1037.5 388.8h1v1h-1zM1037.9 390.7h1v1h-1zM1038.2 390.5h1v1h-1zM1038.8 390.9h1v1h-1zM1039.0 392.5h1v1h-1zM1038.9 390.1h1v1h-1zM1039.6 391.1h1v1h-1zM1039.7 391.8h1v1h-1zM1040.5 390.6h1v1h-1zM1040.0 389.1h1v1h-1zM1040.1 391.9h1v1h-1zM1040.5 389.4h1v1h-1zM1041.3 389.8h1v1h-1zM1041.3 390.0h1v1h-1zM1042.3 390.4h1v1h-1zM1042.2 390.8h1v1h-1zM1042.8 391.7h1v1h-1zM1042.9 389.1h1v1h-1zM1042.8 388.8h1v1h-1zM1043.5 391.7h1v1h-1zM1044.2 389.7h1v1h-1zM1044.0 390.0h1v1h-1zM1044.9 390.7h1v1h-1zM1044.2 390.9h1v1h-1zM1045.1 392.0h1v1h-1zM1044.4 390.7h1v1h-1zM1045.6 390.4h1v1h-1zM1046.1 391.1h1v1h-1zM1046.0 391.4h1v1h-1zM1046.3 392.0h1v1h-1zM1046.3 395.4h1v1h-1zM1047.5 390.3h1v1h-1zM1046.6 392.3h1v1h-1zM1047.8 392.1h1v1h-1zM1048.1 391.8h1v1h-1zM1048.0 390.5h1v1h-1zM1048.0 392.5h1v1h-1zM1047.8 396.5h1v1h-1zM1048.7 393.2h1v1h-1zM1048.9 392.3h1v1h-1zM1049.8 391.5h1v1h-1zM1049.8 393.2h1v1h-1zM1049.6 394.2h1v1h-1zM1050.6 392.0h1v1h-1zM1051.6 393.0h1v1h-1zM1050.6 392.7h1v1h-1zM1051.1 393.3h1v1h-1zM1052.3 391.9h1v1h-1zM1051.8 390.8h1v1h-1zM1052.7 394.0h1v1h-1zM1052.1 393.3h1v1h-1zM1052.9 393.9h1v1h-1zM1053.3 393.3h1v1h-1zM1053.3 393.2h1v1h-1zM1053.4 394.6h1v1h-1zM1053.5 394.0h1v1h-1zM1055.0 392.7h1v1h-1zM1054.0 392.1h1v1h-1zM1054.4 391.9h1v1h-1zM1054.6 390.5h1v1h-1zM1054.8 390.0h1v1h-1zM1054.9 391.2h1v1h-1zM1056.4 392.0h1v1h-1zM1056.3 392.9h1v1h-1zM1056.0 392.2h1v1h-1zM1057.0 390.7h1v1h-1zM1056.9 390.4h1v1h-1zM1057.2 391.7h1v1h-1zM1057.9 391.5h1v1h-1zM1058.1 391.0h1v1h-1zM1057.8 392.0h1v1h-1zM1058.5 390.3h1v1h-1zM1058.6 392.3h1v1h-1zM1058.2 390.7h1v1h-1zM1059.3 391.7h1v1h-1zM1059.4 389.6h1v1h-1zM1060.0 391.4h1v1h-1zM1059.9 389.9h1v1h-1zM1060.7 397.3h1v1h-1zM1060.6 390.2h1v1h-1zM1061.2 391.9h1v1h-1zM1061.3 387.7h1v1h-1zM1061.6 388.5h1v1h-1zM1062.3 389.5h1v1h-1zM913.8 412.2h1v1h-1zM932.3 417.9h1v1h-1zM627.2 407.2h1v1h-1zM614.7 418.0h1v1h-1zM965.6 405.5h1v1h-1zM1031.2 395.2h1v1h-1zM1005.8 419.6h1v1h-1zM821.9 414.3h1v1h-1zM654.9 408.9h1v1h-1zM814.9 401.3h1v1h-1zM620.0 421.7h1v1h-1zM1032.9 398.3h1v1h-1zM668.2 416.3h1v1h-1zM890.4 402.0h1v1h-1zM855.5 400.5h1v1h-1zM624.5 426.8h1v1h-1zM784.5 421.1h1v1h-1zM715.7 426.5h1v1h-1zM672.6 423.8h1v1h-1zM843.9 395.4h1v1h-1zM830.4 413.0h1v1h-1zM843.1 410.7h1v1h-1zM776.3 427.0h1v1h-1zM896.8 405.6h1v1h-1zM616.0 424.1h1v1h-1zM906.7 406.5h1v1h-1zM739.6 419.3h1v1h-1zM867.9 400.4h1v1h-1zM620.7 427.4h1v1h-1zM662.9 412.4h1v1h-1zM875.9 406.2h1v1h-1zM715.6 418.4h1v1h-1zM795.9 430.8h1v1h-1zM864.0 407.7h1v1h-1zM904.9 417.3h1v1h-1zM903.8 415.6h1v1h-1zM1004.8 419.8h1v1h-1zM706.0 413.7h1v1h-1zM899.1 408.0h1v1h-1zM950.9 410.4h1v1h-1zM649.7 417.7h1v1h-1zM834.1 394.7h1v1h-1zM950.7 405.6h1v1h-1zM881.9 410.9h1v1h-1zM735.1 418.2h1v1h-1zM822.6 414.9h1v1h-1zM773.8 441.1h1v1h-1zM633.0 417.8h1v1h-1zM715.2 409.6h1v1h-1zM691.3 404.3h1v1h-1zM949.5 407.6h1v1h-1zM840.7 393.2h1v1h-1zM984.7 405.4h1v1h-1zM956.1 408.6h1v1h-1zM699.8 409.5h1v1h-1zM988.7 403.2h1v1h-1zM985.6 402.0h1v1h-1zM830.9 404.6h1v1h-1zM812.7 408.7h1v1h-1zM1031.3 398.4h1v1h-1zM990.9 407.4h1v1h-1zM1030.7 416.3h1v1h-1zM637.9 408.5h1v1h-1zM687.8 416.7h1v1h-1zM682.2 413.7h1v1h-1zM1046.8 385.8h1v1h-1zM616.7 420.9h1v1h-1zM803.7 419.7h1v1h-1zM1031.2 395.3h1v1h-1zM987.1 414.3h1v1h-1zM651.5 417.6h1v1h-1zM784.0 423.4h1v1h-1zM891.5 397.2h1v1h-1zM868.6 409.4h1v1h-1zM977.5 405.6h1v1h-1zM665.7 414.7h1v1h-1zM828.9 424.2h1v1h-1zM990.1 405.0h1v1h-1zM808.7 408.9h1v1h-1zM654.3 410.8h1v1h-1zM782.1 424.5h1v1h-1zM934.3 417.3h1v1h-1zM803.0 420.6h1v1h-1zM849.9 396.3h1v1h-1zM682.0 418.9h1v1h-1zM654.4 407.4h1v1h-1zM635.0 424.1h1v1h-1zM804.8 425.0h1v1h-1zM1006.6 405.0h1v1h-1zM1033.0 395.3h1v1h-1zM623.7 418.7h1v1h-1zM621.7 419.6h1v1h-1zM778.3 444.8h1v1h-1zM629.0 424.0h1v1h-1zM1011.1 412.2h1v1h-1zM808.3 414.0h1v1h-1zM781.8 422.6h1v1h-1zM760.9 422.5h1v1h-1zM876.7 397.3h1v1h-1zM967.0 411.6h1v1h-1zM935.8 411.1h1v1h-1zM627.7 428.2h1v1h-1zM629.2 423.7h1v1h-1zM679.5 419.3h1v1h-1zM870.9 395.5h1v1h-1zM632.2 425.4h1v1h-1zM963.2 409.7h1v1h-1zM658.2 416.0h1v1h-1zM672.2 412.0h1v1h-1zM733.0 423.8h1v1h-1zM988.5 405.7h1v1h-1zM828.9 425.9h1v1h-1zM782.3 417.2h1v1h-1zM688.0 406.1h1v1h-1zM837.1 402.4h1v1h-1zM987.9 416.0h1v1h-1zM834.1 395.8h1v1h-1zM666.6 415.9h1v1h-1zM686.1 410.1h1v1h-1zM642.1 418.1h1v1h-1zM675.0 411.4h1v1h-1zM639.4 421.8h1v1h-1zM880.8 409.9h1v1h-1zM1033.2 392.3h1v1h-1zM781.2 432.2h1v1h-1zM630.4 428.1h1v1h-1zM664.7 413.7h1v1h-1zM828.6 419.6h1v1h-1zM1031.6 404.9h1v1h-1zM997.8 406.5h1v1h-1zM671.9 411.7h1v1h-1zM624.0 410.7h1v1h-1zM857.6 407.8h1v1h-1zM704.6 416.9h1v1h-1zM1042.4 389.4h1v1h-1zM786.6 427.6h1v1h-1zM842.6 397.8h1v1h-1zM741.1 420.6h1v1h-1zM720.8 420.9h1v1h-1zM631.7 425.3h1v1h-1zM851.8 405.4h1v1h-1zM693.1 414.2h1v1h-1zM942.9 400.5h1v1h-1zM914.4 401.8h1v1h-1zM620.9 419.8h1v1h-1zM784.1 418.4h1v1h-1zM1013.9 405.8h1v1h-1zM979.3 409.9h1v1h-1zM860.2 399.8h1v1h-1zM636.0 423.2h1v1h-1zM834.3 407.2h1v1h-1zM1061.2 382.3h1v1h-1zM689.5 420.9h1v1h-1zM784.4 426.7h1v1h-1zM739.8 422.9h1v1h-1zM614.7 421.8h1v1h-1zM1046.4 395.3h1v1h-1zM733.4 422.6h1v1h-1zM886.6 398.2h1v1h-1zM779.9 428.7h1v1h-1zM997.5 410.1h1v1h-1zM827.9 419.3h1v1h-1zM858.7 395.6h1v1h-1zM780.5 436.3h1v1h-1zM842.4 409.9h1v1h-1zM1032.7 414.4h1v1h-1zM831.1 404.7h1v1h-1zM901.5 403.7h1v1h-1zM980.1 415.4h1v1h-1zM650.0 408.1h1v1h-1zM793.4 415.0h1v1h-1zM622.6 419.4h1v1h-1zM946.3 406.1h1v1h-1zM909.7 412.1h1v1h-1zM680.9 418.9h1v1h-1zM750.1 437.4h1v1h-1zM1046.6 393.5h1v1h-1zM825.5 422.6h1v1h-1zM616.7 414.6h1v1h-1zM721.2 419.1h1v1h-1zM940.3 412.9h1v1h-1zM972.8 398.6h1v1h-1zM873.7 400.5h1v1h-1zM892.7 400.9h1v1h-1zM621.1 421.0h1v1h-1zM1023.7 410.1h1v1h-1zM762.3 430.6h1v1h-1zM720.3 424.6h1v1h-1zM661.1 420.0h1v1h-1zM728.0 420.3h1v1h-1zM946.1 411.5h1v1h-1zM618.5 427.8h1v1h-1zM874.4 401.1h1v1h-1zM1055.2 389.2h1v1h-1zM791.8 426.3h1v1h-1zM656.3 421.2h1v1h-1zM626.3 422.9h1v1h-1zM924.7 403.0h1v1h-1zM1028.8 410.9h1v1h-1zM820.5 401.4h1v1h-1zM610.8 418.0h1v1h-1zM696.4 414.9h1v1h-1zM680.9 422.2h1v1h-1zM768.1 430.0h1v1h-1zM950.8 411.1h1v1h-1zM683.8 411.7h1v1h-1zM702.3 415.8h1v1h-1zM620.5 423.7h1v1h-1zM773.7 432.8h1v1h-1zM892.9 399.2h1v1h-1zM841.7 406.1h1v1h-1zM630.7 427.2h1v1h-1zM980.5 406.8h1v1h-1zM670.5 408.3h1v1h-1zM633.3 420.1h1v1h-1zM905.5 408.5h1v1h-1zM1009.1 413.4h1v1h-1zM843.4 395.5h1v1h-1zM1031.6 388.1h1v1h-1zM995.7 407.4h1v1h-1zM799.8 431.0h1v1h-1zM684.1 415.3h1v1h-1zM681.9 407.5h1v1h-1zM766.8 431.6h1v1h-1zM914.2 413.2h1v1h-1zM682.8 420.5h1v1h-1zM935.1 408.1h1v1h-1zM760.9 431.3h1v1h-1zM1004.1 399.7h1v1h-1zM1008.7 412.2h1v1h-1zM1006.6 408.6h1v1h-1zM784.4 426.3h1v1h-1zM995.6 417.4h1v1h-1zM628.3 418.5h1v1h-1zM719.2 416.9h1v1h-1zM1010.0 400.2h1v1h-1zM1004.8 402.4h1v1h-1zM682.5 413.0h1v1h-1zM790.1 412.6h1v1h-1zM642.4 420.8h1v1h-1zM897.2 411.3h1v1h-1zM926.5 416.2h1v1h-1zM1045.5 388.3h1v1h-1zM1040.4 388.9h1v1h-1zM667.5 417.7h1v1h-1zM920.3 411.4h1v1h-1zM1021.1 407.5h1v1h-1zM832.3 406.4h1v1h-1zM676.6 408.6h1v1h-1zM983.5 416.4h1v1h-1zM805.9 409.8h1v1h-1zM658.1 418.6h1v1h-1zM636.8 415.9h1v1h-1zM824.5 412.6h1v1h-1zM827.9 410.4h1v1h-1zM963.4 406.1h1v1h-1zM833.3 404.8h1v1h-1zM624.2 419.5h1v1h-1zM887.5 405.9h1v1h-1zM699.0 406.9h1v1h-1zM1033.8 388.6h1v1h-1zM1053.6 395.6h1v1h-1zM732.0 421.6h1v1h-1zM852.2 410.3h1v1h-1zM701.3 409.0h1v1h-1zM867.0 402.7h1v1h-1zM859.0 392.5h1v1h-1zM783.4 428.6h1v1h-1zM800.6 428.8h1v1h-1zM831.6 414.9h1v1h-1zM1046.5 389.5h1v1h-1zM1000.3 409.0h1v1h-1zM719.8 431.5h1v1h-1zM691.9 408.5h1v1h-1zM867.4 405.0h1v1h-1zM911.0 408.3h1v1h-1zM816.3 395.5h1v1h-1zM902.4 411.4h1v1h-1zM830.0 412.6h1v1h-1zM683.1 422.5h1v1h-1zM630.6 423.7h1v1h-1zM767.5 438.3h1v1h-1zM787.5 413.5h1v1h-1zM874.3 396.6h1v1h-1zM896.1 404.7h1v1h-1zM613.6 417.8h1v1h-1zM718.2 416.9h1v1h-1zM975.4 405.1h1v1h-1zM825.8 422.0h1v1h-1zM729.3 420.5h1v1h-1zM755.6 424.2h1v1h-1zM880.2 395.6h1v1h-1zM1024.0 408.0h1v1h-1zM797.8 416.1h1v1h-1zM760.4 431.8h1v1h-1zM766.9 440.5h1v1h-1zM951.2 401.6h1v1h-1zM628.4 415.8h1v1h-1zM815.7 402.2h1v1h-1zM1056.9 385.4h1v1h-1zM889.8 398.4h1v1h-1zM876.2 413.8h1v1h-1zM806.8 420.7h1v1h-1zM780.6 435.7h1v1h-1zM791.7 416.9h1v1h-1zM638.7 403.6h1v1h-1zM658.3 418.2h1v1h-1zM770.1 443.4h1v1h-1zM613.2 418.3h1v1h-1zM630.9 419.8h1v1h-1zM727.0 426.6h1v1h-1zM663.3 415.0h1v1h-1zM986.5 412.6h1v1h-1zM733.1 416.3h1v1h-1zM615.4 411.6h1v1h-1zM832.4 408.6h1v1h-1zM962.8 409.4h1v1h-1zM738.0 419.0h1v1h-1zM661.0 415.9h1v1h-1zM878.7 409.7h1v1h-1zM1052.4 387.5h1v1h-1zM1033.3 391.2h1v1h-1zM728.6 418.7h1v1h-1zM1033.0 392.3h1v1h-1zM919.0 404.1h1v1h-1zM957.1 412.9h1v1h-1zM1033.2 419.0h1v1h-1zM808.0 426.5h1v1h-1zM892.2 412.7h1v1h-1zM628.9 411.3h1v1h-1zM904.7 410.2h1v1h-1zM816.8 411.1h1v1h-1zM796.0 416.1h1v1h-1zM634.1 415.4h1v1h-1zM768.8 439.2h1v1h-1zM823.1 405.3h1v1h-1zM1001.1 421.5h1v1h-1zM929.9 408.5h1v1h-1zM632.0 418.6h1v1h-1zM1010.0 408.3h1v1h-1zM960.6 406.4h1v1h-1zM839.0 401.4h1v1h-1zM631.4 421.0h1v1h-1zM779.0 443.3h1v1h-1zM919.5 404.1h1v1h-1zM950.5 400.8h1v1h-1zM624.4 420.0h1v1h-1zM615.3 426.7h1v1h-1zM656.8 409.6h1v1h-1zM633.9 416.8h1v1h-1zM616.2 412.1h1v1h-1zM872.6 404.2h1v1h-1zM619.6 420.9h1v1h-1zM1056.4 394.0h1v1h-1zM808.5 406.1h1v1h-1zM724.3 427.9h1v1h-1zM896.1 412.4h1v1h-1zM961.6 410.8h1v1h-1zM820.6 406.9h1v1h-1zM911.6 403.8h1v1h-1zM889.9 410.8h1v1h-1zM822.5 421.2h1v1h-1zM854.5 394.3h1v1h-1zM824.4 414.6h1v1h-1zM1031.6 417.6h1v1h-1zM616.2 433.1h1v1h-1zM777.9 425.1h1v1h-1zM686.3 403.4h1v1h-1zM871.6 400.0h1v1h-1zM838.0 408.4h1v1h-1zM780.3 435.6h1v1h-1zM628.4 420.8h1v1h-1zM1027.9 405.4h1v1h-1zM869.2 398.7h1v1h-1zM945.6 411.0h1v1h-1zM622.2 424.2h1v1h-1zM740.5 428.7h1v1h-1zM807.5 408.9h1v1h-1zM799.4 418.2h1v1h-1zM978.8 411.6h1v1h-1zM670.7 416.9h1v1h-1zM683.1 414.1h1v1h-1zM807.3 407.6h1v1h-1zM1031.9 395.7h1v1h-1zM781.6 424.3h1v1h-1zM844.7 406.0h1v1h-1zM643.9 411.8h1v1h-1zM783.8 429.2h1v1h-1zM692.9 412.5h1v1h-1zM887.8 405.9h1v1h-1zM776.4 428.3h1v1h-1zM676.4 409.6h1v1h-1zM1023.0 398.6h1v1h-1zM665.0 417.3h1v1h-1zM970.2 405.3h1v1h-1zM796.4 416.9h1v1h-1zM747.1 428.9h1v1h-1zM682.1 420.3h1v1h-1zM830.9 410.7h1v1h-1zM648.6 415.1h1v1h-1zM645.0 410.7h1v1h-1zM643.6 416.1h1v1h-1zM712.6 407.1h1v1h-1zM815.6 402.1h1v1h-1zM612.3 414.3h1v1h-1zM974.2 407.0h1v1h-1zM862.3 399.6h1v1h-1zM714.6 407.9h1v1h-1zM744.7 427.7h1v1h-1zM957.2 398.3h1v1h-1zM684.8 414.7h1v1h-1zM966.7 415.2h1v1h-1zM648.6 411.1h1v1h-1zM821.7 415.2h1v1h-1zM903.1 402.8h1v1h-1zM760.2 430.7h1v1h-1zM730.2 422.0h1v1h-1zM739.6 427.8h1v1h-1zM807.5 406.6h1v1h-1zM943.0 407.4h1v1h-1zM727.3 419.4h1v1h-1zM723.5 418.5h1v1h-1zM738.4 423.6h1v1h-1zM870.6 402.9h1v1h-1zM874.3 402.2h1v1h-1zM925.5 406.6h1v1h-1zM726.5 425.7h1v1h-1zM626.9 426.9h1v1h-1zM1021.7 412.7h1v1h-1zM879.4 403.5h1v1h-1zM786.7 429.5h1v1h-1zM639.6 418.7h1v1h-1zM818.2 405.9h1v1h-1zM881.9 402.3h1v1h-1zM618.8 427.7h1v1h-1zM863.2 401.6h1v1h-1zM633.3 422.6h1v1h-1zM829.7 410.9h1v1h-1zM724.5 430.3h1v1h-1zM682.3 418.8h1v1h-1zM656.0 410.8h1v1h-1zM1030.9 402.4h1v1h-1zM960.3 410.9h1v1h-1zM755.6 434.2h1v1h-1zM779.6 436.9h1v1h-1zM692.6 407.2h1v1h-1zM647.5 408.2h1v1h-1zM797.8 410.8h1v1h-1zM963.5 412.0h1v1h-1zM769.5 435.8h1v1h-1zM635.2 422.0h1v1h-1zM861.6 399.0h1v1h-1zM894.1 405.2h1v1h-1zM653.8 416.6h1v1h-1zM992.7 407.2h1v1h-1zM962.5 402.9h1v1h-1zM973.4 408.6h1v1h-1zM888.0 406.1h1v1h-1zM815.0 400.8h1v1h-1zM693.7 407.1h1v1h-1zM820.0 412.3h1v1h-1zM927.3 417.1h1v1h-1zM804.4 421.6h1v1h-1zM721.3 424.0h1v1h-1zM778.8 431.6h1v1h-1zM740.1 430.2h1v1h-1zM678.7 412.5h1v1h-1zM617.1 424.5h1v1h-1zM853.3 392.8h1v1h-1zM1028.3 416.6h1v1h-1zM1031.4 426.6h1v1h-1zM829.0 414.1h1v1h-1zM1013.3 398.2h1v1h-1zM1035.3 387.3h1v1h-1zM629.3 422.4h1v1h-1zM818.9 413.8h1v1h-1zM926.7 417.0h1v1h-1zM647.1 415.3h1v1h-1zM827.3 427.2h1v1h-1zM1044.1 390.9h1v1h-1zM773.3 432.7h1v1h-1zM883.1 391.5h1v1h-1zM809.7 407.0h1v1h-1zM976.7 403.1h1v1h-1zM644.7 409.8h1v1h-1zM638.9 408.1h1v1h-1zM658.3 406.1h1v1h-1zM780.3 435.6h1v1h-1zM909.5 403.8h1v1h-1zM682.3 398.9h1v1h-1zM967.6 408.2h1v1h-1zM815.9 406.8h1v1h-1zM668.1 415.5h1v1h-1zM699.0 410.6h1v1h-1zM841.3 404.1h1v1h-1zM891.1 399.7h1v1h-1zM979.4 409.0h1v1h-1zM807.6 416.5h1v1h-1zM1030.2 402.4h1v1h-1zM705.3 412.7h1v1h-1zM751.3 428.9h1v1h-1zM701.4 409.1h1v1h-1zM662.4 414.6h1v1h-1zM985.4 405.1h1v1h-1zM890.0 403.9h1v1h-1zM809.7 420.1h1v1h-1zM994.9 402.9h1v1h-1zM703.2 417.8h1v1h-1zM830.6 404.9h1v1h-1zM1006.8 402.9h1v1h-1zM624.3 412.4h1v1h-1zM622.2 419.5h1v1h-1zM614.7 419.6h1v1h-1zM617.5 426.4h1v1h-1zM714.9 417.9h1v1h-1zM786.3 416.9h1v1h-1zM1029.9 405.4h1v1h-1zM1036.1 387.0h1v1h-1zM858.3 410.7h1v1h-1zM680.2 409.6h1v1h-1zM832.4 405.8h1v1h-1zM1037.3 388.9h1v1h-1zM816.2 407.7h1v1h-1zM851.0 405.2h1v1h-1zM782.3 430.0h1v1h-1zM879.5 404.4h1v1h-1zM712.1 415.7h1v1h-1zM640.3 414.6h1v1h-1zM756.7 424.2h1v1h-1zM634.7 412.2h1v1h-1zM1058.3 391.0h1v1h-1zM613.5 417.7h1v1h-1zM1012.3 397.1h1v1h-1zM621.9 423.7h1v1h-1zM844.6 413.5h1v1h-1zM720.2 412.4h1v1h-1zM833.6 408.0h1v1h-1zM772.3 439.5h1v1h-1zM890.2 401.6h1v1h-1zM903.6 410.1h1v1h-1zM628.2 415.2h1v1h-1zM1032.2 387.4h1v1h-1zM932.4 410.8h1v1h-1zM826.7 423.0h1v1h-1zM667.1 419.2h1v1h-1zM830.0 412.6h1v1h-1zM854.3 402.9h1v1h-1zM832.9 403.9h1v1h-1zM926.4 407.1h1v1h-1zM1032.0 394.9h1v1h-1zM664.6 417.7h1v1h-1zM728.1 417.3h1v1h-1zM908.6 405.2h1v1h-1zM619.4 424.0h1v1h-1zM869.7 397.5h1v1h-1zM708.0 415.7h1v1h-1zM688.0 404.3h1v1h-1zM631.8 427.3h1v1h-1zM866.6 408.1h1v1h-1zM828.9 413.4h1v1h-1zM781.4 415.1h1v1h-1zM783.5 422.3h1v1h-1zM616.0 428.0h1v1h-1zM1031.5 389.3h1v1h-1zM910.6 401.1h1v1h-1zM734.9 418.3h1v1h-1zM631.8 421.9h1v1h-1zM974.8 414.6h1v1h-1zM978.7 411.6h1v1h-1zM887.3 405.6h1v1h-1zM1030.8 394.7h1v1h-1zM797.2 412.4h1v1h-1zM966.5 413.0h1v1h-1zM892.9 396.9h1v1h-1zM713.1 415.5h1v1h-1zM953.4 402.9h1v1h-1zM997.8 417.9h1v1h-1zM723.8 422.4h1v1h-1zM653.6 404.3h1v1h-1zM618.7 428.5h1v1h-1zM953.6 409.9h1v1h-1zM828.0 410.1h1v1h-1zM749.5 432.8h1v1h-1zM828.4 413.6h1v1h-1zM829.0 417.5h1v1h-1zM833.3 396.7h1v1h-1zM803.5 425.4h1v1h-1zM620.2 422.4h1v1h-1zM623.1 415.9h1v1h-1zM654.3 404.1h1v1h-1zM688.7 413.3h1v1h-1zM630.0 428.0h1v1h-1zM959.5 402.3h1v1h-1zM821.5 415.6h1v1h-1zM890.5 405.0h1v1h-1zM832.1 413.0h1v1h-1zM994.6 404.1h1v1h-1zM611.7 415.7h1v1h-1zM771.9 437.3h1v1h-1zM806.5 416.1h1v1h-1zM618.3 435.3h1v1h-1zM803.6 422.6h1v1h-1zM647.4 418.1h1v1h-1zM790.9 416.9h1v1h-1zM747.2 426.2h1v1h-1zM753.9 434.2h1v1h-1zM718.4 421.3h1v1h-1zM671.1 421.3h1v1h-1zM663.7 419.7h1v1h-1zM721.4 417.6h1v1h-1zM1046.0 393.5h1v1h-1zM906.8 403.8h1v1h-1zM619.1 423.6h1v1h-1zM1039.4 387.3h1v1h-1zM790.0 409.2h1v1h-1zM626.0 403.7h1v1h-1zM808.1 408.9h1v1h-1zM634.4 417.8h1v1h-1zM967.7 398.3h1v1h-1zM925.3 407.3h1v1h-1zM1030.1 410.7h1v1h-1zM968.4 406.8h1v1h-1zM783.3 427.1h1v1h-1zM656.2 408.4h1v1h-1zM700.0 411.7h1v1h-1zM792.6 411.9h1v1h-1zM890.7 401.1h1v1h-1zM939.1 414.4h1v1h-1zM727.3 415.3h1v1h-1zM812.5 405.0h1v1h-1zM788.2 410.5h1v1h-1zM941.0 401.7h1v1h-1zM782.1 423.5h1v1h-1zM630.2 427.5h1v1h-1zM1060.5 391.7h1v1h-1zM915.7 416.0h1v1h-1zM1001.0 414.3h1v1h-1zM839.2 408.9h1v1h-1zM808.5 411.4h1v1h-1zM816.4 416.4h1v1h-1zM618.2 430.7h1v1h-1zM687.1 409.0h1v1h-1zM847.6 394.5h1v1h-1zM823.9 410.2h1v1h-1zM707.7 416.2h1v1h-1zM802.4 426.8h1v1h-1zM806.8 406.4h1v1h-1zM841.4 411.3h1v1h-1zM953.4 409.1h1v1h-1zM731.3 417.6h1v1h-1zM967.1 403.8h1v1h-1zM920.0 413.5h1v1h-1zM788.0 413.3h1v1h-1zM826.7 410.7h1v1h-1zM972.9 407.6h1v1h-1zM724.3 420.8h1v1h-1zM828.2 426.7h1v1h-1zM861.4 412.6h1v1h-1zM815.1 403.8h1v1h-1zM1032.5 403.9h1v1h-1zM739.2 418.6h1v1h-1zM720.1 418.7h1v1h-1zM800.8 428.4h1v1h-1zM782.9 436.2h1v1h-1zM824.7 419.1h1v1h-1zM926.0 408.2h1v1h-1zM845.3 405.0h1v1h-1zM851.9 392.7h1v1h-1zM989.7 414.4h1v1h-1zM637.8 404.7h1v1h-1zM924.9 410.8h1v1h-1zM921.6 410.8h1v1h-1zM872.3 408.3h1v1h-1zM892.7 402.7h1v1h-1zM720.1 416.8h1v1h-1zM1008.7 414.9h1v1h-1zM756.7 424.1h1v1h-1zM1041.0 390.9h1v1h-1zM879.5 394.8h1v1h-1zM738.9 423.0h1v1h-1zM707.8 408.8h1v1h-1zM818.0 395.7h1v1h-1zM1056.2 385.9h1v1h-1zM659.5 420.9h1v1h-1zM805.1 424.0h1v1h-1zM790.5 415.4h1v1h-1zM913.8 406.9h1v1h-1zM634.5 409.6h1v1h-1zM1045.0 391.8h1v1h-1zM777.5 427.6h1v1h-1zM828.9 419.5h1v1h-1zM716.4 416.5h1v1h-1zM750.7 422.9h1v1h-1zM607.1 404.0h1v1h-1zM675.1 413.4h1v1h-1zM811.3 407.9h1v1h-1zM835.1 407.6h1v1h-1zM639.2 406.8h1v1h-1zM630.1 425.2h1v1h-1zM772.1 442.4h1v1h-1zM930.9 416.2h1v1h-1zM789.2 426.4h1v1h-1zM1026.6 401.7h1v1h-1zM785.1 421.4h1v1h-1zM610.0 412.2h1v1h-1zM629.8 424.3h1v1h-1zM611.8 419.8h1v1h-1zM907.9 410.3h1v1h-1zM839.2 410.7h1v1h-1zM800.0 426.8h1v1h-1zM625.5 408.6h1v1h-1zM703.3 403.9h1v1h-1zM952.6 405.3h1v1h-1zM1030.4 388.6h1v1h-1zM1028.7 390.2h1v1h-1zM1029.8 395.8h1v1h-1zM1030.1 380.0h1v1h-1zM1029.6 390.9h1v1h-1zM1029.4 385.3h1v1h-1zM1030.0 420.1h1v1h-1zM1030.6 397.7h1v1h-1zM1029.3 423.6h1v1h-1zM1029.8 405.1h1v1h-1zM1030.6 374.1h1v1h-1zM1031.1 425.7h1v1h-1zM1030.0 396.3h1v1h-1zM1029.4 421.3h1v1h-1zM1030.2 404.2h1v1h-1zM1028.6 384.2h1v1h-1zM1029.4 381.8h1v1h-1zM1029.1 377.0h1v1h-1zM1028.2 391.1h1v1h-1zM1029.7 407.2h1v1h-1zM1031.3 420.1h1v1h-1zM1031.0 389.6h1v1h-1zM1029.7 396.4h1v1h-1zM1028.7 419.8h1v1h-1zM1030.6 380.1h1v1h-1zM1030.2 417.0h1v1h-1zM1030.0 408.3h1v1h-1zM1029.4 400.6h1v1h-1zM1029.2 403.4h1v1h-1zM1029.7 403.1h1v1h-1zM1029.7 382.5h1v1h-1zM1030.7 406.8h1v1h-1zM1030.2 404.6h1v1h-1zM1029.5 394.3h1v1h-1zM1030.1 375.9h1v1h-1zM1030.3 412.7h1v1h-1zM1030.4 400.5h1v1h-1zM1030.5 384.3h1v1h-1zM1029.2 385.6h1v1h-1zM1029.6 409.3h1v1h-1z" fill="#169cae"/><path d="M609.5 325.3h1.2v1.2h-1.2zM606.6 339.4h1.2v1.2h-1.2zM606.5 354.0h1.2v1.2h-1.2zM606.5 374.7h1.2v1.2h-1.2zM606.8 382.4h1.2v1.2h-1.2zM609.5 389.2h1.2v1.2h-1.2zM632.6 390.8h1.2v1.2h-1.2zM608.7 395.9h1.2v1.2h-1.2zM608.3 438.2h1.2v1.2h-1.2zM620.4 441.4h1.2v1.2h-1.2zM632.0 444.3h1.2v1.2h-1.2zM607.4 472.4h1.2v1.2h-1.2zM606.8 487.4h1.2v1.2h-1.2zM650.5 502.0h1.2v1.2h-1.2zM727.5 484.5h1.2v1.2h-1.2zM727.0 438.4h1.2v1.2h-1.2zM1034.3 350.5h1.2v1.2h-1.2zM980.3 365.4h1.2v1.2h-1.2zM920.3 371.6h1.2v1.2h-1.2zM866.2 382.4h1.2v1.2h-1.2zM897.8 383.8h1.2v1.2h-1.2zM1034.3 455.4h1.2v1.2h-1.2z" fill="#169cae"/><path d="M631.5 312.3h1.2v1.2h-1.2zM629.3 361.0h1.2v1.2h-1.2zM606.5 437.4h1.2v1.2h-1.2zM649.5 493.4h1.2v1.2h-1.2z" fill="#c23040"/></svg>
<div class="a" style="left:566.6px;width:37.5px;text-align:right;top:509.9px;font-size:8px;line-height:10px;color:#e8e8e8">30</div>
<div class="a" style="left:566.6px;width:37.5px;text-align:right;top:456.5px;font-size:8px;line-height:10px;color:#e8e8e8">60</div>
<div class="a" style="left:566.6px;width:37.5px;text-align:right;top:403.2px;font-size:8px;line-height:10px;color:#e8e8e8">90</div>
<div class="a" style="left:566.6px;width:37.5px;text-align:right;top:349.8px;font-size:8px;line-height:10px;color:#e8e8e8">120</div>
<div class="a" style="left:566.6px;width:37.5px;text-align:right;top:296.4px;font-size:8px;line-height:10px;color:#e8e8e8">150</div>
<div class="a" style="left:581.6px;width:40px;text-align:center;top:571px;font-size:8px;line-height:10px;color:#e8e8e8">0</div>
<div class="a" style="left:662.7px;width:40px;text-align:center;top:571px;font-size:8px;line-height:10px;color:#e8e8e8">10</div>
<div class="a" style="left:738.8px;width:40px;text-align:center;top:571px;font-size:8px;line-height:10px;color:#e8e8e8">20</div>
<div class="a" style="left:814.9px;width:40px;text-align:center;top:571px;font-size:8px;line-height:10px;color:#e8e8e8">30</div>
<div class="a" style="left:891.0px;width:40px;text-align:center;top:571px;font-size:8px;line-height:10px;color:#e8e8e8">40</div>
<div class="a" style="left:967.1px;width:40px;text-align:center;top:571px;font-size:8px;line-height:10px;color:#e8e8e8">50</div>
<div class="a" style="left:1043.2px;width:40px;text-align:center;top:571px;font-size:8px;line-height:10px;color:#e8e8e8">60</div>
<div class="a" style="left:805px;width:70px;text-align:center;top:584px;font-size:7.5px;line-height:10px;color:#9a9ea0">时间 (秒)</div>
<div class="a" style="left:547.5px;width:70px;text-align:center;top:437.5px;font-size:7px;line-height:10px;color:#9a9ea0;transform:rotate(-90deg)">帧数 (FPS)</div>
<div class="a" style="left:893px;top:272.5px;width:14px;height:5px;background:#e8c84a"></div>
<div class="a" style="left:910.5px;top:269.5px;font-size:9px;line-height:11px;color:#e8e8e8;white-space:nowrap">CPU (游戏)</div>
<div class="a" style="left:961.5px;top:272.5px;width:14.5px;height:5px;background:#d23a48"></div>
<div class="a" style="left:979.5px;top:269.5px;font-size:9px;line-height:11px;color:#e8e8e8;white-space:nowrap">CPU (渲染器)</div>
<div class="a" style="left:1039.5px;top:272.5px;width:14.5px;height:5px;background:#0fa3b8"></div>
<div class="a" style="left:1057.5px;top:269.5px;font-size:9px;line-height:11px;color:#e8e8e8;white-space:nowrap">GPU</div>
<div class="key" style="left:53.5px;width:56px">撤离模式</div>
<div class="kt" style="left:116.5px">返回</div>
<div class="key" style="left:158px;width:17px">C</div>
<div class="kt" style="left:182px">重新开始</div>
<div class="key" style="left:249.5px;width:22.3px">F2</div>
<div class="kt" style="left:279px">查看视频设定</div></body></html>
